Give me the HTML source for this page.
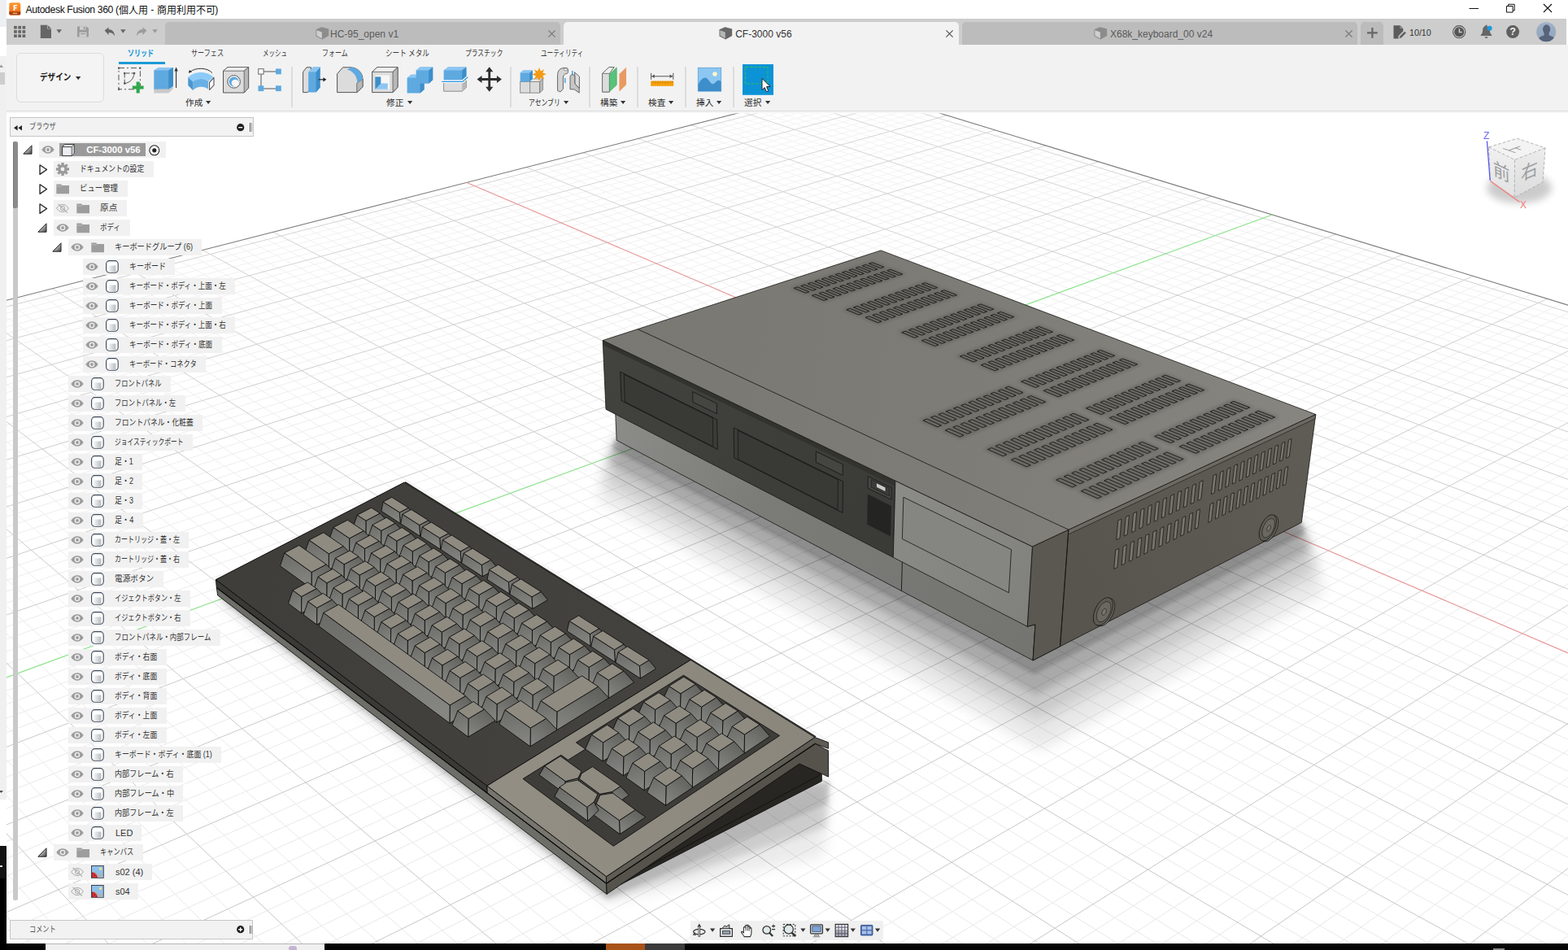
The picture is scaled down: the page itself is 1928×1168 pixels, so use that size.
<!DOCTYPE html>
<html><head><meta charset="utf-8"><title>Autodesk Fusion 360</title>
<style>
html,body{margin:0;padding:0}
body{width:1928px;height:1168px;position:relative;overflow:hidden;background:#fff;font-family:"Liberation Sans",sans-serif;font-size:12px;color:#222}
#vp{position:absolute;left:0;top:0;width:1928px;height:1168px}

.a{position:absolute}
.jt{position:absolute;overflow:visible}
.jt text{font-family:"Liberation Sans","Noto Sans CJK JP",sans-serif}
.t{position:absolute;white-space:nowrap;font-family:"Liberation Sans",sans-serif}
.tab{position:absolute;top:27px;height:28px;border-radius:5px 5px 0 0}
.row{position:absolute;height:19.8px;background:#f1f1f1}
svg.i{position:absolute;overflow:visible}

</style></head><body>
<svg id="vp" width="1928" height="1168" viewBox="0 0 1928 1168">
<clipPath id="vpc"><rect x="8" y="139.5" width="1920" height="1021"/></clipPath>
<g clip-path="url(#vpc)">
<defs><linearGradient id="gmin" gradientUnits="userSpaceOnUse" x1="0" y1="140" x2="0" y2="1160"><stop offset="0" stop-color="#f3f3f3"/><stop offset="0.35" stop-color="#eeeeee"/><stop offset="1" stop-color="#e8e8e8"/></linearGradient><linearGradient id="gmaj" gradientUnits="userSpaceOnUse" x1="0" y1="140" x2="0" y2="1160"><stop offset="0" stop-color="#d6d6d6"/><stop offset="0.4" stop-color="#cdcdcd"/><stop offset="1" stop-color="#c6c6c6"/></linearGradient></defs>
<path d="M-885.3 597.9L1042.2 104.5M-876.1 614.9L1063.6 111M-871.4 623.6L1074.5 114.3M-866.6 632.4L1085.4 117.7M-861.8 641.3L1096.4 121M-851.9 659.4L1118.7 127.9M-846.9 668.7L1130 131.3M-841.8 678.1L1141.4 134.8M-836.7 687.7L1152.9 138.3M-826.1 707.1L1176.2 145.4M-820.7 717.1L1188 149M-815.3 727.2L1199.9 152.7M-809.8 737.4L1211.9 156.3M-798.4 758.3L1236.2 163.7M-792.7 769L1248.5 167.5M-786.8 779.8L1260.9 171.3M-780.8 790.8L1273.4 175.1M-768.7 813.3L1298.8 182.9M-762.4 824.8L1311.6 186.8M-756.1 836.5L1324.6 190.8M-749.7 848.4L1337.7 194.8M-736.5 872.7L1364.2 202.9M-729.8 885.1L1377.7 207M-723 897.7L1391.3 211.1M-716 910.5L1405 215.3M-701.8 936.8L1432.7 223.8M-694.5 950.3L1446.8 228.1M-687.1 964L1461 232.4M-679.5 977.9L1475.4 236.8M-664.1 1006.5L1504.5 245.7M-656.2 1021.1L1519.3 250.2M-648.1 1036L1534.2 254.8M-639.9 1051.2L1549.2 259.4M-623 1082.3L1579.7 268.7M-614.4 1098.3L1595.2 273.4M-605.6 1114.6L1610.9 278.2M-596.6 1131.2L1626.7 283.1M-578.2 1165.3L1658.7 292.9M-568.7 1182.8L1675 297.8M-559 1200.6L1691.5 302.8M-549.2 1218.8L1708.1 307.9M-528.9 1256.3L1741.8 318.2M-518.5 1275.5L1758.9 323.5M-507.8 1295.2L1776.2 328.7M-497 1315.3L1793.7 334.1M-474.6 1356.6L1829.2 344.9M-463 1377.9L1847.2 350.4M-451.3 1399.7L1865.4 356M-439.2 1421.9L1883.9 361.6M-414.4 1467.8L1921.3 373.1M-401.6 1491.5L1940.3 378.9M-388.4 1515.8L1959.6 384.8M-375 1540.5L1979 390.7M-347.3 1591.8L2018.5 402.8M-333 1618.3L2038.6 408.9M-318.3 1645.4L2058.9 415.1M-303.2 1673.2L2079.5 421.4M-272.1 1730.7L2121.3 434.2M-255.9 1760.6L2142.5 440.7M-239.4 1791.1L2164 447.2M-222.4 1822.5L2185.8 453.9M-187.2 1887.6L2230.1 467.4M-168.8 1921.5L2252.6 474.3M-150 1956.2L2275.4 481.3M-130.7 1991.9L2298.5 488.3M-90.5 2066.2L2345.4 502.7M-69.5 2104.9L2369.4 510M-48 2144.8L2393.6 517.4M-25.8 2185.7L2418.1 524.9M20.5 2271.3L2468 540.1M44.7 2316L2493.4 547.9M69.7 2362.1L2519.2 555.7M95.4 2409.6L2545.3 563.7M149.3 2509.2L2598.4 580M177.6 2561.5L2625.5 588.2M206.8 2615.4L2653 596.6M237 2671.2L2680.8 605.1M300.5 2788.6L2737.6 622.5M334 2850.4L2766.5 631.3M368.6 2914.5L2795.8 640.3M404.6 2980.9L2825.6 649.4M480.6 3121.3L2886.2 667.9M520.8 3195.6L2917.2 677.4M562.6 3272.8L2948.6 686.9M606.1 3353.2L2980.5 696.7M1042.2 104.5L3012.7 706.5M1019.3 110.3L2997.3 724.4M1007.8 113.3L2989.4 733.5M996.2 116.3L2981.5 742.7M984.4 119.3L2973.4 752M960.7 125.3L2956.9 771.1M948.8 128.4L2948.6 780.8M936.7 131.5L2940.1 790.6M924.5 134.6L2931.4 800.6M900 140.9L2913.9 820.9M887.5 144.1L2904.9 831.2M875 147.3L2895.8 841.7M862.4 150.5L2886.6 852.4M836.9 157L2867.8 874.1M824 160.3L2858.2 885.2M811 163.7L2848.5 896.5M797.9 167L2838.6 907.9M771.4 173.8L2818.5 931.2M758 177.2L2808.2 943.1M744.5 180.7L2797.7 955.2M730.9 184.2L2787.1 967.4M703.4 191.2L2765.4 992.5M689.4 194.8L2754.3 1005.3M675.4 198.4L2743.1 1018.4M661.2 202L2731.7 1031.6M632.6 209.3L2708.3 1058.6M618.1 213L2696.3 1072.4M603.5 216.8L2684.2 1086.5M588.7 220.6L2671.8 1100.8M558.9 228.2L2646.5 1130M543.8 232.1L2633.6 1145M528.6 235.9L2620.4 1160.2M513.2 239.9L2607 1175.7M482.2 247.8L2579.6 1207.4M466.4 251.9L2565.5 1223.7M450.6 255.9L2551.2 1240.2M434.6 260L2536.7 1257M402.2 268.3L2506.8 1291.6M385.8 272.5L2491.5 1309.3M369.2 276.7L2475.9 1327.3M352.5 281L2460 1345.7M318.7 289.7L2427.3 1383.4M301.5 294.1L2410.6 1402.8M284.3 298.5L2393.5 1422.6M266.8 303L2376.1 1442.7M231.5 312L2340.2 1484.1M213.6 316.6L2321.8 1505.4M195.5 321.2L2303 1527.2M177.3 325.9L2283.9 1549.3M140.3 335.3L2244.4 1595M121.6 340.1L2224 1618.5M102.7 345L2203.3 1642.5M83.6 349.9L2182.1 1667M44.9 359.8L2138.3 1717.6M25.3 364.8L2115.7 1743.7M5.5 369.8L2092.7 1770.4M-14.5 375L2069.1 1797.6M-55 385.3L2020.4 1854M-75.6 390.6L1995.2 1883.1M-96.3 395.9L1969.4 1912.9M-117.3 401.3L1943 1943.4M-159.8 412.2L1888.4 2006.6M-181.4 417.7L1860.1 2039.3M-203.2 423.3L1831.1 2072.8M-225.2 428.9L1801.4 2107.1M-269.9 440.3L1739.8 2178.4M-292.6 446.2L1707.8 2215.4M-315.5 452L1675 2253.4M-338.6 457.9L1641.3 2292.4M-385.6 470L1571.1 2373.4M-409.5 476.1L1534.6 2415.6M-433.6 482.2L1497.1 2459M-457.9 488.5L1458.6 2503.6M-507.4 501.1L1378.1 2596.6M-532.5 507.6L1336.1 2645.2M-557.9 514.1L1292.8 2695.2M-583.6 520.7L1248.3 2746.8M-635.8 534L1155 2854.6M-662.3 540.8L1106.1 2911.1M-689.1 547.7L1055.7 2969.5M-716.2 554.6L1003.6 3029.7M-771.3 568.7L894.1 3156.2M-799.3 575.9L836.6 3222.8M-827.6 583.1L777 3291.6M-856.3 590.5L715.3 3363" stroke="url(#gmin)" stroke-width="1" fill="none"/>
<path d="M-880.7 606.3L1052.9 107.7M-856.9 650.3L1107.5 124.4M-831.4 697.3L1164.5 141.9M-804.1 747.8L1224 160M-774.8 802L1286 179M-743.2 860.4L1350.9 198.8M-709 923.6L1418.8 219.5M-671.9 992.1L1489.9 241.3M-631.5 1066.6L1564.4 264M-587.5 1148.1L1642.6 287.9M-539.1 1237.4L1724.8 313M-485.9 1335.7L1811.3 339.5M-426.9 1444.6L1902.5 367.3M-361.3 1565.8L1998.6 396.7M-287.9 1701.6L2100.3 427.8M-205 1854.7L2207.8 460.6M-110.9 2028.6L2321.8 495.4M-3 2227.9L2442.9 532.4M121.9 2458.6L2571.7 571.8M268.2 2728.9L2709 613.7M441.9 3049.8L2855.7 658.6M651.4 3436.9L3012.7 706.5M1030.8 107.4L3005.1 715.4M972.6 122.3L2965.2 761.5M912.3 137.7L2922.7 810.6M849.7 153.7L2877.3 863.2M784.7 170.4L2828.6 919.4M717.2 187.7L2776.3 979.9M647 205.6L2720.1 1045M573.9 224.4L2659.3 1115.3M497.8 243.8L2593.4 1191.4M418.4 264.1L2521.9 1274.1M335.7 285.3L2443.8 1364.4M249.2 307.5L2358.3 1463.2M158.9 330.6L2264.3 1571.9M64.4 354.8L2160.4 1692.1M-34.6 380.1L2045 1825.5M-138.5 406.7L1916 1974.6M-247.4 434.6L1771 2142.3M-362 463.9L1606.7 2332.4M-482.5 494.8L1418.9 2549.5M-609.6 527.3L1202.3 2799.9M-743.6 561.6L949.8 3091.9M-885.3 597.9L651.4 3436.9" stroke="url(#gmaj)" stroke-width="1" fill="none"/>
<path d="M-885.3 597.9L1042.2 104.5L3012.7 706.5" stroke="#7a7a7a" stroke-width="1.1" fill="none"/>
<line x1="573.9" y1="224.4" x2="2659.3" y2="1115.3" stroke="#f29797" stroke-width="1.05"/>
<line x1="-631.5" y1="1066.6" x2="1564.4" y2="264" stroke="#8aea8a" stroke-width="1.05"/>
<defs>
<linearGradient id="ctop" gradientUnits="userSpaceOnUse" x1="760" y1="420" x2="1600" y2="520"><stop offset="0" stop-color="#7a7872"/><stop offset="0.5" stop-color="#7e7c76"/><stop offset="1" stop-color="#878580"/></linearGradient>
<linearGradient id="cside" gradientUnits="userSpaceOnUse" x1="1310" y1="700" x2="1610" y2="560"><stop offset="0" stop-color="#57554e"/><stop offset="1" stop-color="#5f5c55"/></linearGradient>
<linearGradient id="cbase" gradientUnits="userSpaceOnUse" x1="760" y1="520" x2="1270" y2="790"><stop offset="0" stop-color="#8b8c88"/><stop offset="0.35" stop-color="#7b7c78"/><stop offset="1" stop-color="#747571"/></linearGradient>
<linearGradient id="clp" gradientUnits="userSpaceOnUse" x1="1100" y1="600" x2="1270" y2="760"><stop offset="0" stop-color="#8b8c88"/><stop offset="1" stop-color="#80817d"/></linearGradient>
<linearGradient id="cdark" gradientUnits="userSpaceOnUse" x1="745" y1="430" x2="1100" y2="680"><stop offset="0" stop-color="#42423f"/><stop offset="1" stop-color="#3a3a37"/></linearGradient>
<filter id="blur8" x="-20%" y="-20%" width="140%" height="140%"><feGaussianBlur stdDeviation="9"/></filter>
<filter id="blur4" x="-20%" y="-20%" width="140%" height="140%"><feGaussianBlur stdDeviation="4.5"/></filter><filter id="blur3" x="-20%" y="-20%" width="140%" height="140%"><feGaussianBlur stdDeviation="2.2"/></filter>
</defs>
<polygon points="1080.5,423.6 756.4,540.3 734,613.4 1279.8,921.9 1629.9,728.5 1600.3,642.4" fill="#000" opacity="0.09" filter="url(#blur8)"/>
<polygon points="1080.5,423.6 756.4,540.3 741.4,589.4 1276.6,885.5 1620.2,700.1 1600.3,642.4" fill="#000" opacity="0.13" filter="url(#blur8)"/>
<polygon points="1080.5,423.6 756.4,540.3 747.7,568.6 1273.8,854.1 1611.7,675.5 1600.3,642.4" fill="#000" opacity="0.15" filter="url(#blur4)"/>
<polygon points="1080.5,423.6 756.4,540.3 752.8,552.1 1271.7,829.4 1605.1,656.1 1600.3,642.4" fill="#000" opacity="0.16" filter="url(#blur3)"/>
<polygon points="756.4,499.7 1273.3,764 1270.1,812 758.2,541.3" fill="url(#cbase)" stroke="#141412" stroke-width="0.8" stroke-linejoin="round"/>
<line x1="1108.4" y1="726.4" x2="1109.7" y2="681.6" stroke="#141412" stroke-width="0.9"/>
<polygon points="1269.4,672 1617.8,509.5 1600.3,642.4 1270.1,812 1273,767.8 1263.2,770.3" fill="url(#cside)" stroke="#141412" stroke-width="0.8" stroke-linejoin="round"/>
<polygon points="1269.4,672 1313.9,651.2 1303.5,794.8 1270.1,812 1273,767.8 1263.2,770.3" fill="#5a5850" stroke="#141412" stroke-width="0.8" stroke-linejoin="round"/>
<polygon points="1313.9,651.2 1617.8,509.5 1617,514.9 1313.4,657.1" fill="#6b6962" stroke="#141412" stroke-width="0.6" stroke-linejoin="round"/>
<polygon points="741.2,418.5 1100.9,591.1 1098.3,685.3 745,503.2" fill="url(#cdark)" stroke="#141412" stroke-width="0.8" stroke-linejoin="round"/>
<polygon points="741.2,418.5 1109.8,595.4 1109.6,601.7 741.5,424.2" fill="#32322f"/>
<polygon points="1100.9,591.1 1269.4,672 1263.2,770.3 1098.3,685.3" fill="url(#clp)" stroke="#141412" stroke-width="0.8" stroke-linejoin="round"/>
<polygon points="1110.9,611.3 1243.5,675.7 1240.4,728.7 1109.4,662.6" fill="#858682" stroke="#141412" stroke-width="0.8" stroke-linejoin="round"/>
<polygon points="762.7,457.2 881.6,515.8 882.3,552.5 764.1,492.6" fill="#3b3b38" stroke="#141412" stroke-width="0.8" stroke-linejoin="round"/>
<polygon points="767.2,460.3 876.3,513.9 876.9,549.2 768.6,494.3" fill="#393936" stroke="#141412" stroke-width="0.7" stroke-linejoin="round"/>
<polygon points="851.6,481.6 881.3,496 881.5,508.7 851.9,494.3" fill="#454542" stroke="#141412" stroke-width="0.8" stroke-linejoin="round"/>
<polygon points="902.2,525.9 1036.6,592 1036,630.4 902.7,562.8" fill="#3b3b38" stroke="#141412" stroke-width="0.8" stroke-linejoin="round"/>
<polygon points="907.3,529.2 1030.5,589.9 1030,626.7 907.7,564.8" fill="#393936" stroke="#141412" stroke-width="0.7" stroke-linejoin="round"/>
<polygon points="1003.4,555.1 1036.4,571 1036.2,584.4 1003.3,568.3" fill="#454542" stroke="#141412" stroke-width="0.8" stroke-linejoin="round"/>
<polygon points="1067.4,585.8 1096.1,599.7 1095.8,614.2 1067.1,600.1" fill="#474744" stroke="#141412" stroke-width="0.8" stroke-linejoin="round"/>
<polygon points="1071.2,589.5 1093.6,600.4 1093.4,609.8 1071,598.9" fill="#3c3c39" stroke="#141412" stroke-width="0.6" stroke-linejoin="round"/>
<polygon points="1077.5,593.6 1089,599.2 1088.9,604.7 1077.4,599.1" fill="#c9c9c6" stroke="#141412" stroke-width="0.6" stroke-linejoin="round"/>
<polygon points="1066.9,607.6 1096,621.9 1095.1,659.4 1066.2,644.8" fill="#242422"/>
<polygon points="741.2,418.5 1083.1,307.9 1617.8,509.5 1269.4,672" fill="url(#ctop)" stroke="#141412" stroke-width="0.8" stroke-linejoin="round"/>
<line x1="784" y1="404.6" x2="1313.9" y2="651.2" stroke="#141412" stroke-width="0.8"/>
<line x1="1313.9" y1="651.2" x2="1303.5" y2="794.8" stroke="#141412" stroke-width="0.8"/>
<g opacity="0.16" filter="url(#blur3)"><polygon points="971.3,354.2 1072.7,321.1 1091.8,328.4 990.3,362" fill="#000"/><polygon points="993.5,363.3 1095,329.6 1114.5,337.1 1012.8,371.3" fill="#000"/><polygon points="1035.8,380.7 1137.6,345.9 1157.7,353.7 1055.8,389" fill="#000"/><polygon points="1059.1,390.3 1161,354.9 1181.4,362.8 1079.4,398.7" fill="#000"/><polygon points="1103.6,408.6 1205.7,372.1 1226.8,380.2 1124.6,417.3" fill="#000"/><polygon points="1128.1,418.7 1230.3,381.5 1251.8,389.8 1149.5,427.5" fill="#000"/><polygon points="1175,438 1277.3,399.5 1299.6,408.1 1197.2,447.1" fill="#000"/><polygon points="1200.8,448.7 1303.2,409.5 1325.9,418.2 1223.4,458" fill="#000"/><polygon points="1250.3,469 1352.8,428.5 1376.2,437.4 1273.7,478.6" fill="#000"/><polygon points="1277.5,480.2 1380,438.9 1403.9,448.1 1301.4,490.1" fill="#000"/><polygon points="1329.8,501.7 1432.2,458.9 1457,468.4 1354.5,511.9" fill="#000"/><polygon points="1358.6,513.6 1461,470 1486.2,479.6 1383.9,524" fill="#000"/><polygon points="1413.9,536.4 1516.1,491.1 1542.3,501.1 1440.1,547.1" fill="#000"/><polygon points="1444.4,548.9 1546.6,502.8 1573.2,513 1471.2,559.9" fill="#000"/><polygon points="1129.4,516.8 1240.2,473 1263.6,482.7 1152.7,527.3" fill="#000"/><polygon points="1156.5,529 1267.4,484.3 1291.3,494.2 1180.4,539.7" fill="#000"/><polygon points="1208.7,552.3 1319.7,506 1344.4,516.2 1233.4,563.4" fill="#000"/><polygon points="1237.5,565.2 1348.5,517.9 1373.7,528.4 1262.7,576.5" fill="#000"/><polygon points="1292.7,589.9 1403.8,540.8 1430,551.7 1319,601.7" fill="#000"/><polygon points="1323.3,603.6 1434.3,553.5 1461.1,564.6 1350.1,615.6" fill="#000"/></g>
<g fill="#6a6963" stroke="#1d1d1b" stroke-width="0.95" stroke-linejoin="round"><polygon points="976.2,354.3 980.5,352.9 994.9,358.8 990.6,360.2"/><polygon points="984.8,351.5 989.1,350.1 1003.5,355.9 999.2,357.3"/><polygon points="993.4,348.7 997.6,347.3 1012,353.1 1007.8,354.5"/><polygon points="1001.9,345.9 1006.1,344.5 1020.5,350.3 1016.3,351.7"/><polygon points="1010.4,343.1 1014.6,341.7 1029,347.5 1024.8,348.9"/><polygon points="1018.8,340.3 1023,339 1037.4,344.7 1033.2,346.1"/><polygon points="1027.2,337.6 1031.4,336.2 1045.8,341.9 1041.6,343.3"/><polygon points="1035.5,334.9 1039.7,333.5 1054.1,339.2 1050,340.6"/><polygon points="1043.8,332.2 1048,330.8 1062.4,336.4 1058.3,337.8"/><polygon points="1052.1,329.4 1056.2,328.1 1070.7,333.7 1066.5,335.1"/><polygon points="1060.3,326.8 1064.4,325.4 1078.9,331 1074.8,332.4"/><polygon points="1068.5,324.1 1072.6,322.8 1087,328.3 1082.9,329.7"/><polygon points="998.4,363.4 1002.7,362 1017.3,368 1013,369.4"/><polygon points="1007,360.5 1011.3,359.1 1026,365.1 1021.7,366.5"/><polygon points="1015.6,357.7 1019.9,356.3 1034.5,362.2 1030.2,363.6"/><polygon points="1024.1,354.9 1028.4,353.4 1043,359.3 1038.8,360.8"/><polygon points="1032.6,352 1036.9,350.6 1051.5,356.5 1047.3,357.9"/><polygon points="1041.1,349.2 1045.3,347.8 1060,353.7 1055.7,355.1"/><polygon points="1049.5,346.4 1053.7,345 1068.3,350.8 1064.2,352.2"/><polygon points="1057.8,343.7 1062,342.3 1076.7,348 1072.5,349.4"/><polygon points="1066.2,340.9 1070.3,339.5 1085,345.3 1080.8,346.6"/><polygon points="1074.4,338.1 1078.5,336.8 1093.2,342.5 1089.1,343.9"/><polygon points="1082.6,335.4 1086.7,334 1101.4,339.7 1097.3,341.1"/><polygon points="1090.8,332.7 1094.9,331.3 1109.6,337 1105.5,338.4"/><polygon points="1040.8,380.8 1045.1,379.3 1060.2,385.5 1055.9,387"/><polygon points="1049.5,377.9 1053.8,376.4 1068.9,382.5 1064.6,384"/><polygon points="1058.1,374.9 1062.4,373.5 1077.5,379.6 1073.2,381.1"/><polygon points="1066.6,372 1070.9,370.5 1086,376.6 1081.8,378.1"/><polygon points="1075.1,369.1 1079.4,367.6 1094.5,373.7 1090.3,375.2"/><polygon points="1083.6,366.2 1087.8,364.7 1103,370.8 1098.7,372.2"/><polygon points="1092,363.3 1096.2,361.9 1111.4,367.9 1107.2,369.3"/><polygon points="1100.4,360.4 1104.6,359 1119.7,365 1115.6,366.4"/><polygon points="1108.7,357.6 1112.9,356.2 1128.1,362.1 1123.9,363.5"/><polygon points="1117,354.7 1121.2,353.3 1136.3,359.2 1132.2,360.7"/><polygon points="1125.3,351.9 1129.4,350.5 1144.6,356.4 1140.4,357.8"/><polygon points="1133.5,349.1 1137.6,347.7 1152.7,353.6 1148.7,355"/><polygon points="1064.1,390.4 1068.5,388.9 1083.9,395.2 1079.5,396.7"/><polygon points="1072.8,387.4 1077.1,385.9 1092.5,392.2 1088.2,393.7"/><polygon points="1081.4,384.4 1085.7,382.9 1101.1,389.1 1096.8,390.7"/><polygon points="1090,381.4 1094.3,379.9 1109.7,386.1 1105.4,387.6"/><polygon points="1098.5,378.5 1102.8,377 1118.2,383.1 1113.9,384.6"/><polygon points="1107,375.5 1111.2,374 1126.6,380.2 1122.4,381.7"/><polygon points="1115.4,372.6 1119.6,371.1 1135.1,377.2 1130.9,378.7"/><polygon points="1123.8,369.7 1128,368.2 1143.4,374.3 1139.2,375.7"/><polygon points="1132.2,366.8 1136.3,365.3 1151.8,371.3 1147.6,372.8"/><polygon points="1140.5,363.9 1144.6,362.4 1160,368.4 1155.9,369.9"/><polygon points="1148.7,361 1152.8,359.6 1168.3,365.5 1164.2,367"/><polygon points="1156.9,358.2 1161,356.7 1176.5,362.7 1172.4,364.1"/><polygon points="1108.7,408.7 1113.1,407.2 1129,413.7 1124.6,415.3"/><polygon points="1117.4,405.6 1121.8,404.1 1137.7,410.6 1133.3,412.1"/><polygon points="1126.1,402.5 1130.4,401 1146.3,407.4 1142,409"/><polygon points="1134.7,399.5 1138.9,397.9 1154.9,404.3 1150.6,405.9"/><polygon points="1143.2,396.4 1147.5,394.9 1163.4,401.2 1159.1,402.8"/><polygon points="1151.7,393.3 1155.9,391.8 1171.9,398.2 1167.6,399.7"/><polygon points="1160.2,390.3 1164.4,388.8 1180.3,395.1 1176.1,396.6"/><polygon points="1168.6,387.3 1172.7,385.8 1188.7,392.1 1184.5,393.6"/><polygon points="1176.9,384.3 1181.1,382.8 1197,389 1192.9,390.5"/><polygon points="1185.2,381.3 1189.4,379.8 1205.3,386 1201.2,387.5"/><polygon points="1193.5,378.4 1197.6,376.9 1213.6,383 1209.5,384.5"/><polygon points="1201.7,375.4 1205.8,373.9 1221.8,380.1 1217.7,381.6"/><polygon points="1133.3,418.8 1137.7,417.2 1153.9,423.9 1149.5,425.5"/><polygon points="1142,415.7 1146.3,414.1 1162.5,420.7 1158.2,422.3"/><polygon points="1150.7,412.5 1155,410.9 1171.2,417.5 1166.9,419.1"/><polygon points="1159.3,409.4 1163.5,407.8 1179.7,414.3 1175.5,415.9"/><polygon points="1167.8,406.3 1172.1,404.7 1188.3,411.2 1184,412.8"/><polygon points="1176.3,403.2 1180.6,401.6 1196.8,408.1 1192.5,409.6"/><polygon points="1184.8,400.1 1189,398.5 1205.2,404.9 1201,406.5"/><polygon points="1193.2,397 1197.4,395.5 1213.6,401.9 1209.4,403.4"/><polygon points="1201.6,394 1205.7,392.4 1221.9,398.8 1217.8,400.3"/><polygon points="1209.9,390.9 1214,389.4 1230.2,395.7 1226.1,397.2"/><polygon points="1218.1,387.9 1222.3,386.4 1238.5,392.7 1234.4,394.2"/><polygon points="1226.4,384.9 1230.5,383.4 1246.7,389.6 1242.6,391.2"/><polygon points="1180.3,438.1 1184.7,436.5 1201.4,443.4 1197,445"/><polygon points="1189,434.9 1193.3,433.2 1210.1,440 1205.8,441.7"/><polygon points="1197.7,431.6 1202,430 1218.8,436.8 1214.4,438.4"/><polygon points="1206.3,428.4 1210.6,426.7 1227.3,433.5 1223.1,435.1"/><polygon points="1214.9,425.1 1219.1,423.5 1235.9,430.2 1231.6,431.9"/><polygon points="1223.4,421.9 1227.6,420.3 1244.4,427 1240.1,428.6"/><polygon points="1231.8,418.7 1236.1,417.1 1252.8,423.8 1248.6,425.4"/><polygon points="1240.3,415.6 1244.5,414 1261.2,420.6 1257,422.2"/><polygon points="1248.6,412.4 1252.8,410.8 1269.6,417.4 1265.4,419"/><polygon points="1257,409.3 1261.1,407.7 1277.9,414.2 1273.8,415.8"/><polygon points="1265.3,406.2 1269.4,404.6 1286.2,411.1 1282,412.7"/><polygon points="1273.5,403.1 1277.6,401.5 1294.4,408 1290.3,409.5"/><polygon points="1206.2,448.8 1210.6,447.1 1227.6,454.1 1223.3,455.8"/><polygon points="1214.9,445.4 1219.3,443.8 1236.3,450.7 1232,452.4"/><polygon points="1223.6,442.1 1227.9,440.5 1245,447.4 1240.7,449"/><polygon points="1232.2,438.8 1236.5,437.2 1253.6,444 1249.3,445.7"/><polygon points="1240.8,435.5 1245,433.9 1262.1,440.7 1257.9,442.4"/><polygon points="1249.3,432.3 1253.5,430.6 1270.6,437.4 1266.4,439.1"/><polygon points="1257.8,429 1262,427.4 1279.1,434.1 1274.9,435.8"/><polygon points="1266.2,425.8 1270.4,424.2 1287.5,430.9 1283.3,432.5"/><polygon points="1274.6,422.6 1278.7,421 1295.8,427.6 1291.7,429.3"/><polygon points="1282.9,419.4 1287.1,417.8 1304.1,424.4 1300,426"/><polygon points="1291.2,416.2 1295.3,414.6 1312.4,421.2 1308.3,422.8"/><polygon points="1299.4,413 1303.5,411.5 1320.6,418 1316.5,419.6"/><polygon points="1255.7,469.1 1260.1,467.4 1277.8,474.6 1273.4,476.4"/><polygon points="1264.5,465.7 1268.8,464 1286.5,471.2 1282.2,472.9"/><polygon points="1273.2,462.2 1277.5,460.5 1295.2,467.7 1290.8,469.4"/><polygon points="1281.8,458.8 1286.1,457.1 1303.8,464.2 1299.5,466"/><polygon points="1290.4,455.4 1294.6,453.7 1312.3,460.8 1308,462.5"/><polygon points="1298.9,452 1303.1,450.4 1320.8,457.4 1316.6,459.1"/><polygon points="1307.4,448.7 1311.6,447 1329.3,454 1325.1,455.7"/><polygon points="1315.8,445.3 1320,443.7 1337.7,450.6 1333.5,452.3"/><polygon points="1324.2,442 1328.4,440.4 1346,447.3 1341.9,448.9"/><polygon points="1332.5,438.7 1336.7,437.1 1354.4,443.9 1350.2,445.6"/><polygon points="1340.8,435.4 1344.9,433.8 1362.6,440.6 1358.5,442.3"/><polygon points="1349,432.2 1353.1,430.5 1370.8,437.3 1366.7,439"/><polygon points="1283.1,480.4 1287.4,478.6 1305.5,486 1301.1,487.8"/><polygon points="1291.8,476.8 1296.2,475.1 1314.2,482.4 1309.8,484.2"/><polygon points="1300.5,473.3 1304.8,471.6 1322.8,478.9 1318.5,480.7"/><polygon points="1309.1,469.8 1313.4,468.1 1331.4,475.4 1327.1,477.1"/><polygon points="1317.7,466.4 1322,464.7 1340,471.9 1335.7,473.6"/><polygon points="1326.2,462.9 1330.5,461.2 1348.5,468.4 1344.3,470.1"/><polygon points="1334.7,459.5 1338.9,457.8 1357,464.9 1352.7,466.7"/><polygon points="1343.1,456.1 1347.3,454.4 1365.4,461.5 1361.2,463.2"/><polygon points="1351.5,452.7 1355.7,451 1373.7,458.1 1369.5,459.8"/><polygon points="1359.9,449.4 1364,447.7 1382,454.7 1377.9,456.4"/><polygon points="1368.1,446 1372.3,444.3 1390.3,451.3 1386.2,453"/><polygon points="1376.4,442.7 1380.5,441 1398.5,447.9 1394.4,449.6"/><polygon points="1335.4,501.9 1339.8,500 1358.5,507.7 1354.1,509.6"/><polygon points="1344.2,498.2 1348.5,496.4 1367.2,504 1362.8,505.9"/><polygon points="1352.8,494.6 1357.2,492.8 1375.8,500.3 1371.5,502.2"/><polygon points="1361.5,491 1365.8,489.2 1384.4,496.7 1380.2,498.5"/><polygon points="1370,487.4 1374.3,485.6 1393,493.1 1388.7,494.9"/><polygon points="1378.6,483.8 1382.8,482 1401.5,489.5 1397.3,491.3"/><polygon points="1387.1,480.3 1391.3,478.5 1409.9,485.9 1405.7,487.7"/><polygon points="1395.5,476.7 1399.7,475 1418.3,482.3 1414.2,484.1"/><polygon points="1403.9,473.2 1408,471.5 1426.7,478.8 1422.5,480.6"/><polygon points="1412.2,469.7 1416.3,468 1435,475.3 1430.9,477"/><polygon points="1420.5,466.3 1424.6,464.6 1443.2,471.8 1439.1,473.5"/><polygon points="1428.7,462.8 1432.8,461.1 1451.5,468.3 1447.4,470"/><polygon points="1364.3,513.7 1368.7,511.9 1387.7,519.7 1383.4,521.6"/><polygon points="1373,510 1377.4,508.2 1396.5,515.9 1392.1,517.8"/><polygon points="1381.7,506.3 1386,504.5 1405.1,512.2 1400.8,514"/><polygon points="1390.4,502.6 1394.6,500.8 1413.7,508.5 1409.4,510.3"/><polygon points="1398.9,499 1403.2,497.1 1422.2,504.8 1418,506.6"/><polygon points="1407.5,495.3 1411.7,493.5 1430.7,501.1 1426.5,502.9"/><polygon points="1415.9,491.7 1420.1,489.9 1439.2,497.4 1435,499.3"/><polygon points="1424.3,488.1 1428.5,486.3 1447.6,493.8 1443.4,495.6"/><polygon points="1432.7,484.5 1436.9,482.8 1455.9,490.2 1451.8,492"/><polygon points="1441,481 1445.2,479.2 1464.2,486.6 1460.1,488.4"/><polygon points="1449.3,477.5 1453.4,475.7 1472.5,483.1 1468.3,484.8"/><polygon points="1457.5,473.9 1461.6,472.2 1480.7,479.5 1476.6,481.3"/><polygon points="1419.7,536.5 1424.1,534.6 1443.9,542.7 1439.5,544.6"/><polygon points="1428.4,532.6 1432.8,530.7 1452.5,538.8 1448.2,540.7"/><polygon points="1437.1,528.8 1441.4,526.9 1461.2,534.9 1456.9,536.8"/><polygon points="1445.7,525 1450,523.1 1469.8,531 1465.5,532.9"/><polygon points="1454.3,521.2 1458.5,519.3 1478.3,527.2 1474,529.1"/><polygon points="1462.8,517.4 1467,515.5 1486.8,523.4 1482.5,525.3"/><polygon points="1471.2,513.6 1475.5,511.8 1495.2,519.6 1491,521.5"/><polygon points="1479.7,509.9 1483.8,508.1 1503.6,515.8 1499.4,517.7"/><polygon points="1488,506.2 1492.2,504.4 1511.9,512.1 1507.8,513.9"/><polygon points="1496.3,502.5 1500.5,500.7 1520.2,508.4 1516.1,510.2"/><polygon points="1504.6,498.9 1508.7,497 1528.4,504.7 1524.3,506.5"/><polygon points="1512.8,495.2 1516.9,493.4 1536.6,501 1532.5,502.8"/><polygon points="1450.3,549.1 1454.7,547.1 1474.8,555.4 1470.5,557.4"/><polygon points="1459,545.1 1463.3,543.2 1483.5,551.4 1479.2,553.4"/><polygon points="1467.7,541.2 1472,539.2 1492.2,547.4 1487.8,549.4"/><polygon points="1476.3,537.3 1480.6,535.4 1500.7,543.5 1496.5,545.4"/><polygon points="1484.8,533.4 1489.1,531.5 1509.3,539.6 1505,541.5"/><polygon points="1493.3,529.6 1497.6,527.7 1517.7,535.7 1513.5,537.6"/><polygon points="1501.8,525.8 1506,523.8 1526.1,531.8 1521.9,533.7"/><polygon points="1510.2,522 1514.4,520.1 1534.5,528 1530.3,529.9"/><polygon points="1518.5,518.2 1522.7,516.3 1542.8,524.2 1538.7,526.1"/><polygon points="1526.8,514.4 1531,512.5 1551.1,520.4 1547,522.3"/><polygon points="1535.1,510.7 1539.2,508.8 1559.3,516.6 1555.2,518.5"/><polygon points="1543.3,507 1547.4,505.1 1567.5,512.9 1563.4,514.7"/><polygon points="1135.1,517 1139.8,515.1 1157.4,523 1152.7,524.9"/><polygon points="1144.5,513.2 1149.2,511.4 1166.8,519.2 1162.1,521.1"/><polygon points="1153.9,509.5 1158.6,507.7 1176.2,515.4 1171.5,517.3"/><polygon points="1163.2,505.8 1167.9,504 1185.5,511.7 1180.9,513.5"/><polygon points="1172.5,502.1 1177.1,500.3 1194.8,508 1190.1,509.8"/><polygon points="1181.7,498.5 1186.3,496.7 1204,504.3 1199.4,506.1"/><polygon points="1190.9,494.8 1195.5,493 1213.1,500.6 1208.5,502.4"/><polygon points="1200,491.2 1204.5,489.4 1222.2,497 1217.7,498.8"/><polygon points="1209.1,487.6 1213.6,485.9 1231.2,493.3 1226.7,495.1"/><polygon points="1218.1,484.1 1222.5,482.3 1240.2,489.7 1235.7,491.5"/><polygon points="1227,480.5 1231.5,478.8 1249.1,486.1 1244.7,487.9"/><polygon points="1235.9,477 1240.3,475.2 1258,482.6 1253.6,484.4"/><polygon points="1162.3,529.1 1167,527.2 1185,535.2 1180.3,537.2"/><polygon points="1171.8,525.3 1176.5,523.4 1194.4,531.4 1189.7,533.3"/><polygon points="1181.2,521.5 1185.8,519.6 1203.8,527.5 1199.1,529.5"/><polygon points="1190.5,517.8 1195.1,515.9 1213.1,523.7 1208.5,525.6"/><polygon points="1199.8,514 1204.4,512.1 1222.4,519.9 1217.8,521.8"/><polygon points="1209,510.3 1213.6,508.4 1231.6,516.2 1227,518.1"/><polygon points="1218.2,506.6 1222.8,504.7 1240.8,512.4 1236.2,514.3"/><polygon points="1227.3,502.9 1231.8,501.1 1249.9,508.7 1245.3,510.6"/><polygon points="1236.4,499.2 1240.9,497.4 1258.9,505 1254.4,506.9"/><polygon points="1245.4,495.6 1249.9,493.8 1267.9,501.4 1263.4,503.2"/><polygon points="1254.3,492 1258.8,490.2 1276.8,497.7 1272.4,499.5"/><polygon points="1263.2,488.4 1267.7,486.6 1285.7,494.1 1281.3,495.9"/><polygon points="1214.5,552.5 1219.3,550.5 1237.9,558.8 1233.2,560.8"/><polygon points="1224,548.5 1228.7,546.5 1247.4,554.8 1242.7,556.8"/><polygon points="1233.4,544.6 1238.1,542.6 1256.8,550.8 1252.1,552.8"/><polygon points="1242.8,540.7 1247.4,538.7 1266.1,546.9 1261.4,548.8"/><polygon points="1252.1,536.8 1256.7,534.8 1275.4,542.9 1270.7,544.9"/><polygon points="1261.3,532.9 1265.9,531 1284.6,539 1280,541"/><polygon points="1270.5,529.1 1275.1,527.1 1293.8,535.1 1289.2,537.1"/><polygon points="1279.6,525.2 1284.2,523.3 1302.9,531.3 1298.3,533.2"/><polygon points="1288.7,521.4 1293.2,519.5 1311.9,527.4 1307.4,529.4"/><polygon points="1297.7,517.7 1302.2,515.8 1320.9,523.6 1316.4,525.5"/><polygon points="1306.7,513.9 1311.1,512 1329.8,519.8 1325.4,521.7"/><polygon points="1315.6,510.2 1320,508.3 1338.7,516.1 1334.3,518"/><polygon points="1243.4,565.4 1248.1,563.3 1267.2,571.8 1262.4,573.9"/><polygon points="1252.9,561.3 1257.6,559.3 1276.6,567.7 1271.9,569.8"/><polygon points="1262.3,557.3 1267,555.3 1286,563.7 1281.3,565.7"/><polygon points="1271.6,553.3 1276.3,551.3 1295.4,559.6 1290.7,561.7"/><polygon points="1280.9,549.3 1285.6,547.4 1304.6,555.6 1300,557.6"/><polygon points="1290.2,545.4 1294.8,543.4 1313.9,551.6 1309.3,553.6"/><polygon points="1299.4,541.5 1304,539.5 1323,547.7 1318.4,549.7"/><polygon points="1308.5,537.6 1313.1,535.6 1332.1,543.7 1327.6,545.7"/><polygon points="1317.6,533.7 1322.1,531.8 1341.2,539.8 1336.7,541.8"/><polygon points="1326.6,529.8 1331.1,527.9 1350.2,535.9 1345.7,537.9"/><polygon points="1335.6,526 1340,524.1 1359.1,532.1 1354.6,534"/><polygon points="1344.5,522.2 1348.9,520.3 1368,528.2 1363.5,530.2"/><polygon points="1298.8,590.1 1303.5,588 1323.3,596.8 1318.6,599"/><polygon points="1308.3,585.9 1313,583.8 1332.8,592.6 1328.1,594.7"/><polygon points="1317.7,581.7 1322.4,579.6 1342.2,588.3 1337.5,590.5"/><polygon points="1327,577.6 1331.7,575.5 1351.5,584.2 1346.9,586.2"/><polygon points="1336.4,573.4 1341,571.4 1360.8,580 1356.2,582.1"/><polygon points="1345.6,569.3 1350.2,567.3 1370,575.8 1365.4,577.9"/><polygon points="1354.8,565.3 1359.4,563.2 1379.2,571.7 1374.6,573.8"/><polygon points="1363.9,561.2 1368.5,559.2 1388.3,567.6 1383.7,569.7"/><polygon points="1373,557.2 1377.5,555.2 1397.3,563.6 1392.8,565.6"/><polygon points="1382,553.2 1386.5,551.2 1406.3,559.5 1401.8,561.6"/><polygon points="1391,549.2 1395.4,547.3 1415.2,555.5 1410.8,557.5"/><polygon points="1399.9,545.3 1404.3,543.3 1424.1,551.5 1419.7,553.5"/><polygon points="1329.4,603.8 1334.2,601.6 1354.4,610.6 1349.6,612.8"/><polygon points="1338.9,599.5 1343.6,597.4 1363.8,606.3 1359.1,608.5"/><polygon points="1348.3,595.2 1353,593.1 1373.2,602 1368.5,604.1"/><polygon points="1357.7,591 1362.3,588.9 1382.6,597.7 1377.9,599.8"/><polygon points="1367,586.8 1371.6,584.7 1391.8,593.5 1387.2,595.6"/><polygon points="1376.2,582.6 1380.8,580.5 1401.1,589.2 1396.5,591.3"/><polygon points="1385.4,578.4 1390,576.4 1410.2,585 1405.6,587.1"/><polygon points="1394.5,574.3 1399.1,572.2 1419.3,580.9 1414.8,582.9"/><polygon points="1403.6,570.2 1408.1,568.2 1428.3,576.7 1423.8,578.8"/><polygon points="1412.6,566.1 1417.1,564.1 1437.3,572.6 1432.8,574.6"/><polygon points="1421.6,562.1 1426,560 1446.2,568.5 1441.8,570.5"/><polygon points="1430.5,558 1434.9,556 1455.1,564.4 1450.7,566.5"/></g>
<g fill="#77756e" stroke="#22221f" stroke-width="0.9" stroke-linejoin="round"><polygon points="1374.7,640.1 1379,638.1 1377,661.6 1372.7,663.7"/><polygon points="1384.2,635.6 1388.4,633.6 1386.3,657.1 1382.1,659.2"/><polygon points="1393.5,631.2 1397.7,629.2 1395.7,652.7 1391.5,654.7"/><polygon points="1402.9,626.8 1407,624.8 1404.9,648.2 1400.7,650.2"/><polygon points="1412.1,622.4 1416.2,620.5 1414.1,643.8 1410,645.8"/><polygon points="1421.3,618.1 1425.4,616.2 1423.2,639.4 1419.1,641.4"/><polygon points="1430.4,613.8 1434.5,611.8 1432.3,635.1 1428.2,637"/><polygon points="1439.5,609.5 1443.6,607.6 1441.3,630.7 1437.3,632.7"/><polygon points="1448.5,605.2 1452.6,603.3 1450.3,626.4 1446.2,628.4"/><polygon points="1457.5,601 1461.5,599.1 1459.1,622.2 1455.2,624.1"/><polygon points="1466.4,596.8 1470.4,594.9 1468,617.9 1464,619.8"/><polygon points="1475.2,592.6 1479.2,590.7 1476.8,613.7 1472.8,615.6"/><polygon points="1491.9,584.8 1495.8,582.9 1493.3,605.8 1489.4,607.6"/><polygon points="1500.5,580.7 1504.4,578.8 1501.9,601.6 1498.1,603.5"/><polygon points="1509.2,576.6 1513,574.7 1510.5,597.5 1506.7,599.3"/><polygon points="1517.7,572.5 1521.6,570.7 1519,593.4 1515.2,595.2"/><polygon points="1526.3,568.5 1530.1,566.7 1527.5,589.3 1523.7,591.2"/><polygon points="1534.7,564.5 1538.5,562.7 1535.9,585.3 1532.1,587.1"/><polygon points="1543.1,560.5 1546.9,558.7 1544.3,581.3 1540.5,583.1"/><polygon points="1551.5,556.6 1555.3,554.8 1552.6,577.3 1548.8,579.1"/><polygon points="1559.8,552.6 1563.5,550.9 1560.8,573.3 1557.1,575.1"/><polygon points="1568.1,548.7 1571.8,547 1569,569.4 1565.3,571.1"/><polygon points="1576.3,544.9 1580,543.1 1577.2,565.5 1573.5,567.2"/><polygon points="1584.4,541 1588.1,539.3 1585.3,561.6 1581.6,563.3"/><polygon points="1371.7,676.3 1375.9,674.3 1373.9,697.5 1369.7,699.5"/><polygon points="1381.1,671.8 1385.3,669.7 1383.2,692.9 1379.1,694.9"/><polygon points="1390.4,667.3 1394.5,665.2 1392.5,688.3 1388.3,690.4"/><polygon points="1399.6,662.8 1403.8,660.8 1401.7,683.8 1397.5,685.8"/><polygon points="1408.8,658.3 1412.9,656.3 1410.8,679.3 1406.7,681.3"/><polygon points="1417.9,653.9 1422,651.9 1419.9,674.8 1415.8,676.8"/><polygon points="1427,649.5 1431.1,647.5 1428.9,670.4 1424.8,672.4"/><polygon points="1436,645.1 1440.1,643.2 1437.8,666 1433.8,668"/><polygon points="1445,640.8 1449,638.8 1446.7,661.6 1442.7,663.6"/><polygon points="1453.9,636.5 1457.9,634.5 1455.6,657.3 1451.6,659.2"/><polygon points="1462.8,632.2 1466.7,630.3 1464.4,652.9 1460.4,654.9"/><polygon points="1471.5,627.9 1475.5,626 1473.1,648.6 1469.2,650.6"/><polygon points="1488.1,619.9 1492,618 1489.5,640.5 1485.7,642.4"/><polygon points="1496.7,615.7 1500.6,613.8 1498.1,636.3 1494.3,638.2"/><polygon points="1505.3,611.6 1509.1,609.7 1506.6,632.1 1502.8,634"/><polygon points="1513.8,607.4 1517.6,605.6 1515.1,627.9 1511.3,629.8"/><polygon points="1522.3,603.3 1526.1,601.5 1523.5,623.8 1519.7,625.7"/><polygon points="1530.7,599.2 1534.5,597.4 1531.9,619.7 1528.1,621.5"/><polygon points="1539.1,595.2 1542.8,593.4 1540.2,615.6 1536.5,617.4"/><polygon points="1547.4,591.2 1551.1,589.4 1548.5,611.5 1544.8,613.3"/><polygon points="1555.7,587.2 1559.4,585.4 1556.7,607.5 1553,609.3"/><polygon points="1563.9,583.2 1567.6,581.4 1564.8,603.5 1561.2,605.3"/><polygon points="1572,579.2 1575.7,577.4 1573,599.5 1569.3,601.3"/><polygon points="1580.1,575.3 1583.8,573.5 1581,595.5 1577.4,597.3"/></g>
<polygon points="1370.7,746.5 1370.6,742.6 1369.7,739.3 1368.1,737 1365.8,735.7 1363,735.6 1359.9,736.7 1356.7,738.8 1353.7,741.9 1351,745.7 1348.8,750 1347.2,754.5 1346.5,758.8 1346.6,762.8 1347.4,766 1349.1,768.3 1351.4,769.6 1354.2,769.7 1357.3,768.7 1360.5,766.5 1363.5,763.4 1366.2,759.6 1368.4,755.3 1369.9,750.9" fill="#6b6962" stroke="#141412" stroke-width="0.8" stroke-linejoin="round"/>
<polygon points="1368.5,745.7 1368.4,741.8 1367.5,738.5 1365.9,736.2 1363.6,734.9 1360.8,734.8 1357.7,735.9 1354.5,738 1351.5,741.1 1348.8,744.9 1346.6,749.2 1345,753.7 1344.3,758 1344.4,762 1345.2,765.2 1346.9,767.5 1349.2,768.8 1352,768.9 1355.1,767.9 1358.3,765.7 1361.3,762.6 1364,758.8 1366.2,754.5 1367.7,750.1" fill="#5d5b54" stroke="#141412" stroke-width="0.8" stroke-linejoin="round"/>
<polygon points="1366,747.7 1366,744.8 1365.3,742.4 1364.1,740.7 1362.4,739.8 1360.4,739.7 1358.2,740.5 1355.8,742 1353.6,744.3 1351.6,747.1 1350,750.2 1348.9,753.5 1348.3,756.7 1348.4,759.5 1349,761.9 1350.3,763.6 1351.9,764.5 1354,764.6 1356.2,763.9 1358.6,762.3 1360.8,760 1362.8,757.3 1364.4,754.1 1365.5,750.8" fill="#6a6861" stroke="#141412" stroke-width="0.6" stroke-linejoin="round"/>
<polygon points="1360.4,750.8 1360.4,749.9 1360.2,749.2 1359.8,748.7 1359.3,748.4 1358.6,748.3 1357.9,748.6 1357.2,749.1 1356.5,749.8 1355.8,750.7 1355.3,751.7 1355,752.7 1354.8,753.7 1354.8,754.6 1355,755.3 1355.4,755.9 1355.9,756.2 1356.6,756.2 1357.3,756 1358,755.5 1358.7,754.8 1359.4,753.9 1359.9,752.9 1360.2,751.9" fill="#77756e" stroke="#141412" stroke-width="0.6" stroke-linejoin="round"/>
<polygon points="1571.5,644.4 1571.7,640.7 1571.1,637.6 1569.8,635.3 1567.9,633.9 1565.6,633.7 1562.9,634.6 1560.2,636.5 1557.5,639.3 1555,642.8 1552.9,646.8 1551.4,651 1550.6,655.1 1550.5,658.8 1551.1,662 1552.4,664.3 1554.2,665.6 1556.6,665.8 1559.2,665 1562,663.1 1564.7,660.3 1567.2,656.7 1569.2,652.7 1570.7,648.6" fill="#6b6962" stroke="#141412" stroke-width="0.8" stroke-linejoin="round"/>
<polygon points="1569.3,643.6 1569.5,639.9 1568.9,636.8 1567.6,634.5 1565.7,633.1 1563.4,632.9 1560.7,633.8 1558,635.7 1555.3,638.5 1552.8,642 1550.7,646 1549.2,650.2 1548.4,654.3 1548.3,658 1548.9,661.2 1550.2,663.5 1552,664.8 1554.4,665 1557,664.2 1559.8,662.3 1562.5,659.5 1565,655.9 1567,651.9 1568.5,647.8" fill="#5d5b54" stroke="#141412" stroke-width="0.8" stroke-linejoin="round"/>
<polygon points="1567.3,645.4 1567.4,642.6 1567,640.3 1566.1,638.7 1564.7,637.7 1563,637.5 1561,638.2 1559,639.5 1557,641.6 1555.2,644.2 1553.7,647.1 1552.6,650.1 1552,653.2 1551.9,655.9 1552.4,658.2 1553.3,659.9 1554.7,660.8 1556.4,661 1558.3,660.4 1560.3,659 1562.3,656.9 1564.1,654.4 1565.6,651.4 1566.7,648.4" fill="#6a6861" stroke="#141412" stroke-width="0.6" stroke-linejoin="round"/>
<polygon points="1562.5,648.1 1562.5,647.3 1562.4,646.5 1562.1,646 1561.7,645.7 1561.1,645.7 1560.5,645.9 1559.9,646.3 1559.2,646.9 1558.7,647.8 1558.2,648.7 1557.9,649.6 1557.7,650.6 1557.6,651.5 1557.8,652.2 1558.1,652.7 1558.5,653 1559,653.1 1559.6,652.9 1560.3,652.4 1560.9,651.8 1561.5,651 1562,650.1 1562.3,649.1" fill="#77756e" stroke="#141412" stroke-width="0.6" stroke-linejoin="round"/>
<defs>
<linearGradient id="kfr" x1="0.2" y1="0" x2="0.4" y2="1"><stop offset="0" stop-color="#6b6c68"/><stop offset="1" stop-color="#858681"/></linearGradient>
<linearGradient id="krt" x1="0.9" y1="0" x2="0.2" y2="1"><stop offset="0" stop-color="#5d5d59"/><stop offset="1" stop-color="#83847f"/></linearGradient>
<linearGradient id="kdark" gradientUnits="userSpaceOnUse" x1="300" y1="720" x2="900" y2="800"><stop offset="0" stop-color="#403e3a"/><stop offset="1" stop-color="#45433f"/></linearGradient>
<linearGradient id="klight" gradientUnits="userSpaceOnUse" x1="650" y1="1000" x2="1000" y2="900"><stop offset="0" stop-color="#928e84"/><stop offset="1" stop-color="#8a867c"/></linearGradient>
</defs>
<polygon points="270,733.9 267.2,738.5 745.7,1109.4 1013.4,1052.5 1019.9,960.3 928.7,974.9" fill="#000" opacity="0.08" filter="url(#blur8)"/>
<polygon points="270,733.9 268.2,736.8 746.3,1106.7 1015.9,1016.8 1019.9,960.3 928.7,974.9" fill="#000" opacity="0.12" filter="url(#blur4)"/>
<polygon points="270,733.9 269.1,735.3 746.8,1104.4 1017.9,988.1 1019.9,960.3 928.7,974.9" fill="#000" opacity="0.10" filter="url(#blur3)"/>
<polygon points="764,1087 983,939 1010.3,951.8 1010.3,960.5" fill="#282622" stroke="#0f0f0e" stroke-width="0.9" stroke-linejoin="round"/>
<line x1="797" y1="1065.5" x2="1008" y2="953" stroke="#0f0f0e" stroke-width="0.8"/>
<polygon points="745.5,1086.2 1002.5,914.3 1014.7,921 1018.6,922.8 1018.6,955.1 983,939 746,1099.3" fill="#56534c" stroke="#0f0f0e" stroke-width="0.9" stroke-linejoin="round"/>
<polygon points="745.5,1077.7 1001.9,906.5 1018.6,912.8 1018.6,920.3 1014.9,919 1002.5,914.3 745.5,1086.2" fill="#5f5c55" stroke="#0f0f0e" stroke-width="0.9" stroke-linejoin="round"/>
<line x1="745.5" y1="1086.2" x2="1002.5" y2="914.3" stroke="#0c0c0b" stroke-width="1.3"/>
<polygon points="266.3,722.5 745.5,1086.2 746,1099.3 267.7,731.9" fill="#6e6e69" stroke="#0f0f0e" stroke-width="0.9" stroke-linejoin="round"/>
<polygon points="265.4,712.6 598.9,966.2 599.2,975.2 266.3,722.5" fill="#3a3936" stroke="#0f0f0e" stroke-width="0.9" stroke-linejoin="round"/>
<polygon points="598.9,966.2 745.5,1077.7 745.5,1086.2 599.2,975.2" fill="#77756e" stroke="#0f0f0e" stroke-width="0.9" stroke-linejoin="round"/>
<line x1="266.3" y1="722.5" x2="745.5" y2="1086.2" stroke="#0c0c0b" stroke-width="1.2"/>
<polygon points="265.4,712.6 497.1,593.1 849.2,811.4 598.9,966.2" fill="url(#kdark)" stroke="#0f0f0e" stroke-width="1" stroke-linejoin="round"/>
<polygon points="598.9,966.2 849.2,811.4 1001.9,906.5 745.5,1077.7" fill="url(#klight)" stroke="#0f0f0e" stroke-width="1" stroke-linejoin="round"/>
<line x1="498.1" y1="592.8" x2="1003.1" y2="906" stroke="#2c2b28" stroke-width="1.6"/>
<polygon points="643,957.6 689.9,928.3 698.5,934.4 719.9,921 708.4,912.9 840.5,830.2 958.5,904.5 754.3,1040.3" fill="#3f3d39" stroke="#0f0f0e" stroke-width="0.9" stroke-linejoin="round"/>
<g><polygon points="491.4,630 502.2,624.3 510.4,633.9 492.2,643.5" fill="url(#krt)" stroke="#0f0f0e" stroke-width="0.9" stroke-linejoin="round"/><polygon points="471,617 491.4,630 492.2,643.5 468.9,628.4" fill="url(#kfr)" stroke="#0f0f0e" stroke-width="0.9" stroke-linejoin="round"/><polygon points="471,617 481.8,611.3 502.2,624.3 491.4,630" fill="#8f8b81" stroke="#0f0f0e" stroke-width="0.9" stroke-linejoin="round"/><polygon points="515.7,645.6 526.7,639.7 534.8,649.5 516.6,659.3" fill="url(#krt)" stroke="#0f0f0e" stroke-width="0.9" stroke-linejoin="round"/><polygon points="494.9,632.2 515.7,645.6 516.6,659.3 492.7,643.8" fill="url(#kfr)" stroke="#0f0f0e" stroke-width="0.9" stroke-linejoin="round"/><polygon points="494.9,632.2 505.8,626.5 526.7,639.7 515.7,645.6" fill="#8f8b81" stroke="#0f0f0e" stroke-width="0.9" stroke-linejoin="round"/><polygon points="540.7,661.5 551.7,655.6 559.9,665.4 541.6,675.4" fill="url(#krt)" stroke="#0f0f0e" stroke-width="0.9" stroke-linejoin="round"/><polygon points="519.3,647.9 540.7,661.5 541.6,675.4 517.1,659.6" fill="url(#kfr)" stroke="#0f0f0e" stroke-width="0.9" stroke-linejoin="round"/><polygon points="519.3,647.9 530.3,642 551.7,655.6 540.7,661.5" fill="#8f8b81" stroke="#0f0f0e" stroke-width="0.9" stroke-linejoin="round"/><polygon points="566.2,677.9 577.3,671.8 585.6,681.7 567.1,691.9" fill="url(#krt)" stroke="#0f0f0e" stroke-width="0.9" stroke-linejoin="round"/><polygon points="544.4,663.9 566.2,677.9 567.1,691.9 542,675.7" fill="url(#kfr)" stroke="#0f0f0e" stroke-width="0.9" stroke-linejoin="round"/><polygon points="544.4,663.9 555.4,657.9 577.3,671.8 566.2,677.9" fill="#8f8b81" stroke="#0f0f0e" stroke-width="0.9" stroke-linejoin="round"/><polygon points="592.4,694.6 603.6,688.4 611.8,698.4 593.3,708.8" fill="url(#krt)" stroke="#0f0f0e" stroke-width="0.9" stroke-linejoin="round"/><polygon points="570,680.3 592.4,694.6 593.3,708.8 567.6,692.2" fill="url(#kfr)" stroke="#0f0f0e" stroke-width="0.9" stroke-linejoin="round"/><polygon points="570,680.3 581.1,674.2 603.6,688.4 592.4,694.6" fill="#8f8b81" stroke="#0f0f0e" stroke-width="0.9" stroke-linejoin="round"/><polygon points="625.4,715.7 636.6,709.4 645,719.5 626.3,730.1" fill="url(#krt)" stroke="#0f0f0e" stroke-width="0.9" stroke-linejoin="round"/><polygon points="601.5,700.4 625.4,715.7 626.3,730.1 599,712.5" fill="url(#kfr)" stroke="#0f0f0e" stroke-width="0.9" stroke-linejoin="round"/><polygon points="601.5,700.4 612.7,694.2 636.6,709.4 625.4,715.7" fill="#8f8b81" stroke="#0f0f0e" stroke-width="0.9" stroke-linejoin="round"/><polygon points="653.9,733.9 665.2,727.5 673.6,737.6 654.8,748.5" fill="url(#krt)" stroke="#0f0f0e" stroke-width="0.9" stroke-linejoin="round"/><polygon points="629.4,718.3 653.9,733.9 654.8,748.5 626.8,730.4" fill="url(#kfr)" stroke="#0f0f0e" stroke-width="0.9" stroke-linejoin="round"/><polygon points="629.4,718.3 640.6,711.9 665.2,727.5 653.9,733.9" fill="#8f8b81" stroke="#0f0f0e" stroke-width="0.9" stroke-linejoin="round"/><polygon points="725.3,779.6 736.7,772.8 745.2,783.1 726.1,794.5" fill="url(#krt)" stroke="#0f0f0e" stroke-width="0.9" stroke-linejoin="round"/><polygon points="700.1,763.5 725.3,779.6 726.1,794.5 697.2,775.9" fill="url(#kfr)" stroke="#0f0f0e" stroke-width="0.9" stroke-linejoin="round"/><polygon points="700.1,763.5 711.5,756.8 736.7,772.8 725.3,779.6" fill="#8f8b81" stroke="#0f0f0e" stroke-width="0.9" stroke-linejoin="round"/><polygon points="755.5,798.9 767,791.9 775.5,802.4 756.3,814" fill="url(#krt)" stroke="#0f0f0e" stroke-width="0.9" stroke-linejoin="round"/><polygon points="729.7,782.3 755.5,798.9 756.3,814 726.7,794.9" fill="url(#kfr)" stroke="#0f0f0e" stroke-width="0.9" stroke-linejoin="round"/><polygon points="729.7,782.3 741.1,775.5 767,791.9 755.5,798.9" fill="#8f8b81" stroke="#0f0f0e" stroke-width="0.9" stroke-linejoin="round"/><polygon points="786.5,818.7 798.1,811.6 806.6,822.2 787.3,834.1" fill="url(#krt)" stroke="#0f0f0e" stroke-width="0.9" stroke-linejoin="round"/><polygon points="760,801.7 786.5,818.7 787.3,834.1 756.9,814.4" fill="url(#kfr)" stroke="#0f0f0e" stroke-width="0.9" stroke-linejoin="round"/><polygon points="760,801.7 771.5,794.8 798.1,811.6 786.5,818.7" fill="#8f8b81" stroke="#0f0f0e" stroke-width="0.9" stroke-linejoin="round"/><polygon points="836.9,852.8 855.2,841.3 867.8,855.4 836.4,875.3" fill="url(#krt)" stroke="#0f0f0e" stroke-width="0.9" stroke-linejoin="round"/><polygon points="822.5,843.6 836.9,852.8 836.4,875.3 814.6,861.2" fill="url(#kfr)" stroke="#0f0f0e" stroke-width="0.9" stroke-linejoin="round"/><polygon points="822.5,843.6 840.8,832.2 855.2,841.3 836.9,852.8" fill="#8f8b81" stroke="#0f0f0e" stroke-width="0.9" stroke-linejoin="round"/><polygon points="862.6,869.2 880.9,857.5 893.5,871.7 862.1,892" fill="url(#krt)" stroke="#0f0f0e" stroke-width="0.9" stroke-linejoin="round"/><polygon points="847.9,859.8 862.6,869.2 862.1,892 839.8,877.5" fill="url(#kfr)" stroke="#0f0f0e" stroke-width="0.9" stroke-linejoin="round"/><polygon points="847.9,859.8 866.2,848.2 880.9,857.5 862.6,869.2" fill="#8f8b81" stroke="#0f0f0e" stroke-width="0.9" stroke-linejoin="round"/><polygon points="888.8,886 907.2,874.1 919.8,888.3 888.2,909" fill="url(#krt)" stroke="#0f0f0e" stroke-width="0.9" stroke-linejoin="round"/><polygon points="873.8,876.4 888.8,886 888.2,909 865.5,894.2" fill="url(#kfr)" stroke="#0f0f0e" stroke-width="0.9" stroke-linejoin="round"/><polygon points="873.8,876.4 892.1,864.6 907.2,874.1 888.8,886" fill="#8f8b81" stroke="#0f0f0e" stroke-width="0.9" stroke-linejoin="round"/><polygon points="915.5,903.1 934,891 946.7,905.3 915,926.4" fill="url(#krt)" stroke="#0f0f0e" stroke-width="0.9" stroke-linejoin="round"/><polygon points="900.2,893.3 915.5,903.1 915,926.4 891.8,911.3" fill="url(#kfr)" stroke="#0f0f0e" stroke-width="0.9" stroke-linejoin="round"/><polygon points="900.2,893.3 918.7,881.3 934,891 915.5,903.1" fill="#8f8b81" stroke="#0f0f0e" stroke-width="0.9" stroke-linejoin="round"/><polygon points="805.6,872.5 824.2,860.8 837,874.9 805.2,895.2" fill="url(#krt)" stroke="#0f0f0e" stroke-width="0.9" stroke-linejoin="round"/><polygon points="791.3,863.1 805.6,872.5 805.2,895.2 783.5,880.8" fill="url(#kfr)" stroke="#0f0f0e" stroke-width="0.9" stroke-linejoin="round"/><polygon points="791.3,863.1 809.9,851.6 824.2,860.8 805.6,872.5" fill="#8f8b81" stroke="#0f0f0e" stroke-width="0.9" stroke-linejoin="round"/><polygon points="831.1,889.3 849.8,877.4 862.7,891.6 830.7,912.2" fill="url(#krt)" stroke="#0f0f0e" stroke-width="0.9" stroke-linejoin="round"/><polygon points="816.6,879.7 831.1,889.3 830.7,912.2 808.5,897.5" fill="url(#kfr)" stroke="#0f0f0e" stroke-width="0.9" stroke-linejoin="round"/><polygon points="816.6,879.7 835.2,867.9 849.8,877.4 831.1,889.3" fill="#8f8b81" stroke="#0f0f0e" stroke-width="0.9" stroke-linejoin="round"/><polygon points="857.2,906.4 875.9,894.3 888.9,908.6 856.7,929.6" fill="url(#krt)" stroke="#0f0f0e" stroke-width="0.9" stroke-linejoin="round"/><polygon points="842.3,896.6 857.2,906.4 856.7,929.6 834.1,914.5" fill="url(#kfr)" stroke="#0f0f0e" stroke-width="0.9" stroke-linejoin="round"/><polygon points="842.3,896.6 861,884.6 875.9,894.3 857.2,906.4" fill="#8f8b81" stroke="#0f0f0e" stroke-width="0.9" stroke-linejoin="round"/><polygon points="883.9,923.9 902.7,911.6 915.6,925.9 883.4,947.3" fill="url(#krt)" stroke="#0f0f0e" stroke-width="0.9" stroke-linejoin="round"/><polygon points="868.7,913.9 883.9,923.9 883.4,947.3 860.3,931.9" fill="url(#kfr)" stroke="#0f0f0e" stroke-width="0.9" stroke-linejoin="round"/><polygon points="868.7,913.9 887.4,901.7 902.7,911.6 883.9,923.9" fill="#8f8b81" stroke="#0f0f0e" stroke-width="0.9" stroke-linejoin="round"/><polygon points="450,640.2 467.2,631.1 479.5,644 449.8,659.7" fill="url(#krt)" stroke="#0f0f0e" stroke-width="0.9" stroke-linejoin="round"/><polygon points="439.3,633.2 450,640.2 449.8,659.7 433.8,649" fill="url(#kfr)" stroke="#0f0f0e" stroke-width="0.9" stroke-linejoin="round"/><polygon points="439.3,633.2 456.6,624.2 467.2,631.1 450,640.2" fill="#8f8b81" stroke="#0f0f0e" stroke-width="0.9" stroke-linejoin="round"/><polygon points="468.7,652.5 486.1,643.3 498.4,656.3 468.6,672.2" fill="url(#krt)" stroke="#0f0f0e" stroke-width="0.9" stroke-linejoin="round"/><polygon points="457.9,645.4 468.7,652.5 468.6,672.2 452.3,661.3" fill="url(#kfr)" stroke="#0f0f0e" stroke-width="0.9" stroke-linejoin="round"/><polygon points="457.9,645.4 475.2,636.3 486.1,643.3 468.7,652.5" fill="#8f8b81" stroke="#0f0f0e" stroke-width="0.9" stroke-linejoin="round"/><polygon points="487.8,665.1 505.3,655.8 517.6,668.8 487.7,684.9" fill="url(#krt)" stroke="#0f0f0e" stroke-width="0.9" stroke-linejoin="round"/><polygon points="476.8,657.8 487.8,665.1 487.7,684.9 471.1,673.8" fill="url(#kfr)" stroke="#0f0f0e" stroke-width="0.9" stroke-linejoin="round"/><polygon points="476.8,657.8 494.2,648.6 505.3,655.8 487.8,665.1" fill="#8f8b81" stroke="#0f0f0e" stroke-width="0.9" stroke-linejoin="round"/><polygon points="507.3,677.9 524.8,668.4 537.2,681.5 507.1,697.9" fill="url(#krt)" stroke="#0f0f0e" stroke-width="0.9" stroke-linejoin="round"/><polygon points="496.1,670.5 507.3,677.9 507.1,697.9 490.2,686.6" fill="url(#kfr)" stroke="#0f0f0e" stroke-width="0.9" stroke-linejoin="round"/><polygon points="496.1,670.5 513.5,661.1 524.8,668.4 507.3,677.9" fill="#8f8b81" stroke="#0f0f0e" stroke-width="0.9" stroke-linejoin="round"/><polygon points="527.1,690.9 544.7,681.3 557.2,694.5 526.9,711.1" fill="url(#krt)" stroke="#0f0f0e" stroke-width="0.9" stroke-linejoin="round"/><polygon points="515.7,683.4 527.1,690.9 526.9,711.1 509.7,699.6" fill="url(#kfr)" stroke="#0f0f0e" stroke-width="0.9" stroke-linejoin="round"/><polygon points="515.7,683.4 533.2,673.9 544.7,681.3 527.1,690.9" fill="#8f8b81" stroke="#0f0f0e" stroke-width="0.9" stroke-linejoin="round"/><polygon points="547.4,704.2 565,694.4 577.5,707.7 547.1,724.6" fill="url(#krt)" stroke="#0f0f0e" stroke-width="0.9" stroke-linejoin="round"/><polygon points="535.7,696.5 547.4,704.2 547.1,724.6 529.6,712.9" fill="url(#kfr)" stroke="#0f0f0e" stroke-width="0.9" stroke-linejoin="round"/><polygon points="535.7,696.5 553.3,686.9 565,694.4 547.4,704.2" fill="#8f8b81" stroke="#0f0f0e" stroke-width="0.9" stroke-linejoin="round"/><polygon points="568,717.7 585.7,707.8 598.2,721.2 567.7,738.3" fill="url(#krt)" stroke="#0f0f0e" stroke-width="0.9" stroke-linejoin="round"/><polygon points="556.1,709.9 568,717.7 567.7,738.3 549.8,726.4" fill="url(#kfr)" stroke="#0f0f0e" stroke-width="0.9" stroke-linejoin="round"/><polygon points="556.1,709.9 573.8,700.1 585.7,707.8 568,717.7" fill="#8f8b81" stroke="#0f0f0e" stroke-width="0.9" stroke-linejoin="round"/><polygon points="589,731.5 606.8,721.5 619.4,734.9 588.7,752.3" fill="url(#krt)" stroke="#0f0f0e" stroke-width="0.9" stroke-linejoin="round"/><polygon points="576.9,723.6 589,731.5 588.7,752.3 570.5,740.1" fill="url(#kfr)" stroke="#0f0f0e" stroke-width="0.9" stroke-linejoin="round"/><polygon points="576.9,723.6 594.6,713.6 606.8,721.5 589,731.5" fill="#8f8b81" stroke="#0f0f0e" stroke-width="0.9" stroke-linejoin="round"/><polygon points="610.4,745.6 628.3,735.4 640.9,748.9 610.1,766.6" fill="url(#krt)" stroke="#0f0f0e" stroke-width="0.9" stroke-linejoin="round"/><polygon points="598,737.5 610.4,745.6 610.1,766.6 591.5,754.2" fill="url(#kfr)" stroke="#0f0f0e" stroke-width="0.9" stroke-linejoin="round"/><polygon points="598,737.5 615.9,727.4 628.3,735.4 610.4,745.6" fill="#8f8b81" stroke="#0f0f0e" stroke-width="0.9" stroke-linejoin="round"/><polygon points="632.3,760 650.3,749.6 662.9,763.2 632,781.1" fill="url(#krt)" stroke="#0f0f0e" stroke-width="0.9" stroke-linejoin="round"/><polygon points="619.6,751.7 632.3,760 632,781.1 613,768.5" fill="url(#kfr)" stroke="#0f0f0e" stroke-width="0.9" stroke-linejoin="round"/><polygon points="619.6,751.7 637.6,741.4 650.3,749.6 632.3,760" fill="#8f8b81" stroke="#0f0f0e" stroke-width="0.9" stroke-linejoin="round"/><polygon points="654.5,774.6 672.6,764.1 685.3,777.7 654.2,796" fill="url(#krt)" stroke="#0f0f0e" stroke-width="0.9" stroke-linejoin="round"/><polygon points="641.7,766.2 654.5,774.6 654.2,796 634.9,783.1" fill="url(#kfr)" stroke="#0f0f0e" stroke-width="0.9" stroke-linejoin="round"/><polygon points="641.7,766.2 659.7,755.7 672.6,764.1 654.5,774.6" fill="#8f8b81" stroke="#0f0f0e" stroke-width="0.9" stroke-linejoin="round"/><polygon points="677.3,789.6 695.4,778.9 708.1,792.6 677,811.1" fill="url(#krt)" stroke="#0f0f0e" stroke-width="0.9" stroke-linejoin="round"/><polygon points="664.2,781 677.3,789.6 677,811.1 657.2,798" fill="url(#kfr)" stroke="#0f0f0e" stroke-width="0.9" stroke-linejoin="round"/><polygon points="664.2,781 682.3,770.3 695.4,778.9 677.3,789.6" fill="#8f8b81" stroke="#0f0f0e" stroke-width="0.9" stroke-linejoin="round"/><polygon points="700.5,804.8 718.7,793.9 731.5,807.7 700.1,826.6" fill="url(#krt)" stroke="#0f0f0e" stroke-width="0.9" stroke-linejoin="round"/><polygon points="687.1,796 700.5,804.8 700.1,826.6 680,813.2" fill="url(#kfr)" stroke="#0f0f0e" stroke-width="0.9" stroke-linejoin="round"/><polygon points="687.1,796 705.3,785.2 718.7,793.9 700.5,804.8" fill="#8f8b81" stroke="#0f0f0e" stroke-width="0.9" stroke-linejoin="round"/><polygon points="724.2,820.4 742.5,809.3 755.3,823.2 723.8,842.4" fill="url(#krt)" stroke="#0f0f0e" stroke-width="0.9" stroke-linejoin="round"/><polygon points="710.5,811.4 724.2,820.4 723.8,842.4 703.2,828.7" fill="url(#kfr)" stroke="#0f0f0e" stroke-width="0.9" stroke-linejoin="round"/><polygon points="710.5,811.4 728.8,800.5 742.5,809.3 724.2,820.4" fill="#8f8b81" stroke="#0f0f0e" stroke-width="0.9" stroke-linejoin="round"/><polygon points="748.4,836.3 766.8,825 779.6,839 748,858.5" fill="url(#krt)" stroke="#0f0f0e" stroke-width="0.9" stroke-linejoin="round"/><polygon points="734.4,827.1 748.4,836.3 748,858.5 727,844.5" fill="url(#kfr)" stroke="#0f0f0e" stroke-width="0.9" stroke-linejoin="round"/><polygon points="734.4,827.1 752.8,816 766.8,825 748.4,836.3" fill="#8f8b81" stroke="#0f0f0e" stroke-width="0.9" stroke-linejoin="round"/><polygon points="773.8,892.6 792.7,880.7 805.8,894.8 773.4,915.4" fill="url(#krt)" stroke="#0f0f0e" stroke-width="0.9" stroke-linejoin="round"/><polygon points="759.6,883 773.8,892.6 773.4,915.4 751.8,900.7" fill="url(#kfr)" stroke="#0f0f0e" stroke-width="0.9" stroke-linejoin="round"/><polygon points="759.6,883 778.4,871.2 792.7,880.7 773.8,892.6" fill="#8f8b81" stroke="#0f0f0e" stroke-width="0.9" stroke-linejoin="round"/><polygon points="799.2,909.7 818.2,897.6 831.3,911.8 798.8,932.8" fill="url(#krt)" stroke="#0f0f0e" stroke-width="0.9" stroke-linejoin="round"/><polygon points="784.7,899.9 799.2,909.7 798.8,932.8 776.8,917.7" fill="url(#kfr)" stroke="#0f0f0e" stroke-width="0.9" stroke-linejoin="round"/><polygon points="784.7,899.9 803.6,887.9 818.2,897.6 799.2,909.7" fill="#8f8b81" stroke="#0f0f0e" stroke-width="0.9" stroke-linejoin="round"/><polygon points="825.2,927.2 844.2,914.9 857.4,929.2 824.7,950.5" fill="url(#krt)" stroke="#0f0f0e" stroke-width="0.9" stroke-linejoin="round"/><polygon points="810.4,917.2 825.2,927.2 824.7,950.5 802.2,935.1" fill="url(#kfr)" stroke="#0f0f0e" stroke-width="0.9" stroke-linejoin="round"/><polygon points="810.4,917.2 829.3,905 844.2,914.9 825.2,927.2" fill="#8f8b81" stroke="#0f0f0e" stroke-width="0.9" stroke-linejoin="round"/><polygon points="851.7,945.1 870.8,932.5 884,946.9 851.2,968.6" fill="url(#krt)" stroke="#0f0f0e" stroke-width="0.9" stroke-linejoin="round"/><polygon points="836.6,934.8 851.7,945.1 851.2,968.6 828.2,952.9" fill="url(#kfr)" stroke="#0f0f0e" stroke-width="0.9" stroke-linejoin="round"/><polygon points="836.6,934.8 855.6,922.4 870.8,932.5 851.7,945.1" fill="#8f8b81" stroke="#0f0f0e" stroke-width="0.9" stroke-linejoin="round"/><polygon points="429.7,661.9 447.3,652.6 459.7,665.6 429.6,681.6" fill="url(#krt)" stroke="#0f0f0e" stroke-width="0.9" stroke-linejoin="round"/><polygon points="409.9,648.5 429.7,661.9 429.6,681.6 404.4,664.4" fill="url(#kfr)" stroke="#0f0f0e" stroke-width="0.9" stroke-linejoin="round"/><polygon points="409.9,648.5 427.4,639.4 447.3,652.6 429.7,661.9" fill="#8f8b81" stroke="#0f0f0e" stroke-width="0.9" stroke-linejoin="round"/><polygon points="448.5,674.5 466.1,665.2 478.6,678.2 448.4,694.4" fill="url(#krt)" stroke="#0f0f0e" stroke-width="0.9" stroke-linejoin="round"/><polygon points="437.7,667.2 448.5,674.5 448.4,694.4 432,683.2" fill="url(#kfr)" stroke="#0f0f0e" stroke-width="0.9" stroke-linejoin="round"/><polygon points="437.7,667.2 455.2,657.9 466.1,665.2 448.5,674.5" fill="#8f8b81" stroke="#0f0f0e" stroke-width="0.9" stroke-linejoin="round"/><polygon points="467.7,687.5 485.4,678 497.9,691 467.5,707.5" fill="url(#krt)" stroke="#0f0f0e" stroke-width="0.9" stroke-linejoin="round"/><polygon points="456.6,680 467.7,687.5 467.5,707.5 450.9,696.1" fill="url(#kfr)" stroke="#0f0f0e" stroke-width="0.9" stroke-linejoin="round"/><polygon points="456.6,680 474.3,670.6 485.4,678 467.7,687.5" fill="#8f8b81" stroke="#0f0f0e" stroke-width="0.9" stroke-linejoin="round"/><polygon points="487.2,700.6 505,691 517.6,704.1 487,720.9" fill="url(#krt)" stroke="#0f0f0e" stroke-width="0.9" stroke-linejoin="round"/><polygon points="475.9,693 487.2,700.6 487,720.9 470,709.3" fill="url(#kfr)" stroke="#0f0f0e" stroke-width="0.9" stroke-linejoin="round"/><polygon points="475.9,693 493.7,683.5 505,691 487.2,700.6" fill="#8f8b81" stroke="#0f0f0e" stroke-width="0.9" stroke-linejoin="round"/><polygon points="507,714 524.9,704.2 537.6,717.5 506.9,734.5" fill="url(#krt)" stroke="#0f0f0e" stroke-width="0.9" stroke-linejoin="round"/><polygon points="495.6,706.3 507,714 506.9,734.5 489.6,722.6" fill="url(#kfr)" stroke="#0f0f0e" stroke-width="0.9" stroke-linejoin="round"/><polygon points="495.6,706.3 513.4,696.6 524.9,704.2 507,714" fill="#8f8b81" stroke="#0f0f0e" stroke-width="0.9" stroke-linejoin="round"/><polygon points="527.3,727.7 545.3,717.8 558,731.1 527.1,748.3" fill="url(#krt)" stroke="#0f0f0e" stroke-width="0.9" stroke-linejoin="round"/><polygon points="515.6,719.8 527.3,727.7 527.1,748.3 509.5,736.3" fill="url(#kfr)" stroke="#0f0f0e" stroke-width="0.9" stroke-linejoin="round"/><polygon points="515.6,719.8 533.5,710 545.3,717.8 527.3,727.7" fill="#8f8b81" stroke="#0f0f0e" stroke-width="0.9" stroke-linejoin="round"/><polygon points="548,741.7 566,731.5 578.8,744.9 547.8,762.5" fill="url(#krt)" stroke="#0f0f0e" stroke-width="0.9" stroke-linejoin="round"/><polygon points="536.1,733.6 548,741.7 547.8,762.5 529.8,750.2" fill="url(#kfr)" stroke="#0f0f0e" stroke-width="0.9" stroke-linejoin="round"/><polygon points="536.1,733.6 554.1,723.6 566,731.5 548,741.7" fill="#8f8b81" stroke="#0f0f0e" stroke-width="0.9" stroke-linejoin="round"/><polygon points="569.1,755.9 587.2,745.6 600,759.1 568.8,776.9" fill="url(#krt)" stroke="#0f0f0e" stroke-width="0.9" stroke-linejoin="round"/><polygon points="556.9,747.7 569.1,755.9 568.8,776.9 550.5,764.3" fill="url(#kfr)" stroke="#0f0f0e" stroke-width="0.9" stroke-linejoin="round"/><polygon points="556.9,747.7 575,737.5 587.2,745.6 569.1,755.9" fill="#8f8b81" stroke="#0f0f0e" stroke-width="0.9" stroke-linejoin="round"/><polygon points="590.5,770.4 608.8,759.9 621.6,773.5 590.3,791.6" fill="url(#krt)" stroke="#0f0f0e" stroke-width="0.9" stroke-linejoin="round"/><polygon points="578.1,762 590.5,770.4 590.3,791.6 571.6,778.8" fill="url(#kfr)" stroke="#0f0f0e" stroke-width="0.9" stroke-linejoin="round"/><polygon points="578.1,762 596.3,751.7 608.8,759.9 590.5,770.4" fill="#8f8b81" stroke="#0f0f0e" stroke-width="0.9" stroke-linejoin="round"/><polygon points="612.5,785.2 630.8,774.6 643.6,788.2 612.2,806.6" fill="url(#krt)" stroke="#0f0f0e" stroke-width="0.9" stroke-linejoin="round"/><polygon points="599.8,776.6 612.5,785.2 612.2,806.6 593.1,793.5" fill="url(#kfr)" stroke="#0f0f0e" stroke-width="0.9" stroke-linejoin="round"/><polygon points="599.8,776.6 618.1,766.1 630.8,774.6 612.5,785.2" fill="#8f8b81" stroke="#0f0f0e" stroke-width="0.9" stroke-linejoin="round"/><polygon points="634.8,800.3 653.2,789.5 666.1,803.2 634.5,821.9" fill="url(#krt)" stroke="#0f0f0e" stroke-width="0.9" stroke-linejoin="round"/><polygon points="621.9,791.5 634.8,800.3 634.5,821.9 615.1,808.6" fill="url(#kfr)" stroke="#0f0f0e" stroke-width="0.9" stroke-linejoin="round"/><polygon points="621.9,791.5 640.3,780.9 653.2,789.5 634.8,800.3" fill="#8f8b81" stroke="#0f0f0e" stroke-width="0.9" stroke-linejoin="round"/><polygon points="657.7,815.7 676.2,804.7 689.1,818.5 657.4,837.5" fill="url(#krt)" stroke="#0f0f0e" stroke-width="0.9" stroke-linejoin="round"/><polygon points="644.5,806.8 657.7,815.7 657.4,837.5 637.5,823.9" fill="url(#kfr)" stroke="#0f0f0e" stroke-width="0.9" stroke-linejoin="round"/><polygon points="644.5,806.8 662.9,795.9 676.2,804.7 657.7,815.7" fill="#8f8b81" stroke="#0f0f0e" stroke-width="0.9" stroke-linejoin="round"/><polygon points="681,831.4 699.5,820.2 712.5,834.1 680.6,853.4" fill="url(#krt)" stroke="#0f0f0e" stroke-width="0.9" stroke-linejoin="round"/><polygon points="667.5,822.3 681,831.4 680.6,853.4 660.4,839.6" fill="url(#kfr)" stroke="#0f0f0e" stroke-width="0.9" stroke-linejoin="round"/><polygon points="667.5,822.3 686,811.3 699.5,820.2 681,831.4" fill="#8f8b81" stroke="#0f0f0e" stroke-width="0.9" stroke-linejoin="round"/><polygon points="741.5,912.9 760.7,900.9 774,915 741.1,936" fill="url(#krt)" stroke="#0f0f0e" stroke-width="0.9" stroke-linejoin="round"/><polygon points="727.4,903.2 741.5,912.9 741.1,936 719.7,920.9" fill="url(#kfr)" stroke="#0f0f0e" stroke-width="0.9" stroke-linejoin="round"/><polygon points="727.4,903.2 746.5,891.2 760.7,900.9 741.5,912.9" fill="#8f8b81" stroke="#0f0f0e" stroke-width="0.9" stroke-linejoin="round"/><polygon points="766.8,930.4 786,918.1 799.4,932.4 766.4,953.7" fill="url(#krt)" stroke="#0f0f0e" stroke-width="0.9" stroke-linejoin="round"/><polygon points="752.4,920.4 766.8,930.4 766.4,953.7 744.5,938.3" fill="url(#kfr)" stroke="#0f0f0e" stroke-width="0.9" stroke-linejoin="round"/><polygon points="752.4,920.4 771.6,908.3 786,918.1 766.8,930.4" fill="#8f8b81" stroke="#0f0f0e" stroke-width="0.9" stroke-linejoin="round"/><polygon points="792.6,948.3 811.9,935.8 825.3,950.1 792.2,971.8" fill="url(#krt)" stroke="#0f0f0e" stroke-width="0.9" stroke-linejoin="round"/><polygon points="777.9,938.1 792.6,948.3 792.2,971.8 769.8,956.1" fill="url(#kfr)" stroke="#0f0f0e" stroke-width="0.9" stroke-linejoin="round"/><polygon points="777.9,938.1 797.1,925.7 811.9,935.8 792.6,948.3" fill="#8f8b81" stroke="#0f0f0e" stroke-width="0.9" stroke-linejoin="round"/><polygon points="819,966.6 838.4,953.8 851.8,968.2 818.5,990.3" fill="url(#krt)" stroke="#0f0f0e" stroke-width="0.9" stroke-linejoin="round"/><polygon points="803.9,956.1 819,966.6 818.5,990.3 795.6,974.3" fill="url(#kfr)" stroke="#0f0f0e" stroke-width="0.9" stroke-linejoin="round"/><polygon points="803.9,956.1 823.3,943.5 838.4,953.8 819,966.6" fill="#8f8b81" stroke="#0f0f0e" stroke-width="0.9" stroke-linejoin="round"/><polygon points="404.3,680.9 422.2,671.5 434.8,684.5 404.2,700.7" fill="url(#krt)" stroke="#0f0f0e" stroke-width="0.9" stroke-linejoin="round"/><polygon points="380.1,664 404.3,680.9 404.2,700.7 374.6,679.9" fill="url(#kfr)" stroke="#0f0f0e" stroke-width="0.9" stroke-linejoin="round"/><polygon points="380.1,664 397.8,654.8 422.2,671.5 404.3,680.9" fill="#8f8b81" stroke="#0f0f0e" stroke-width="0.9" stroke-linejoin="round"/><polygon points="423.1,693.8 441,684.3 453.7,697.4 422.9,713.9" fill="url(#krt)" stroke="#0f0f0e" stroke-width="0.9" stroke-linejoin="round"/><polygon points="412.3,686.3 423.1,693.8 422.9,713.9 406.7,702.4" fill="url(#kfr)" stroke="#0f0f0e" stroke-width="0.9" stroke-linejoin="round"/><polygon points="412.3,686.3 430.1,676.9 441,684.3 423.1,693.8" fill="#8f8b81" stroke="#0f0f0e" stroke-width="0.9" stroke-linejoin="round"/><polygon points="442.2,707.1 460.2,697.4 472.9,710.5 442,727.3" fill="url(#krt)" stroke="#0f0f0e" stroke-width="0.9" stroke-linejoin="round"/><polygon points="431.1,699.4 442.2,707.1 442,727.3 425.4,715.6" fill="url(#kfr)" stroke="#0f0f0e" stroke-width="0.9" stroke-linejoin="round"/><polygon points="431.1,699.4 449.1,689.8 460.2,697.4 442.2,707.1" fill="#8f8b81" stroke="#0f0f0e" stroke-width="0.9" stroke-linejoin="round"/><polygon points="461.6,720.5 479.7,710.7 492.5,723.9 461.4,741" fill="url(#krt)" stroke="#0f0f0e" stroke-width="0.9" stroke-linejoin="round"/><polygon points="450.4,712.8 461.6,720.5 461.4,741 444.5,729.1" fill="url(#kfr)" stroke="#0f0f0e" stroke-width="0.9" stroke-linejoin="round"/><polygon points="450.4,712.8 468.4,703 479.7,710.7 461.6,720.5" fill="#8f8b81" stroke="#0f0f0e" stroke-width="0.9" stroke-linejoin="round"/><polygon points="481.4,734.3 499.6,724.3 512.5,737.6 481.3,754.9" fill="url(#krt)" stroke="#0f0f0e" stroke-width="0.9" stroke-linejoin="round"/><polygon points="470,726.3 481.4,734.3 481.3,754.9 464,742.8" fill="url(#kfr)" stroke="#0f0f0e" stroke-width="0.9" stroke-linejoin="round"/><polygon points="470,726.3 488.1,716.4 499.6,724.3 481.4,734.3" fill="#8f8b81" stroke="#0f0f0e" stroke-width="0.9" stroke-linejoin="round"/><polygon points="501.7,748.3 519.9,738.1 532.8,751.5 501.5,769.1" fill="url(#krt)" stroke="#0f0f0e" stroke-width="0.9" stroke-linejoin="round"/><polygon points="490,740.2 501.7,748.3 501.5,769.1 483.9,756.7" fill="url(#kfr)" stroke="#0f0f0e" stroke-width="0.9" stroke-linejoin="round"/><polygon points="490,740.2 508.2,730.1 519.9,738.1 501.7,748.3" fill="#8f8b81" stroke="#0f0f0e" stroke-width="0.9" stroke-linejoin="round"/><polygon points="522.3,762.6 540.6,752.3 553.6,765.7 522.1,783.6" fill="url(#krt)" stroke="#0f0f0e" stroke-width="0.9" stroke-linejoin="round"/><polygon points="510.4,754.3 522.3,762.6 522.1,783.6 504.2,771" fill="url(#kfr)" stroke="#0f0f0e" stroke-width="0.9" stroke-linejoin="round"/><polygon points="510.4,754.3 528.7,744.1 540.6,752.3 522.3,762.6" fill="#8f8b81" stroke="#0f0f0e" stroke-width="0.9" stroke-linejoin="round"/><polygon points="543.3,777.1 561.7,766.7 574.7,780.2 543.1,798.3" fill="url(#krt)" stroke="#0f0f0e" stroke-width="0.9" stroke-linejoin="round"/><polygon points="531.2,768.7 543.3,777.1 543.1,798.3 524.8,785.5" fill="url(#kfr)" stroke="#0f0f0e" stroke-width="0.9" stroke-linejoin="round"/><polygon points="531.2,768.7 549.6,758.3 561.7,766.7 543.3,777.1" fill="#8f8b81" stroke="#0f0f0e" stroke-width="0.9" stroke-linejoin="round"/><polygon points="564.8,792 583.3,781.3 596.3,794.9 564.5,813.4" fill="url(#krt)" stroke="#0f0f0e" stroke-width="0.9" stroke-linejoin="round"/><polygon points="552.4,783.4 564.8,792 564.5,813.4 545.9,800.3" fill="url(#kfr)" stroke="#0f0f0e" stroke-width="0.9" stroke-linejoin="round"/><polygon points="552.4,783.4 570.9,772.9 583.3,781.3 564.8,792" fill="#8f8b81" stroke="#0f0f0e" stroke-width="0.9" stroke-linejoin="round"/><polygon points="586.6,807.2 605.3,796.3 618.3,810 586.4,828.8" fill="url(#krt)" stroke="#0f0f0e" stroke-width="0.9" stroke-linejoin="round"/><polygon points="574,798.4 586.6,807.2 586.4,828.8 567.4,815.4" fill="url(#kfr)" stroke="#0f0f0e" stroke-width="0.9" stroke-linejoin="round"/><polygon points="574,798.4 592.6,787.7 605.3,796.3 586.6,807.2" fill="#8f8b81" stroke="#0f0f0e" stroke-width="0.9" stroke-linejoin="round"/><polygon points="609,822.6 627.7,811.6 640.8,825.4 608.7,844.4" fill="url(#krt)" stroke="#0f0f0e" stroke-width="0.9" stroke-linejoin="round"/><polygon points="596.1,813.7 609,822.6 608.7,844.4 589.3,830.8" fill="url(#kfr)" stroke="#0f0f0e" stroke-width="0.9" stroke-linejoin="round"/><polygon points="596.1,813.7 614.7,802.8 627.7,811.6 609,822.6" fill="#8f8b81" stroke="#0f0f0e" stroke-width="0.9" stroke-linejoin="round"/><polygon points="631.8,838.4 650.6,827.2 663.7,841.1 631.5,860.5" fill="url(#krt)" stroke="#0f0f0e" stroke-width="0.9" stroke-linejoin="round"/><polygon points="618.6,829.3 631.8,838.4 631.5,860.5 611.7,846.5" fill="url(#kfr)" stroke="#0f0f0e" stroke-width="0.9" stroke-linejoin="round"/><polygon points="618.6,829.3 637.4,818.2 650.6,827.2 631.8,838.4" fill="#8f8b81" stroke="#0f0f0e" stroke-width="0.9" stroke-linejoin="round"/><polygon points="655.1,854.6 673.9,843.2 687.2,857.1 654.7,876.8" fill="url(#krt)" stroke="#0f0f0e" stroke-width="0.9" stroke-linejoin="round"/><polygon points="641.6,845.2 655.1,854.6 654.7,876.8 634.5,862.6" fill="url(#kfr)" stroke="#0f0f0e" stroke-width="0.9" stroke-linejoin="round"/><polygon points="641.6,845.2 660.5,834 673.9,843.2 655.1,854.6" fill="#8f8b81" stroke="#0f0f0e" stroke-width="0.9" stroke-linejoin="round"/><polygon points="684.9,875.2 735.6,844.2 748.6,858.1 684.5,897.7" fill="url(#krt)" stroke="#0f0f0e" stroke-width="0.9" stroke-linejoin="round"/><polygon points="665.1,861.5 684.9,875.2 684.5,897.7 657.8,879" fill="url(#kfr)" stroke="#0f0f0e" stroke-width="0.9" stroke-linejoin="round"/><polygon points="665.1,861.5 715.6,830.9 735.6,844.2 684.9,875.2" fill="#8f8b81" stroke="#0f0f0e" stroke-width="0.9" stroke-linejoin="round"/><polygon points="383.1,703.5 401.2,693.9 414.1,707 383,723.6" fill="url(#krt)" stroke="#0f0f0e" stroke-width="0.9" stroke-linejoin="round"/><polygon points="349.8,679.8 383.1,703.5 383,723.6 344.4,695.8" fill="url(#kfr)" stroke="#0f0f0e" stroke-width="0.9" stroke-linejoin="round"/><polygon points="349.8,679.8 367.7,670.4 401.2,693.9 383.1,703.5" fill="#8f8b81" stroke="#0f0f0e" stroke-width="0.9" stroke-linejoin="round"/><polygon points="401.9,716.8 420.1,707.1 433,720.2 401.7,737.1" fill="url(#krt)" stroke="#0f0f0e" stroke-width="0.9" stroke-linejoin="round"/><polygon points="391,709.1 401.9,716.8 401.7,737.1 385.5,725.4" fill="url(#kfr)" stroke="#0f0f0e" stroke-width="0.9" stroke-linejoin="round"/><polygon points="391,709.1 409.2,699.5 420.1,707.1 401.9,716.8" fill="#8f8b81" stroke="#0f0f0e" stroke-width="0.9" stroke-linejoin="round"/><polygon points="421,730.4 439.3,720.6 452.3,733.8 420.8,750.9" fill="url(#krt)" stroke="#0f0f0e" stroke-width="0.9" stroke-linejoin="round"/><polygon points="410,722.6 421,730.4 420.8,750.9 404.2,738.9" fill="url(#kfr)" stroke="#0f0f0e" stroke-width="0.9" stroke-linejoin="round"/><polygon points="410,722.6 428.2,712.8 439.3,720.6 421,730.4" fill="#8f8b81" stroke="#0f0f0e" stroke-width="0.9" stroke-linejoin="round"/><polygon points="440.5,744.3 458.9,734.3 471.9,747.6 440.3,765" fill="url(#krt)" stroke="#0f0f0e" stroke-width="0.9" stroke-linejoin="round"/><polygon points="429.2,736.3 440.5,744.3 440.3,765 423.4,752.7" fill="url(#kfr)" stroke="#0f0f0e" stroke-width="0.9" stroke-linejoin="round"/><polygon points="429.2,736.3 447.6,726.3 458.9,734.3 440.5,744.3" fill="#8f8b81" stroke="#0f0f0e" stroke-width="0.9" stroke-linejoin="round"/><polygon points="460.3,758.5 478.8,748.2 491.9,761.6 460.2,779.3" fill="url(#krt)" stroke="#0f0f0e" stroke-width="0.9" stroke-linejoin="round"/><polygon points="448.9,750.3 460.3,758.5 460.2,779.3 442.9,766.8" fill="url(#kfr)" stroke="#0f0f0e" stroke-width="0.9" stroke-linejoin="round"/><polygon points="448.9,750.3 467.3,740.2 478.8,748.2 460.3,758.5" fill="#8f8b81" stroke="#0f0f0e" stroke-width="0.9" stroke-linejoin="round"/><polygon points="480.6,772.9 499.2,762.5 512.3,775.9 480.4,793.9" fill="url(#krt)" stroke="#0f0f0e" stroke-width="0.9" stroke-linejoin="round"/><polygon points="468.9,764.6 480.6,772.9 480.4,793.9 462.8,781.2" fill="url(#kfr)" stroke="#0f0f0e" stroke-width="0.9" stroke-linejoin="round"/><polygon points="468.9,764.6 487.4,754.3 499.2,762.5 480.6,772.9" fill="#8f8b81" stroke="#0f0f0e" stroke-width="0.9" stroke-linejoin="round"/><polygon points="501.3,787.6 519.9,777 533.1,790.6 501.1,808.8" fill="url(#krt)" stroke="#0f0f0e" stroke-width="0.9" stroke-linejoin="round"/><polygon points="489.3,779.1 501.3,787.6 501.1,808.8 483.1,795.9" fill="url(#kfr)" stroke="#0f0f0e" stroke-width="0.9" stroke-linejoin="round"/><polygon points="489.3,779.1 508,768.6 519.9,777 501.3,787.6" fill="#8f8b81" stroke="#0f0f0e" stroke-width="0.9" stroke-linejoin="round"/><polygon points="522.3,802.6 541.1,791.9 554.4,805.5 522.1,824" fill="url(#krt)" stroke="#0f0f0e" stroke-width="0.9" stroke-linejoin="round"/><polygon points="510.2,793.9 522.3,802.6 522.1,824 503.8,810.8" fill="url(#kfr)" stroke="#0f0f0e" stroke-width="0.9" stroke-linejoin="round"/><polygon points="510.2,793.9 528.9,783.3 541.1,791.9 522.3,802.6" fill="#8f8b81" stroke="#0f0f0e" stroke-width="0.9" stroke-linejoin="round"/><polygon points="543.9,817.9 562.7,807 576,820.7 543.6,839.6" fill="url(#krt)" stroke="#0f0f0e" stroke-width="0.9" stroke-linejoin="round"/><polygon points="531.4,809.1 543.9,817.9 543.6,839.6 524.9,826.1" fill="url(#kfr)" stroke="#0f0f0e" stroke-width="0.9" stroke-linejoin="round"/><polygon points="531.4,809.1 550.2,798.3 562.7,807 543.9,817.9" fill="#8f8b81" stroke="#0f0f0e" stroke-width="0.9" stroke-linejoin="round"/><polygon points="565.8,833.5 584.8,822.5 598.1,836.2 565.6,855.4" fill="url(#krt)" stroke="#0f0f0e" stroke-width="0.9" stroke-linejoin="round"/><polygon points="553.1,824.5 565.8,833.5 565.6,855.4 546.5,841.6" fill="url(#kfr)" stroke="#0f0f0e" stroke-width="0.9" stroke-linejoin="round"/><polygon points="553.1,824.5 572,813.5 584.8,822.5 565.8,833.5" fill="#8f8b81" stroke="#0f0f0e" stroke-width="0.9" stroke-linejoin="round"/><polygon points="588.2,849.5 607.3,838.2 620.7,852 588,871.6" fill="url(#krt)" stroke="#0f0f0e" stroke-width="0.9" stroke-linejoin="round"/><polygon points="575.3,840.3 588.2,849.5 588,871.6 568.5,857.5" fill="url(#kfr)" stroke="#0f0f0e" stroke-width="0.9" stroke-linejoin="round"/><polygon points="575.3,840.3 594.3,829.1 607.3,838.2 588.2,849.5" fill="#8f8b81" stroke="#0f0f0e" stroke-width="0.9" stroke-linejoin="round"/><polygon points="611.1,865.8 630.2,854.3 643.7,868.2 610.8,888.1" fill="url(#krt)" stroke="#0f0f0e" stroke-width="0.9" stroke-linejoin="round"/><polygon points="597.9,856.4 611.1,865.8 610.8,888.1 590.9,873.7" fill="url(#kfr)" stroke="#0f0f0e" stroke-width="0.9" stroke-linejoin="round"/><polygon points="597.9,856.4 617,845 630.2,854.3 611.1,865.8" fill="#8f8b81" stroke="#0f0f0e" stroke-width="0.9" stroke-linejoin="round"/><polygon points="652.3,895.1 671.6,883.3 685.1,897.3 652,917.8" fill="url(#krt)" stroke="#0f0f0e" stroke-width="0.9" stroke-linejoin="round"/><polygon points="621,872.8 652.3,895.1 652,917.8 613.9,890.3" fill="url(#kfr)" stroke="#0f0f0e" stroke-width="0.9" stroke-linejoin="round"/><polygon points="621,872.8 640.2,861.3 671.6,883.3 652.3,895.1" fill="#8f8b81" stroke="#0f0f0e" stroke-width="0.9" stroke-linejoin="round"/><polygon points="370.7,733.5 389.2,723.6 402.3,736.8 370.6,753.9" fill="url(#krt)" stroke="#0f0f0e" stroke-width="0.9" stroke-linejoin="round"/><polygon points="360,725.7 370.7,733.5 370.6,753.9 354.5,741.9" fill="url(#kfr)" stroke="#0f0f0e" stroke-width="0.9" stroke-linejoin="round"/><polygon points="360,725.7 378.4,715.9 389.2,723.6 370.7,733.5" fill="#8f8b81" stroke="#0f0f0e" stroke-width="0.9" stroke-linejoin="round"/><polygon points="389.7,747.4 408.2,737.3 421.5,750.6 389.6,768" fill="url(#krt)" stroke="#0f0f0e" stroke-width="0.9" stroke-linejoin="round"/><polygon points="378.7,739.4 389.7,747.4 389.6,768 373.1,755.8" fill="url(#kfr)" stroke="#0f0f0e" stroke-width="0.9" stroke-linejoin="round"/><polygon points="378.7,739.4 397.3,729.4 408.2,737.3 389.7,747.4" fill="#8f8b81" stroke="#0f0f0e" stroke-width="0.9" stroke-linejoin="round"/><polygon points="553.2,867 572.5,855.6 586.1,869.4 552.9,889.2" fill="url(#krt)" stroke="#0f0f0e" stroke-width="0.9" stroke-linejoin="round"/><polygon points="397.8,753.4 553.2,867 552.9,889.2 392.1,769.9" fill="url(#kfr)" stroke="#0f0f0e" stroke-width="0.9" stroke-linejoin="round"/><polygon points="397.8,753.4 416.5,743.2 572.5,855.6 553.2,867" fill="#8f8b81" stroke="#0f0f0e" stroke-width="0.9" stroke-linejoin="round"/><polygon points="576,883.7 595.4,872 609.1,886 575.7,906.1" fill="url(#krt)" stroke="#0f0f0e" stroke-width="0.9" stroke-linejoin="round"/><polygon points="562.8,874 576,883.7 575.7,906.1 555.9,891.4" fill="url(#kfr)" stroke="#0f0f0e" stroke-width="0.9" stroke-linejoin="round"/><polygon points="562.8,874 582.1,862.5 595.4,872 576,883.7" fill="#8f8b81" stroke="#0f0f0e" stroke-width="0.9" stroke-linejoin="round"/></g>
<g><polygon points="762.9,966.6 752.7,973.5 755.9,989.1 773.4,977.7" fill="url(#krt)" stroke="#0f0f0e" stroke-width="0.9" stroke-linejoin="round"/><polygon points="752.7,973.5 737.7,976.3 742.2,988.2 755.9,989.1" fill="url(#krt)" stroke="#0f0f0e" stroke-width="0.9" stroke-linejoin="round"/><polygon points="712.5,957.7 714.9,951.2 728.5,942.6 762.9,966.6 752.7,973.5 737.7,976.3" fill="#8f8b81" stroke="#0f0f0e" stroke-width="0.9" stroke-linejoin="round"/><polygon points="695.3,960.6 669.6,941.9 663.1,952.8 693.1,974.8" fill="url(#kfr)" stroke="#0f0f0e" stroke-width="0.9" stroke-linejoin="round"/><polygon points="710.9,956.7 695.3,960.6 693.1,974.8 713.8,967.6" fill="url(#krt)" stroke="#0f0f0e" stroke-width="0.9" stroke-linejoin="round"/><polygon points="669.6,941.9 689.1,929.7 714.9,948.2 710.9,956.7 695.3,960.6" fill="#8f8b81" stroke="#0f0f0e" stroke-width="0.9" stroke-linejoin="round"/><polygon points="781.2,995.7 761.5,1008.7 762.2,1025.6 793.8,1004.6" fill="url(#krt)" stroke="#0f0f0e" stroke-width="0.9" stroke-linejoin="round"/><polygon points="761.5,1008.7 733.2,988.2 727.9,1000.4 762.2,1025.6" fill="url(#kfr)" stroke="#0f0f0e" stroke-width="0.9" stroke-linejoin="round"/><polygon points="733.2,988.2 737.9,977.5 753.4,975.1 781.2,995.7 761.5,1008.7" fill="#8f8b81" stroke="#0f0f0e" stroke-width="0.9" stroke-linejoin="round"/><polygon points="730.4,985.9 721.8,992.4 722.7,1009.4 736.1,996.4" fill="url(#krt)" stroke="#0f0f0e" stroke-width="0.9" stroke-linejoin="round"/><polygon points="721.8,992.4 687.9,968 681.9,979.2 722.7,1009.4" fill="url(#kfr)" stroke="#0f0f0e" stroke-width="0.9" stroke-linejoin="round"/><polygon points="687.9,968 696.6,961.8 710.3,959.1 735,976.6 730.4,985.9 721.8,992.4" fill="#8f8b81" stroke="#0f0f0e" stroke-width="0.9" stroke-linejoin="round"/></g>
</g>
</svg>
<div class="a" style="left:0;top:0;width:1928px;height:23.2px;background:#fff"></div><svg class="i" style="left:11.0px;top:3.0px" width="15" height="16" viewBox="0 0 15 16"><defs><linearGradient id="fl" x1="0" y1="0" x2="0" y2="1"><stop offset="0" stop-color="#ff9a2e"/><stop offset="1" stop-color="#f06a14"/></linearGradient></defs><rect x="0.3" y="0.2" width="14" height="15.4" rx="2.2" fill="url(#fl)"/><path d="M0.3 11.3h14v2.1a2.2 2.2 0 0 1-2.2 2.2H2.5a2.2 2.2 0 0 1-2.2-2.2z" fill="#a8400c"/><path d="M5.6 3h4.3v1.5H7.3v1.5h2.2v1.4H7.3v2.6H5.6z" fill="#fff"/><rect x="4.6" y="12.600" width="5.6" height="1.6" fill="#f0b58a" opacity=".85"/></svg><div class="t" style="left:31.5px;top:4.7px;font-size:12.2px;color:#111;letter-spacing:-0.37px">Autodesk Fusion 360 (</div><svg class="jt" width="37.0" height="15.0" viewBox="0 0 37.0 15.0" fill="#111" style="left:146.4px;top:5.4px" role="img" aria-label="個人用"><text x="0" y="11.76" font-size="12" textLength="36" lengthAdjust="spacingAndGlyphs">個人用</text></svg><div class="t" style="left:185.2px;top:4.7px;font-size:12.2px;color:#111">-</div><svg class="jt" width="73.0" height="15.0" viewBox="0 0 73.0 15.0" fill="#111" style="left:193.0px;top:5.4px" role="img" aria-label="商用利用不可"><text x="0" y="11.76" font-size="12" textLength="72" lengthAdjust="spacingAndGlyphs">商用利用不可</text></svg><div class="t" style="left:264.3px;top:4.7px;font-size:12.2px;color:#111">)</div><svg class="i" style="left:1800px;top:0" width="120" height="23"><g stroke="#111" stroke-width="1" fill="none"><path d="M6.5 10.5H18"/><path d="M52.5 7.5h7.6v7.6h-7.6zM54.6 7.3v-2h7.6v7.6h-2"/><path d="M98 5l10 10M108 5l-10 10" stroke-width="1.1"/></g></svg><div class="a" style="left:0;top:0;width:8px;height:33.4px;background:#eeeff3"></div><div class="a" style="left:0;top:33.4px;width:8px;height:36px;background:#fff"></div><div class="a" style="left:0;top:69.4px;width:8px;height:914px;background:#f0f0f0"></div><div class="a" style="left:0;top:88.5px;width:6px;height:15.5px;background:#cdcdcd"></div><svg class="i" style="left:0;top:78px" width="8" height="6"><path d="M-1 5L1.5 1.5L4 5z" fill="#9a9a9a"/></svg><svg class="i" style="left:0;top:971px" width="8" height="6"><path d="M-1 1L1.5 4L4 1z" fill="#555"/></svg><div class="a" style="left:0;top:983px;width:8px;height:57px;background:#fff"></div><div class="a" style="left:0;top:1040px;width:8px;height:40px;background:#131313"></div><div class="a" style="left:0;top:1080px;width:8px;height:88px;background:#000"></div><div class="a" style="left:0;top:1064px;width:3px;height:2px;background:#ddd"></div><div class="a" style="left:8px;top:23.2px;width:1918px;height:31.6px;background:#cdcdcd"></div><svg class="i" style="left:0;top:0" width="220" height="56"><g fill="#666"><rect x="17.1" y="31.9" width="3.7" height="3.7"/><rect x="17.1" y="37.1" width="3.7" height="3.7"/><rect x="17.1" y="42.3" width="3.7" height="3.7"/><rect x="22.3" y="31.9" width="3.7" height="3.7"/><rect x="22.3" y="37.1" width="3.7" height="3.7"/><rect x="22.3" y="42.3" width="3.7" height="3.7"/><rect x="27.5" y="31.9" width="3.7" height="3.7"/><rect x="27.5" y="37.1" width="3.7" height="3.7"/><rect x="27.5" y="42.3" width="3.7" height="3.7"/></g><path d="M49.8 30.7h8.4l4.8 4.8V47H49.8z" fill="#666"/><path d="M58.2 30.7v4.8H63z" fill="#cdcdcd"/><path d="M58.9 31.2l3.7 3.7h-3.7z" fill="#666"/><path d="M69.4 36.3h6.6L72.7 40.8z" fill="#666"/><path d="M95 33.4a1 1 0 0 1 1-1h10.2l2.8 2.4V44.6a1 1 0 0 1-1 1H96a1 1 0 0 1-1-1z" fill="#9b9b9b"/><rect x="98" y="32.4" width="7.6" height="4.3" fill="#cdcdcd"/><rect x="102.8" y="33" width="1.8" height="3" fill="#9b9b9b"/><rect x="97.6" y="39.6" width="8.8" height="6" fill="#cdcdcd"/><rect x="99" y="41" width="6" height="1.2" fill="#9b9b9b"/><path d="M128.6 37.6l5-4.2v2.9c4.2 0 7.2 2.6 7.4 8.3c-1.6-3.4-3.9-4.6-7.4-4.5v2.9z" fill="#666" transform="translate(0,0)"/><path d="M148 36.3h6.6L151.3 40.8z" fill="#666"/><path d="M180.4 37.6l-5-4.2v2.9c-4.2 0-7.2 2.6-7.4 8.3c1.6-3.4 3.9-4.6 7.4-4.5v2.9z" fill="#9b9b9b"/><path d="M187.2 36.3h6.6L190.5 40.8z" fill="#9b9b9b"/></svg><div class="tab" style="left:203px;width:486px;background:#bcbcbc"></div><svg class="i" style="left:387.5px;top:33.0px" width="17" height="16" viewBox="0 0 17 16"><path d="M0.5 3.2L7.5 0.3L16.2 2.6V11L8.2 15.6L0.5 11.4z" fill="#8c8c8c"/><path d="M1.4 4.3L7.8 6.6V14.2L1.4 10.8z" fill="#cfcfcf"/></svg><div class="t" style="left:406.0px;top:34.6px;font-size:12px;color:#5a5a5a">HC-95_open v1</div><svg class="i" style="left:673.7px;top:36.5px" width="9" height="9"><path d="M0.4 0.4l8.2 8.2M8.6 0.4l-8.2 8.2" stroke="#777" stroke-width="1.25" fill="none"/></svg><div class="tab" style="left:693px;width:486px;background:#f2f2f2"></div><svg class="i" style="left:884.0px;top:33.0px" width="17" height="16" viewBox="0 0 17 16"><path d="M0.5 3.2L7.5 0.3L16.2 2.6V11L8.2 15.6L0.5 11.4z" fill="#686868"/><path d="M1.4 4.3L7.8 6.6V14.2L1.4 10.8z" fill="#b6b6b6"/></svg><div class="t" style="left:904.2px;top:34.6px;font-size:12px;color:#333">CF-3000 v56</div><svg class="i" style="left:1163.2px;top:36.5px" width="9" height="9"><path d="M0.4 0.4l8.2 8.2M8.6 0.4l-8.2 8.2" stroke="#555" stroke-width="1.25" fill="none"/></svg><div class="tab" style="left:1183px;width:486px;background:#bcbcbc"></div><svg class="i" style="left:1344.5px;top:33.0px" width="17" height="16" viewBox="0 0 17 16"><path d="M0.5 3.2L7.5 0.3L16.2 2.6V11L8.2 15.6L0.5 11.4z" fill="#8c8c8c"/><path d="M1.4 4.3L7.8 6.6V14.2L1.4 10.8z" fill="#cfcfcf"/></svg><div class="t" style="left:1365.0px;top:34.6px;font-size:12px;color:#5a5a5a">X68k_keyboard_00 v24</div><svg class="i" style="left:1653.7px;top:36.5px" width="9" height="9"><path d="M0.4 0.4l8.2 8.2M8.6 0.4l-8.2 8.2" stroke="#777" stroke-width="1.25" fill="none"/></svg><div class="tab" style="left:1673px;width:28px;background:#bcbcbc"></div><svg class="i" style="left:1681px;top:34px" width="13" height="13"><path d="M6.4 0v12.8M0 6.4h12.8" stroke="#666" stroke-width="2.2" fill="none"/></svg><svg class="i" style="left:1712.5px;top:31.0px" width="17" height="17" viewBox="0 0 17 17"><path d="M0.5 0.3h8.2l3.6 3.6v3.3l-5.8 6v3.2H0.5z" fill="#5c5c5c"/><path d="M8.7 0.3v3.6h3.6z" fill="#cdcdcd"/><path d="M9.2 0.9l2.6 2.6H9.2z" fill="#5c5c5c"/><path d="M8 13.6l6-6.2l2.2 2.1l-6.1 6.2l-2.9 0.9z" fill="#5c5c5c" stroke="#cdcdcd" stroke-width=".7"/></svg><div class="t" style="left:1733px;top:33.6px;font-size:10.7px;color:#333">10/10</div><svg class="i" style="left:1786.0px;top:31.0px" width="17" height="17" viewBox="0 0 17 17"><circle cx="8.2" cy="8.2" r="7.6" fill="none" stroke="#555" stroke-width="1.1"/><circle cx="8.2" cy="8.2" r="6" fill="#555"/><path d="M8.4 4.2v4.4h3.4" stroke="#cdcdcd" stroke-width="1.5" fill="none"/></svg><svg class="i" style="left:1819.5px;top:30.0px" width="17" height="19" viewBox="0 0 17 19"><path d="M7.4 1.6c-3 .5-4.3 2.8-4.3 5.6c0 3-1 4.4-2.4 5.8v1h13.6v-1c-1.4-1.4-2.4-2.8-2.4-5.8c0-1-.2-2-.6-2.9" fill="#666"/><path d="M5.6 15.2h3.8c0 1.1-.9 1.8-1.9 1.8s-1.9-.7-1.9-1.8z" fill="#666"/><path d="M7.5 0.6a1 1 0 0 1 1 1v1h-2v-1a1 1 0 0 1 1-1z" fill="#666"/><circle cx="11.6" cy="4.7" r="3" fill="#1b9ae0"/></svg><svg class="i" style="left:1852.0px;top:31.0px" width="17" height="17" viewBox="0 0 17 17"><circle cx="8.1" cy="8.1" r="8" fill="#5f5f5f"/><text x="8.1" y="12.4" font-family="Liberation Sans" font-weight="bold" font-size="12.5" fill="#f0f0f0" text-anchor="middle">?</text></svg><svg class="i" style="left:1889.0px;top:27.0px" width="25" height="25" viewBox="0 0 25 25"><defs><linearGradient id="av" x1="0" y1="0" x2="0" y2="1"><stop offset="0" stop-color="#9eb1c8"/><stop offset="1" stop-color="#92a3ba"/></linearGradient><clipPath id="avc"><circle cx="12.2" cy="12.2" r="12"/></clipPath></defs><circle cx="12.2" cy="12.2" r="12" fill="url(#av)"/><g clip-path="url(#avc)" fill="#56637b"><ellipse cx="12.6" cy="9" rx="4.6" ry="5.8"/><path d="M9.6 12h6v4.5c3.2.8 6 1.8 6.6 4.3V26H3v-5.2c.6-2.5 3.4-3.5 6.6-4.3z"/></g></svg><div class="a" style="left:8px;top:54.8px;width:1920px;height:81.2px;background:#f2f2f2"></div><div class="a" style="left:8px;top:136px;width:1920px;height:1.1px;background:#dcdcdc"></div><div class="a" style="left:8px;top:137.1px;width:1920px;height:2.4px;background:#f4f4f4"></div><div class="a" style="left:19.6px;top:65.4px;width:108.8px;height:61px;border:1px solid #dcdcdc;border-radius:6px;background:#f4f4f4;box-sizing:border-box"></div><svg class="jt" width="39.4" height="14.1" viewBox="0 0 39.4 14.1" fill="#222" style="left:49.2px;top:87.7px" role="img" aria-label="デザイン"><text x="0" y="11.07" font-size="11.3" font-weight="bold" textLength="38.4" lengthAdjust="spacingAndGlyphs">デザイン</text></svg><svg class="i" style="left:93px;top:93.6px" width="7" height="5"><path d="M0 0h6.4L3.2 4.2z" fill="#333"/></svg><svg class="jt" width="33.0" height="13.3" viewBox="0 0 33.0 13.3" fill="#0a95d6" style="left:157.1px;top:59.1px" role="img" aria-label="ソリッド"><text x="0" y="10.46" font-size="10.67" font-weight="bold" textLength="32" lengthAdjust="spacingAndGlyphs">ソリッド</text></svg><div class="a" style="left:146.4px;top:76.3px;width:56.4px;height:3px;background:#1b9ad6"></div><svg class="jt" width="41.1" height="13.3" viewBox="0 0 41.1 13.3" fill="#3a3a3a" style="left:235.1px;top:59.3px" role="img" aria-label="サーフェス"><text x="0" y="10.46" font-size="10.67" textLength="40.1" lengthAdjust="spacingAndGlyphs">サーフェス</text></svg><svg class="jt" width="31.0" height="13.3" viewBox="0 0 31.0 13.3" fill="#3a3a3a" style="left:322.9px;top:59.3px" role="img" aria-label="メッシュ"><text x="0" y="10.46" font-size="10.67" textLength="30" lengthAdjust="spacingAndGlyphs">メッシュ</text></svg><svg class="jt" width="32.8" height="13.3" viewBox="0 0 32.8 13.3" fill="#3a3a3a" style="left:396.0px;top:59.3px" role="img" aria-label="フォーム"><text x="0" y="10.46" font-size="10.67" textLength="31.8" lengthAdjust="spacingAndGlyphs">フォーム</text></svg><svg class="jt" width="54.8" height="13.3" viewBox="0 0 54.8 13.3" fill="#3a3a3a" style="left:474.0px;top:59.3px" role="img" aria-label="シート メタル"><text x="0" y="10.46" font-size="10.67" textLength="53.8" lengthAdjust="spacingAndGlyphs">シート メタル</text></svg><svg class="jt" width="47.4" height="13.3" viewBox="0 0 47.4 13.3" fill="#3a3a3a" style="left:571.9px;top:59.3px" role="img" aria-label="プラスチック"><text x="0" y="10.46" font-size="10.67" textLength="46.4" lengthAdjust="spacingAndGlyphs">プラスチック</text></svg><svg class="jt" width="53.3" height="13.3" viewBox="0 0 53.3 13.3" fill="#3a3a3a" style="left:665.3px;top:59.3px" role="img" aria-label="ユーティリティ"><text x="0" y="10.46" font-size="10.67" textLength="52.3" lengthAdjust="spacingAndGlyphs">ユーティリティ</text></svg><svg class="jt" width="22.3" height="13.3" viewBox="0 0 22.3 13.3" fill="#2a2a2a" style="left:227.6px;top:119.8px" role="img" aria-label="作成"><text x="0" y="10.46" font-size="10.67" textLength="21.3" lengthAdjust="spacingAndGlyphs">作成</text></svg><svg class="i" style="left:252.9px;top:124.2px" width="7" height="5"><path d="M0 0h6.2L3.1 4z" fill="#333"/></svg><svg class="jt" width="22.3" height="13.3" viewBox="0 0 22.3 13.3" fill="#2a2a2a" style="left:475.2px;top:119.8px" role="img" aria-label="修正"><text x="0" y="10.46" font-size="10.67" textLength="21.3" lengthAdjust="spacingAndGlyphs">修正</text></svg><svg class="i" style="left:500.5px;top:124.2px" width="7" height="5"><path d="M0 0h6.2L3.1 4z" fill="#333"/></svg><svg class="jt" width="39.8" height="13.3" viewBox="0 0 39.8 13.3" fill="#2a2a2a" style="left:650.3px;top:119.8px" role="img" aria-label="アセンブリ"><text x="0" y="10.46" font-size="10.67" textLength="38.8" lengthAdjust="spacingAndGlyphs">アセンブリ</text></svg><svg class="i" style="left:693.1px;top:124.2px" width="7" height="5"><path d="M0 0h6.2L3.1 4z" fill="#333"/></svg><svg class="jt" width="22.3" height="13.3" viewBox="0 0 22.3 13.3" fill="#2a2a2a" style="left:737.9px;top:119.8px" role="img" aria-label="構築"><text x="0" y="10.46" font-size="10.67" textLength="21.3" lengthAdjust="spacingAndGlyphs">構築</text></svg><svg class="i" style="left:763.2px;top:124.2px" width="7" height="5"><path d="M0 0h6.2L3.1 4z" fill="#333"/></svg><svg class="jt" width="22.3" height="13.3" viewBox="0 0 22.3 13.3" fill="#2a2a2a" style="left:797.0px;top:119.8px" role="img" aria-label="検査"><text x="0" y="10.46" font-size="10.67" textLength="21.3" lengthAdjust="spacingAndGlyphs">検査</text></svg><svg class="i" style="left:822.3px;top:124.2px" width="7" height="5"><path d="M0 0h6.2L3.1 4z" fill="#333"/></svg><svg class="jt" width="22.3" height="13.3" viewBox="0 0 22.3 13.3" fill="#2a2a2a" style="left:855.7px;top:119.8px" role="img" aria-label="挿入"><text x="0" y="10.46" font-size="10.67" textLength="21.3" lengthAdjust="spacingAndGlyphs">挿入</text></svg><svg class="i" style="left:881.0px;top:124.2px" width="7" height="5"><path d="M0 0h6.2L3.1 4z" fill="#333"/></svg><svg class="jt" width="22.3" height="13.3" viewBox="0 0 22.3 13.3" fill="#2a2a2a" style="left:915.4px;top:119.8px" role="img" aria-label="選択"><text x="0" y="10.46" font-size="10.67" textLength="21.3" lengthAdjust="spacingAndGlyphs">選択</text></svg><svg class="i" style="left:940.7px;top:124.2px" width="7" height="5"><path d="M0 0h6.2L3.1 4z" fill="#333"/></svg><div class="a" style="left:358.3px;top:81.5px;width:1.4px;height:50px;background:#dcdcdc"></div><div class="a" style="left:627.3px;top:81.5px;width:1.4px;height:50px;background:#dcdcdc"></div><div class="a" style="left:724.3px;top:81.5px;width:1.4px;height:50px;background:#dcdcdc"></div><div class="a" style="left:783.3px;top:81.5px;width:1.4px;height:50px;background:#dcdcdc"></div><div class="a" style="left:842.3px;top:81.5px;width:1.4px;height:50px;background:#dcdcdc"></div><div class="a" style="left:901.3px;top:81.5px;width:1.4px;height:50px;background:#dcdcdc"></div><svg class="i" style="left:145.0px;top:82.0px" width="33" height="33" viewBox="0 0 33 33"><rect x="1" y="1.6" width="26.4" height="26.2" fill="none" stroke="#555" stroke-width="1" stroke-dasharray="7 3 2 3"/><g fill="#555"><rect x="0" y="0.6" width="2.2" height="2.2"/><rect x="26.2" y="0.6" width="2.2" height="2.2"/><rect x="0" y="26.6" width="2.2" height="2.2"/></g><path d="M8.2 20.6V8h11.8" fill="none" stroke="#555" stroke-width="1" stroke-dasharray="5 2"/><path d="M8.2 20.6C15 19.6 19.4 15 20 8" fill="none" stroke="#555" stroke-width="1"/><g fill="#555"><rect x="7.1" y="6.9" width="2.3" height="2.3"/><rect x="18.9" y="6.9" width="2.3" height="2.3"/><rect x="7.1" y="19.4" width="2.3" height="2.3"/></g><path d="M22.6 18.6h4.2v4.8h4.8v4.2h-4.8v4.8h-4.2v-4.8h-4.8v-4.2h4.8z" fill="#2fa84a"/></svg><svg class="i" style="left:189.0px;top:82.0px" width="32" height="33" viewBox="0 0 32 33"><path d="M0.3 24.8L6 27.4V32.6H0.3zM0.3 27.4h18l5.6-3.6v3.4L18.2 32.6H0.3z" fill="#c9c9c9"/><path d="M0.3 27.2h18.1l5.5-3.6" fill="none" stroke="#aaa" stroke-width=".6"/><path d="M0.3 4.4L6.2 1h17.7v22.8L18.3 27.4H0.3z" fill="#5ea9e0"/><path d="M0.3 4.4h18l5.6-3.4" fill="#5ea9e0"/><path d="M0.3 4.4L6.2 1h17.7L18.3 4.4z" fill="#8cc6f2"/><path d="M18.3 4.4L23.9 1v22.8l-5.6 3.6z" fill="#3d8ec9"/><path d="M27.6 26V3.6" stroke="#333" stroke-width="1.1"/><path d="M25.4 5.4L27.6 0.6L29.8 5.4z" fill="#333"/></svg><svg class="i" style="left:230.7px;top:82.0px" width="33" height="33" viewBox="0 0 33 33"><path d="M0.3 13.1C8 5 24 5 31.5 12.8L25.1 18.3C21 13.800 11 13.800 6.100 18.600z" fill="#8ccbf8"/><path d="M0.300 13.100L6.100 18.600V28.900L0.300 23.100z" fill="#4a96d0"/><path d="M6.100 18.600C11 13.800 21 13.800 25.100 18.300V27.800C21 23.400 11 23.400 6.100 28.900z" fill="#6ab0e4"/><path d="M26.500 19.300L32 13.500V22.700L26.700 28.500z" fill="#fff" stroke="#555" stroke-width="1.100" stroke-linejoin="round"/><path d="M29.900 7.600C24 0.800 9 0.600 2.600 6.600" fill="none" stroke="#333" stroke-width="1"/><path d="M0.800 7.800L2 3.900L4.800 6.600z" fill="#222"/></svg><svg class="i" style="left:273.9px;top:82.0px" width="33" height="33" viewBox="0 0 33 33"><path d="M0.500 5.200L6 0.600h25.600v25.600l-5.400 5.800H0.500z" fill="#dcdcdc" stroke="#555" stroke-width="1" stroke-linejoin="round"/><path d="M0.500 5.200L6 0.600h25.600L26.200 5.200z" fill="#efefef" stroke="#555" stroke-width=".8"/><path d="M26.200 5.200L31.600 0.600v25.600l-5.400 5.800z" fill="#b8b8b8" stroke="#555" stroke-width=".8"/><circle cx="13.600" cy="18.400" r="7.800" fill="#f6f6f6" stroke="#555" stroke-width="1"/><circle cx="13.600" cy="18.400" r="6" fill="#5ea9e0"/><ellipse cx="15.200" cy="20" rx="4.600" ry="4.200" fill="#f6f6f6"/></svg><svg class="i" style="left:316.5px;top:84.0px" width="30" height="29" viewBox="0 0 30 29"><path d="M4 4h22M4 4v21h22" fill="none" stroke="#555" stroke-width="1"/><rect x="0.700" y="0.700" width="6.400" height="6.400" fill="#fff" stroke="#666" stroke-width="1"/><rect x="22" y="0.500" width="6.800" height="6.800" fill="#5ea9e0"/><rect x="0.500" y="21.300" width="6.800" height="6.800" fill="#5ea9e0"/><rect x="22" y="21.300" width="6.800" height="6.800" fill="#5ea9e0"/></svg><svg class="i" style="left:372.0px;top:82.0px" width="30" height="33" viewBox="0 0 30 33"><path d="M0.600 6.400L5 0.800h5.400v24.800L6.200 31.600H0.600z" fill="#dcdcdc" stroke="#555" stroke-width="1" stroke-linejoin="round"/><path d="M7.200 6.400L13 0.600h8.600v24.800l-5 6.200H7.200z" fill="#5ea9e0"/><path d="M16.600 6.400l5-5.800v24.800l-5 6.200z" fill="#3d8ec9"/><path d="M7.200 6.400L13 0.600h8.600l-5 5.800z" fill="#8cc6f2"/><path d="M19.800 15.800h7" stroke="#222" stroke-width="1.200"/><path d="M25.400 13.200l4 2.600l-4 2.600z" fill="#222"/></svg><svg class="i" style="left:414.0px;top:82.0px" width="33" height="33" viewBox="0 0 33 33"><path d="M0.600 8.800L7.600 0.800h10C26 1.600 31.600 7 32 15.200v9.600l-7.200 6.800H0.600z" fill="#dcdcdc" stroke="#555" stroke-width="1" stroke-linejoin="round"/><path d="M24.800 31.600V20.200l7.200-5v9.600z" fill="#b8b8b8" stroke="#555" stroke-width=".8"/><path d="M13 3.800L17.600 0.800C26 1.600 31.600 7 32 15.200l-6.600 4.600C25 11.600 20.400 5.600 13 3.800z" fill="#5ea9e0"/></svg><svg class="i" style="left:457.0px;top:82.0px" width="33" height="33" viewBox="0 0 33 33"><path d="M0.600 6.400L7 0.600h25v24.600l-6 6.400H0.600z" fill="#dcdcdc" stroke="#555" stroke-width="1" stroke-linejoin="round"/><path d="M0.600 6.400L7 0.600h25l-6 5.800z" fill="#efefef" stroke="#555" stroke-width=".8"/><path d="M26 6.400l6-5.800v24.600l-6 6.400z" fill="#b8b8b8" stroke="#555" stroke-width=".8"/><rect x="4.400" y="10.400" width="17.600" height="17.400" fill="#f6f6f6"/><path d="M4.400 12.600h6.800v8h8.600v7.200H4.400z" fill="#8cc6f2"/><path d="M4.400 12.600h6.800v8L4.400 27.800z" fill="#3d8ec9"/></svg><svg class="i" style="left:499.8px;top:82.0px" width="33" height="33" viewBox="0 0 33 33"><path d="M11.600 4.600L16.600 0.600h15.600v15.600l-5 4.600h-5.600v7.200l-5 4.400H0.600V13.800l5.200-4h5.800z" fill="#5ea9e0"/><path d="M11.600 4.600L16.600 0.600h15.600l-5 4z" fill="#8cc6f2"/><path d="M0.600 13.800l5.200-4h5.800v4z" fill="#8cc6f2"/><path d="M27.200 4.600l5-4v15.600l-5 4.600zM16.600 20.800h5v7.200l-5 4.400z" fill="#3d8ec9"/></svg><svg class="i" style="left:543.0px;top:82.0px" width="33" height="33" viewBox="0 0 33 33"><path d="M2.600 17.800h22.600l5.200-3.600v11.400l-5.200 4.600H2.600z" fill="#dcdcdc" stroke="#777" stroke-width=".8"/><path d="M25.200 19v11.200l5.200-4.600V15z" fill="#b8b8b8"/><path d="M2.600 4.400L8 0.600h22.400v10.800l-5.200 4.800H2.600z" fill="#5ea9e0"/><path d="M2.600 4.400L8 0.600h22.400l-5.200 3.800z" fill="#8cc6f2"/><path d="M25.200 4.400l5.200-3.800v10.800l-5.200 4.800z" fill="#3d8ec9"/><path d="M0.300 18.400h25.400l6.600-5.600" fill="none" stroke="#fff" stroke-width="3"/><path d="M0.300 18.400h25.400l6.600-5.600" fill="none" stroke="#1e90e0" stroke-width="1.200"/></svg><svg class="i" style="left:586.4px;top:82.4px" width="32" height="32" viewBox="0 0 32 32"><g fill="#2e2e2e"><path d="M15.700 0.300l4.600 6h-3.200v7.800h7.800v-3.200l6 4.600l-6 4.600v-3.200h-7.800v7.800h3.200l-4.600 6l-4.600-6h3.200v-7.800H6.500v3.200l-6-4.600l6-4.600v3.200h7.800V6.300h-3.200z"/></g></svg><svg class="i" style="left:639.4px;top:82.6px" width="33" height="32" viewBox="0 0 33 32"><path d="M0.600 17.400L4.600 14h24l-4 3.400z" fill="#efefef" stroke="#777" stroke-width=".7"/><path d="M0.600 17.400h24v13.800H0.600z" fill="#dcdcdc" stroke="#777" stroke-width=".8"/><path d="M24.600 17.400l4-3.400v13.600l-4 3.600z" fill="#b8b8b8" stroke="#777" stroke-width=".7"/><path d="M12.600 17.400v13.800" stroke="#777" stroke-width=".8"/><path d="M0.600 6.800L4.400 3.400h11.400v10.400l-3.600 3.600H0.600z" fill="#5ea9e0"/><path d="M0.600 6.800L4.400 3.400h11.400l-3.600 3.400z" fill="#8cc6f2"/><path d="M12.200 6.800l3.600-3.400v10.400l-3.600 3.600z" fill="#3d8ec9"/><path d="M24 0l1.800 4.400l4.200-2.200l-1.600 4.400l4.400 1.600l-4.400 1.800l1.800 4.200l-4.400-1.800L24 16.800l-1.800-4.400l-4.200 2l1.800-4.200l-4.400-1.800l4.400-1.800l-2-4.200l4.400 2z" fill="#f59a12"/></svg><svg class="i" style="left:684.4px;top:82.6px" width="30" height="32" viewBox="0 0 30 32"><path d="M1.600 28.400V9.400C1.600 3.400 5 0.800 9 0.600h3.400c1.400 0 2 1 2 2.200v3c0 1-.8 1.800-2 1.800c-2.600 0-4 2.600-4 5.400v13.400l-3.400 3.600z" fill="#d4d4d4" stroke="#666" stroke-width="1" stroke-linejoin="round"/><ellipse cx="11.400" cy="2.400" rx="2.400" ry="1.400" fill="#f2f2f2" stroke="#666" stroke-width=".6"/><path d="M17 11.200c0-1.600 1.600-2.400 3-2.400s3 .8 3 2.400V20l5.200 5.600v5.600L22 26.800h-5z" fill="#c6c6c6" stroke="#666" stroke-width="1" stroke-linejoin="round"/><path d="M22.400 5.800L28.400 11v14.600L23 20V11.200z" fill="#dedede" stroke="#666" stroke-width="1" stroke-linejoin="round"/><path d="M10.800 13v6M19.800 4v5" stroke="#1e90e0" stroke-width="1.200"/></svg><svg class="i" style="left:739.8px;top:82.4px" width="31" height="32" viewBox="0 0 31 32"><path d="M0.600 8.400L8.800 0.600h6.400L9.400 8.400V31H0.600z" fill="#efefef" stroke="#666" stroke-width="1" stroke-linejoin="round"/><path d="M0.600 8.400h8.800V31H0.600z" fill="#dcdcdc" stroke="#666" stroke-width=".8"/><path d="M9.400 9.400L18.200 1v21.400L9.400 30.800z" fill="#58c27a" stroke="#3c9a5a" stroke-width=".6"/><path d="M21.400 9L30 0.800v21.400l-8.600 8.400z" fill="#e89a62"/></svg><svg class="i" style="left:799.8px;top:89.0px" width="29" height="18" viewBox="0 0 29 18"><path d="M0.600 0.800v8M27.800 0.800v8M1.400 4.800h25.600" stroke="#555" stroke-width="1" fill="none"/><path d="M4.800 2.600L1.200 4.800l3.600 2.200zM23.600 2.600l3.600 2.200l-3.600 2.200z" fill="#555"/><rect x="0.200" y="10.600" width="28" height="6.200" fill="#f5a00a"/><path d="M3 10.600v2.400M6 10.600v2.400M9 10.600v3.400M12 10.600v2.400M15 10.600v2.400M18 10.600v3.400M21 10.600v2.400M24 10.600v2.400M26.600 10.600v2.400" stroke="#b86e00" stroke-width=".7"/></svg><svg class="i" style="left:858.0px;top:82.8px" width="29" height="30" viewBox="0 0 29 30"><rect x="0.200" y="0.200" width="28.600" height="29" fill="#8cc6f2" stroke="#4a92cc" stroke-width=".6"/><circle cx="21" cy="8" r="2.800" fill="#fbf6c8"/><path d="M0.500 21C4 13.600 8.600 11 11.400 13.400c2.600 2.200 4.400 6.600 7.200 6.800c2.400.2 4-4.200 7-4.400c1.400-.1 2.400.8 3 2v11.200H0.500z" fill="#3d8ec9"/></svg><svg class="i" style="left:913.0px;top:79.2px" width="38" height="38" viewBox="0 0 38 38"><rect x="0" y="0" width="38" height="37.800" fill="#0c93d6"/><rect x="3.600" y="3.400" width="27.400" height="20.600" fill="none" stroke="#35c24d" stroke-width="1" stroke-dasharray="3.400 2"/><path d="M24 17.400v14.200l3.200-3l2.200 5.200l2.400-1l-2.200-5.200l4.400-.2z" fill="#fff" stroke="#222" stroke-width="1" stroke-linejoin="round"/></svg><div class="a" style="left:12px;top:144.4px;width:299.6px;height:24px;background:#f2f2f2;border:1px solid #c6c6c6;box-sizing:border-box"></div><svg class="i" style="left:17px;top:153.6px" width="11" height="7"><path d="M4.6 0v6.4L0 3.2zM10 0v6.4L5.4 3.2z" fill="#222"/></svg><svg class="jt" width="33.8" height="13.3" viewBox="0 0 33.8 13.3" fill="#555" style="left:36.0px;top:149.2px" role="img" aria-label="ブラウザ"><text x="0" y="10.46" font-size="10.67" textLength="32.8" lengthAdjust="spacingAndGlyphs">ブラウザ</text></svg><svg class="i" style="left:290.8px;top:152px" width="10" height="10"><circle cx="4.7" cy="4.7" r="4.6" fill="#1e1e1e"/><path d="M2.2 4.7h5" stroke="#fff" stroke-width="1.4"/></svg><div class="a" style="left:306.8px;top:151.2px;width:1px;height:10.5px;background:#555"></div><div class="a" style="left:308.8px;top:151.2px;width:1px;height:10.5px;background:#999"></div><div class="a" style="left:16.4px;top:174px;width:5.2px;height:933px;background:#c9c9cb;border-radius:2.5px"></div><div class="a" style="left:16.4px;top:174px;width:5.2px;height:82px;background:#8c8c8c;border-radius:2.5px;box-shadow:inset 1px 0 0 #777"></div><div class="row" style="left:47.8px;top:174px;width:156px;height:20px"></div><svg class="i" style="left:28.4px;top:178.0px" width="12" height="12"><defs><linearGradient id="tg" x1="0" y1="0" x2="1" y2="1"><stop offset="0.3" stop-color="#d8d8d8"/><stop offset="1" stop-color="#444"/></linearGradient></defs><path d="M11 0.8V11.2H0.8z" fill="url(#tg)" stroke="#222" stroke-width="1"/></svg><svg class="i" style="left:51.2px;top:179.0px" width="16" height="10" viewBox="0 0 16 10"><path d="M0.300 5C2.600 1.600 5.200 0.300 8 0.300S13.400 1.600 15.700 5C13.400 8.400 10.800 9.700 8 9.700S2.600 8.400 0.300 5z" fill="#9c9c9c"/><circle cx="8" cy="5" r="3.300" fill="#f1f1f1"/><circle cx="8" cy="5" r="1.900" fill="#9c9c9c"/></svg><div class="a" style="left:73px;top:176px;width:106px;height:15.8px;background:#9a9a9a"></div><svg class="i" style="left:76.0px;top:176.5px" width="16" height="15" viewBox="0 0 16 15"><path d="M0.600 3.600L3.600 0.600h11.600v10.600l-3 3.400H0.600z" fill="#eceef2" stroke="#333" stroke-width="1" stroke-linejoin="round"/><path d="M0.600 3.600h11.600v11M12.200 3.600l3-3" fill="none" stroke="#333" stroke-width=".9"/><path d="M12.600 4L14.800 1.600v9.400l-2.200 2.600z" fill="#c4c7cc"/></svg><div class="t" style="left:106.2px;top:178.2px;font-size:11.4px;font-weight:bold;color:#fff">CF-3000 v56</div><svg class="i" style="left:182.8px;top:177.5px" width="14" height="14"><circle cx="6.8" cy="6.8" r="6" fill="#fff" stroke="#222" stroke-width="1.1"/><circle cx="6.8" cy="6.8" r="2.6" fill="#222"/></svg><div class="row" style="left:66.0px;top:198.0px;width:122.7px"></div><svg class="jt" width="80.2" height="13.3" viewBox="0 0 80.2 13.3" fill="#333" style="left:98.4px;top:201.0px" role="img" aria-label="ドキュメントの設定"><text x="0" y="10.46" font-size="10.67" textLength="79.2" lengthAdjust="spacingAndGlyphs">ドキュメントの設定</text></svg><svg class="i" style="left:47.6px;top:201.5px" width="11" height="14"><path d="M1 0.8L9.6 6.5L1 12.4z" fill="#f4f4f4" stroke="#222" stroke-width="1.3" stroke-linejoin="round"/></svg><svg class="i" style="left:69.0px;top:200.0px" width="16" height="16" viewBox="0 0 16 16"><g transform="translate(8,8)" fill="#9a9a9a"><rect x="-1.700" y="-8" width="3.400" height="4" transform="rotate(0)"/><rect x="-1.700" y="-8" width="3.400" height="4" transform="rotate(45)"/><rect x="-1.700" y="-8" width="3.400" height="4" transform="rotate(90)"/><rect x="-1.700" y="-8" width="3.400" height="4" transform="rotate(135)"/><rect x="-1.700" y="-8" width="3.400" height="4" transform="rotate(180)"/><rect x="-1.700" y="-8" width="3.400" height="4" transform="rotate(225)"/><rect x="-1.700" y="-8" width="3.400" height="4" transform="rotate(270)"/><rect x="-1.700" y="-8" width="3.400" height="4" transform="rotate(315)"/><circle r="5.600"/></g><circle cx="8" cy="8" r="2.400" fill="#f1f1f1"/></svg><div class="row" style="left:66.0px;top:222.0px;width:90.5px"></div><svg class="jt" width="48.0" height="13.3" viewBox="0 0 48.0 13.3" fill="#333" style="left:98.4px;top:225.0px" role="img" aria-label="ビュー管理"><text x="0" y="10.46" font-size="10.67" textLength="47" lengthAdjust="spacingAndGlyphs">ビュー管理</text></svg><svg class="i" style="left:47.6px;top:225.5px" width="11" height="14"><path d="M1 0.8L9.6 6.5L1 12.4z" fill="#f4f4f4" stroke="#222" stroke-width="1.3" stroke-linejoin="round"/></svg><svg class="i" style="left:69.0px;top:225.8px" width="17" height="13" viewBox="0 0 17 13"><path d="M0.300 0.500h6l1 1.600H16v10.200H0.300z" fill="#9d9d9d"/><path d="M0.300 3h6.200l.6-.9" fill="none" stroke="#c9c9c9" stroke-width=".7"/></svg><div class="row" style="left:66.0px;top:246.0px;width:89.6px"></div><svg class="jt" width="22.3" height="13.3" viewBox="0 0 22.3 13.3" fill="#333" style="left:123.2px;top:249.0px" role="img" aria-label="原点"><text x="0" y="10.46" font-size="10.67" textLength="21.3" lengthAdjust="spacingAndGlyphs">原点</text></svg><svg class="i" style="left:47.6px;top:249.5px" width="11" height="14"><path d="M1 0.8L9.6 6.5L1 12.4z" fill="#f4f4f4" stroke="#222" stroke-width="1.3" stroke-linejoin="round"/></svg><svg class="i" style="left:69.0px;top:250.0px" width="16" height="12" viewBox="0 0 16 12"><path d="M0.600 6C2.800 2.800 5.300 1.500 8 1.500S13.200 2.800 15.400 6C13.200 9.200 10.700 10.500 8 10.500S2.800 9.200 0.600 6z" fill="none" stroke="#aaa" stroke-width="1"/><circle cx="8" cy="6" r="2.600" fill="none" stroke="#aaa" stroke-width="1"/><path d="M2.600 0.800L14 11.600" stroke="#aaa" stroke-width="1.100"/></svg><svg class="i" style="left:94.0px;top:249.8px" width="17" height="13" viewBox="0 0 17 13"><path d="M0.300 0.500h6l1 1.600H16v10.200H0.300z" fill="#9d9d9d"/><path d="M0.300 3h6.200l.6-.9" fill="none" stroke="#c9c9c9" stroke-width=".7"/></svg><div class="row" style="left:66.0px;top:270.0px;width:93.5px"></div><svg class="jt" width="26.2" height="13.3" viewBox="0 0 26.2 13.3" fill="#333" style="left:123.2px;top:273.1px" role="img" aria-label="ボディ"><text x="0" y="10.46" font-size="10.67" textLength="25.2" lengthAdjust="spacingAndGlyphs">ボディ</text></svg><svg class="i" style="left:46.4px;top:274.0px" width="12" height="12"><defs><linearGradient id="tg" x1="0" y1="0" x2="1" y2="1"><stop offset="0.3" stop-color="#d8d8d8"/><stop offset="1" stop-color="#444"/></linearGradient></defs><path d="M11 0.8V11.2H0.8z" fill="url(#tg)" stroke="#222" stroke-width="1"/></svg><svg class="i" style="left:69.0px;top:275.0px" width="16" height="10" viewBox="0 0 16 10"><path d="M0.300 5C2.600 1.600 5.200 0.300 8 0.300S13.400 1.600 15.700 5C13.400 8.400 10.800 9.700 8 9.700S2.600 8.400 0.300 5z" fill="#9c9c9c"/><circle cx="8" cy="5" r="3.300" fill="#f1f1f1"/><circle cx="8" cy="5" r="1.900" fill="#9c9c9c"/></svg><svg class="i" style="left:94.0px;top:273.8px" width="17" height="13" viewBox="0 0 17 13"><path d="M0.300 0.500h6l1 1.600H16v10.200H0.300z" fill="#9d9d9d"/><path d="M0.300 3h6.200l.6-.9" fill="none" stroke="#c9c9c9" stroke-width=".7"/></svg><div class="row" style="left:84.0px;top:294.0px;width:164.4px"></div><svg class="jt" width="97.1" height="13.3" viewBox="0 0 97.1 13.3" fill="#333" style="left:141.2px;top:297.1px" role="img" aria-label="キーボードグループ (6)"><text x="0" y="10.46" font-size="10.67" textLength="96.1" lengthAdjust="spacingAndGlyphs">キーボードグループ (6)</text></svg><svg class="i" style="left:64.4px;top:298.0px" width="12" height="12"><defs><linearGradient id="tg" x1="0" y1="0" x2="1" y2="1"><stop offset="0.3" stop-color="#d8d8d8"/><stop offset="1" stop-color="#444"/></linearGradient></defs><path d="M11 0.8V11.2H0.8z" fill="url(#tg)" stroke="#222" stroke-width="1"/></svg><svg class="i" style="left:87.0px;top:299.0px" width="16" height="10" viewBox="0 0 16 10"><path d="M0.300 5C2.600 1.600 5.200 0.300 8 0.300S13.400 1.600 15.700 5C13.400 8.400 10.800 9.700 8 9.700S2.600 8.400 0.300 5z" fill="#9c9c9c"/><circle cx="8" cy="5" r="3.300" fill="#f1f1f1"/><circle cx="8" cy="5" r="1.900" fill="#9c9c9c"/></svg><svg class="i" style="left:112.0px;top:297.8px" width="17" height="13" viewBox="0 0 17 13"><path d="M0.300 0.500h6l1 1.600H16v10.200H0.300z" fill="#9d9d9d"/><path d="M0.300 3h6.200l.6-.9" fill="none" stroke="#c9c9c9" stroke-width=".7"/></svg><div class="row" style="left:102.0px;top:318.0px;width:113.3px"></div><svg class="jt" width="46.0" height="13.3" viewBox="0 0 46.0 13.3" fill="#333" style="left:159.2px;top:321.1px" role="img" aria-label="キーボード"><text x="0" y="10.46" font-size="10.67" textLength="45" lengthAdjust="spacingAndGlyphs">キーボード</text></svg><svg class="i" style="left:105.0px;top:323.0px" width="16" height="10" viewBox="0 0 16 10"><path d="M0.300 5C2.600 1.600 5.200 0.300 8 0.300S13.400 1.600 15.700 5C13.400 8.400 10.800 9.700 8 9.700S2.600 8.400 0.300 5z" fill="#9c9c9c"/><circle cx="8" cy="5" r="3.300" fill="#f1f1f1"/><circle cx="8" cy="5" r="1.900" fill="#9c9c9c"/></svg><svg class="i" style="left:130.2px;top:320.0px" width="16" height="16" viewBox="0 0 16 16"><defs><linearGradient id="bdg" x1="0" y1="0" x2="1" y2="0"><stop offset="0" stop-color="#f4f4f4"/><stop offset="1" stop-color="#b9bcc0"/></linearGradient></defs><rect x="0.600" y="0.600" width="14.600" height="14.600" rx="4" fill="#fff" stroke="#3c4858" stroke-width="1.100"/><path d="M3.600 6.400h8.800v7.400a1 1 0 0 1-1 1H4.600a1 1 0 0 1-1-1z" fill="url(#bdg)"/></svg><div class="row" style="left:102.0px;top:342.0px;width:187.1px"></div><svg class="jt" width="119.8" height="13.3" viewBox="0 0 119.8 13.3" fill="#333" style="left:159.2px;top:345.1px" role="img" aria-label="キーボード・ボディ・上面・左"><text x="0" y="10.46" font-size="10.67" textLength="118.8" lengthAdjust="spacingAndGlyphs">キーボード・ボディ・上面・左</text></svg><svg class="i" style="left:105.0px;top:347.0px" width="16" height="10" viewBox="0 0 16 10"><path d="M0.300 5C2.600 1.600 5.200 0.300 8 0.300S13.400 1.600 15.700 5C13.400 8.400 10.800 9.700 8 9.700S2.600 8.400 0.300 5z" fill="#9c9c9c"/><circle cx="8" cy="5" r="3.300" fill="#f1f1f1"/><circle cx="8" cy="5" r="1.900" fill="#9c9c9c"/></svg><svg class="i" style="left:130.2px;top:344.0px" width="16" height="16" viewBox="0 0 16 16"><defs><linearGradient id="bdg" x1="0" y1="0" x2="1" y2="0"><stop offset="0" stop-color="#f4f4f4"/><stop offset="1" stop-color="#b9bcc0"/></linearGradient></defs><rect x="0.600" y="0.600" width="14.600" height="14.600" rx="4" fill="#fff" stroke="#3c4858" stroke-width="1.100"/><path d="M3.600 6.400h8.800v7.400a1 1 0 0 1-1 1H4.600a1 1 0 0 1-1-1z" fill="url(#bdg)"/></svg><div class="row" style="left:102.0px;top:366.0px;width:170.5px"></div><svg class="jt" width="103.2" height="13.3" viewBox="0 0 103.2 13.3" fill="#333" style="left:159.2px;top:369.1px" role="img" aria-label="キーボード・ボディ・上面"><text x="0" y="10.46" font-size="10.67" textLength="102.2" lengthAdjust="spacingAndGlyphs">キーボード・ボディ・上面</text></svg><svg class="i" style="left:105.0px;top:371.0px" width="16" height="10" viewBox="0 0 16 10"><path d="M0.300 5C2.600 1.600 5.200 0.300 8 0.300S13.400 1.600 15.700 5C13.400 8.400 10.800 9.700 8 9.700S2.600 8.400 0.300 5z" fill="#9c9c9c"/><circle cx="8" cy="5" r="3.300" fill="#f1f1f1"/><circle cx="8" cy="5" r="1.900" fill="#9c9c9c"/></svg><svg class="i" style="left:130.2px;top:368.0px" width="16" height="16" viewBox="0 0 16 16"><defs><linearGradient id="bdg" x1="0" y1="0" x2="1" y2="0"><stop offset="0" stop-color="#f4f4f4"/><stop offset="1" stop-color="#b9bcc0"/></linearGradient></defs><rect x="0.600" y="0.600" width="14.600" height="14.600" rx="4" fill="#fff" stroke="#3c4858" stroke-width="1.100"/><path d="M3.600 6.400h8.800v7.400a1 1 0 0 1-1 1H4.600a1 1 0 0 1-1-1z" fill="url(#bdg)"/></svg><div class="row" style="left:102.0px;top:390.0px;width:187.2px"></div><svg class="jt" width="119.9" height="13.3" viewBox="0 0 119.9 13.3" fill="#333" style="left:159.2px;top:393.1px" role="img" aria-label="キーボード・ボディ・上面・右"><text x="0" y="10.46" font-size="10.67" textLength="118.9" lengthAdjust="spacingAndGlyphs">キーボード・ボディ・上面・右</text></svg><svg class="i" style="left:105.0px;top:395.0px" width="16" height="10" viewBox="0 0 16 10"><path d="M0.300 5C2.600 1.600 5.200 0.300 8 0.300S13.400 1.600 15.700 5C13.400 8.400 10.800 9.700 8 9.700S2.600 8.400 0.300 5z" fill="#9c9c9c"/><circle cx="8" cy="5" r="3.300" fill="#f1f1f1"/><circle cx="8" cy="5" r="1.900" fill="#9c9c9c"/></svg><svg class="i" style="left:130.2px;top:392.0px" width="16" height="16" viewBox="0 0 16 16"><defs><linearGradient id="bdg" x1="0" y1="0" x2="1" y2="0"><stop offset="0" stop-color="#f4f4f4"/><stop offset="1" stop-color="#b9bcc0"/></linearGradient></defs><rect x="0.600" y="0.600" width="14.600" height="14.600" rx="4" fill="#fff" stroke="#3c4858" stroke-width="1.100"/><path d="M3.600 6.400h8.800v7.400a1 1 0 0 1-1 1H4.600a1 1 0 0 1-1-1z" fill="url(#bdg)"/></svg><div class="row" style="left:102.0px;top:414.0px;width:170.5px"></div><svg class="jt" width="103.2" height="13.3" viewBox="0 0 103.2 13.3" fill="#333" style="left:159.2px;top:417.1px" role="img" aria-label="キーボード・ボディ・底面"><text x="0" y="10.46" font-size="10.67" textLength="102.2" lengthAdjust="spacingAndGlyphs">キーボード・ボディ・底面</text></svg><svg class="i" style="left:105.0px;top:419.0px" width="16" height="10" viewBox="0 0 16 10"><path d="M0.300 5C2.600 1.600 5.200 0.300 8 0.300S13.400 1.600 15.700 5C13.400 8.400 10.800 9.700 8 9.700S2.600 8.400 0.300 5z" fill="#9c9c9c"/><circle cx="8" cy="5" r="3.300" fill="#f1f1f1"/><circle cx="8" cy="5" r="1.900" fill="#9c9c9c"/></svg><svg class="i" style="left:130.2px;top:416.0px" width="16" height="16" viewBox="0 0 16 16"><defs><linearGradient id="bdg" x1="0" y1="0" x2="1" y2="0"><stop offset="0" stop-color="#f4f4f4"/><stop offset="1" stop-color="#b9bcc0"/></linearGradient></defs><rect x="0.600" y="0.600" width="14.600" height="14.600" rx="4" fill="#fff" stroke="#3c4858" stroke-width="1.100"/><path d="M3.600 6.400h8.800v7.400a1 1 0 0 1-1 1H4.600a1 1 0 0 1-1-1z" fill="url(#bdg)"/></svg><div class="row" style="left:102.0px;top:438.0px;width:151.2px"></div><svg class="jt" width="83.9" height="13.3" viewBox="0 0 83.9 13.3" fill="#333" style="left:159.2px;top:441.1px" role="img" aria-label="キーボード・コネクタ"><text x="0" y="10.46" font-size="10.67" textLength="82.9" lengthAdjust="spacingAndGlyphs">キーボード・コネクタ</text></svg><svg class="i" style="left:105.0px;top:443.0px" width="16" height="10" viewBox="0 0 16 10"><path d="M0.300 5C2.600 1.600 5.200 0.300 8 0.300S13.400 1.600 15.700 5C13.400 8.400 10.800 9.700 8 9.700S2.600 8.400 0.300 5z" fill="#9c9c9c"/><circle cx="8" cy="5" r="3.300" fill="#f1f1f1"/><circle cx="8" cy="5" r="1.900" fill="#9c9c9c"/></svg><svg class="i" style="left:130.2px;top:440.0px" width="16" height="16" viewBox="0 0 16 16"><defs><linearGradient id="bdg" x1="0" y1="0" x2="1" y2="0"><stop offset="0" stop-color="#f4f4f4"/><stop offset="1" stop-color="#b9bcc0"/></linearGradient></defs><rect x="0.600" y="0.600" width="14.600" height="14.600" rx="4" fill="#fff" stroke="#3c4858" stroke-width="1.100"/><path d="M3.600 6.400h8.800v7.400a1 1 0 0 1-1 1H4.600a1 1 0 0 1-1-1z" fill="url(#bdg)"/></svg><div class="row" style="left:84.0px;top:462.0px;width:125.7px"></div><svg class="jt" width="58.4" height="13.3" viewBox="0 0 58.4 13.3" fill="#333" style="left:141.2px;top:465.1px" role="img" aria-label="フロントパネル"><text x="0" y="10.46" font-size="10.67" textLength="57.4" lengthAdjust="spacingAndGlyphs">フロントパネル</text></svg><svg class="i" style="left:87.0px;top:467.0px" width="16" height="10" viewBox="0 0 16 10"><path d="M0.300 5C2.600 1.600 5.200 0.300 8 0.300S13.400 1.600 15.700 5C13.400 8.400 10.800 9.700 8 9.700S2.600 8.400 0.300 5z" fill="#9c9c9c"/><circle cx="8" cy="5" r="3.300" fill="#f1f1f1"/><circle cx="8" cy="5" r="1.900" fill="#9c9c9c"/></svg><svg class="i" style="left:112.2px;top:464.0px" width="16" height="16" viewBox="0 0 16 16"><defs><linearGradient id="bdg" x1="0" y1="0" x2="1" y2="0"><stop offset="0" stop-color="#f4f4f4"/><stop offset="1" stop-color="#b9bcc0"/></linearGradient></defs><rect x="0.600" y="0.600" width="14.600" height="14.600" rx="4" fill="#fff" stroke="#3c4858" stroke-width="1.100"/><path d="M3.600 6.400h8.800v7.400a1 1 0 0 1-1 1H4.600a1 1 0 0 1-1-1z" fill="url(#bdg)"/></svg><div class="row" style="left:84.0px;top:486.0px;width:143.5px"></div><svg class="jt" width="76.2" height="13.3" viewBox="0 0 76.2 13.3" fill="#333" style="left:141.2px;top:489.1px" role="img" aria-label="フロントパネル・左"><text x="0" y="10.46" font-size="10.67" textLength="75.2" lengthAdjust="spacingAndGlyphs">フロントパネル・左</text></svg><svg class="i" style="left:87.0px;top:491.0px" width="16" height="10" viewBox="0 0 16 10"><path d="M0.300 5C2.600 1.600 5.200 0.300 8 0.300S13.400 1.600 15.700 5C13.400 8.400 10.800 9.700 8 9.700S2.600 8.400 0.300 5z" fill="#9c9c9c"/><circle cx="8" cy="5" r="3.300" fill="#f1f1f1"/><circle cx="8" cy="5" r="1.900" fill="#9c9c9c"/></svg><svg class="i" style="left:112.2px;top:488.0px" width="16" height="16" viewBox="0 0 16 16"><defs><linearGradient id="bdg" x1="0" y1="0" x2="1" y2="0"><stop offset="0" stop-color="#f4f4f4"/><stop offset="1" stop-color="#b9bcc0"/></linearGradient></defs><rect x="0.600" y="0.600" width="14.600" height="14.600" rx="4" fill="#fff" stroke="#3c4858" stroke-width="1.100"/><path d="M3.600 6.400h8.800v7.400a1 1 0 0 1-1 1H4.600a1 1 0 0 1-1-1z" fill="url(#bdg)"/></svg><div class="row" style="left:84.0px;top:510.0px;width:165.1px"></div><svg class="jt" width="97.8" height="13.3" viewBox="0 0 97.8 13.3" fill="#333" style="left:141.2px;top:513.1px" role="img" aria-label="フロントパネル・化粧蓋"><text x="0" y="10.46" font-size="10.67" textLength="96.8" lengthAdjust="spacingAndGlyphs">フロントパネル・化粧蓋</text></svg><svg class="i" style="left:87.0px;top:515.0px" width="16" height="10" viewBox="0 0 16 10"><path d="M0.300 5C2.600 1.600 5.200 0.300 8 0.300S13.400 1.600 15.700 5C13.400 8.400 10.800 9.700 8 9.700S2.600 8.400 0.300 5z" fill="#9c9c9c"/><circle cx="8" cy="5" r="3.300" fill="#f1f1f1"/><circle cx="8" cy="5" r="1.900" fill="#9c9c9c"/></svg><svg class="i" style="left:112.2px;top:512.0px" width="16" height="16" viewBox="0 0 16 16"><defs><linearGradient id="bdg" x1="0" y1="0" x2="1" y2="0"><stop offset="0" stop-color="#f4f4f4"/><stop offset="1" stop-color="#b9bcc0"/></linearGradient></defs><rect x="0.600" y="0.600" width="14.600" height="14.600" rx="4" fill="#fff" stroke="#3c4858" stroke-width="1.100"/><path d="M3.600 6.400h8.800v7.400a1 1 0 0 1-1 1H4.600a1 1 0 0 1-1-1z" fill="url(#bdg)"/></svg><div class="row" style="left:84.0px;top:534.0px;width:152.7px"></div><svg class="jt" width="85.4" height="13.3" viewBox="0 0 85.4 13.3" fill="#333" style="left:141.2px;top:537.1px" role="img" aria-label="ジョイスティックポート"><text x="0" y="10.46" font-size="10.67" textLength="84.4" lengthAdjust="spacingAndGlyphs">ジョイスティックポート</text></svg><svg class="i" style="left:87.0px;top:539.0px" width="16" height="10" viewBox="0 0 16 10"><path d="M0.300 5C2.600 1.600 5.200 0.300 8 0.300S13.400 1.600 15.700 5C13.400 8.400 10.800 9.700 8 9.700S2.600 8.400 0.300 5z" fill="#9c9c9c"/><circle cx="8" cy="5" r="3.300" fill="#f1f1f1"/><circle cx="8" cy="5" r="1.900" fill="#9c9c9c"/></svg><svg class="i" style="left:112.2px;top:536.0px" width="16" height="16" viewBox="0 0 16 16"><defs><linearGradient id="bdg" x1="0" y1="0" x2="1" y2="0"><stop offset="0" stop-color="#f4f4f4"/><stop offset="1" stop-color="#b9bcc0"/></linearGradient></defs><rect x="0.600" y="0.600" width="14.600" height="14.600" rx="4" fill="#fff" stroke="#3c4858" stroke-width="1.100"/><path d="M3.600 6.400h8.800v7.400a1 1 0 0 1-1 1H4.600a1 1 0 0 1-1-1z" fill="url(#bdg)"/></svg><div class="row" style="left:84.0px;top:558.0px;width:91.1px"></div><svg class="jt" width="23.8" height="13.3" viewBox="0 0 23.8 13.3" fill="#333" style="left:141.2px;top:561.1px" role="img" aria-label="足・1"><text x="0" y="10.46" font-size="10.67" textLength="22.8" lengthAdjust="spacingAndGlyphs">足・1</text></svg><svg class="i" style="left:87.0px;top:563.0px" width="16" height="10" viewBox="0 0 16 10"><path d="M0.300 5C2.600 1.600 5.200 0.300 8 0.300S13.400 1.600 15.700 5C13.400 8.400 10.800 9.700 8 9.700S2.600 8.400 0.300 5z" fill="#9c9c9c"/><circle cx="8" cy="5" r="3.300" fill="#f1f1f1"/><circle cx="8" cy="5" r="1.900" fill="#9c9c9c"/></svg><svg class="i" style="left:112.2px;top:560.0px" width="16" height="16" viewBox="0 0 16 16"><defs><linearGradient id="bdg" x1="0" y1="0" x2="1" y2="0"><stop offset="0" stop-color="#f4f4f4"/><stop offset="1" stop-color="#b9bcc0"/></linearGradient></defs><rect x="0.600" y="0.600" width="14.600" height="14.600" rx="4" fill="#fff" stroke="#3c4858" stroke-width="1.100"/><path d="M3.600 6.400h8.800v7.400a1 1 0 0 1-1 1H4.600a1 1 0 0 1-1-1z" fill="url(#bdg)"/></svg><div class="row" style="left:84.0px;top:582.0px;width:91.3px"></div><svg class="jt" width="24.0" height="13.3" viewBox="0 0 24.0 13.3" fill="#333" style="left:141.2px;top:585.1px" role="img" aria-label="足・2"><text x="0" y="10.46" font-size="10.67" textLength="23" lengthAdjust="spacingAndGlyphs">足・2</text></svg><svg class="i" style="left:87.0px;top:587.0px" width="16" height="10" viewBox="0 0 16 10"><path d="M0.300 5C2.600 1.600 5.200 0.300 8 0.300S13.400 1.600 15.700 5C13.400 8.400 10.800 9.700 8 9.700S2.600 8.400 0.300 5z" fill="#9c9c9c"/><circle cx="8" cy="5" r="3.300" fill="#f1f1f1"/><circle cx="8" cy="5" r="1.900" fill="#9c9c9c"/></svg><svg class="i" style="left:112.2px;top:584.0px" width="16" height="16" viewBox="0 0 16 16"><defs><linearGradient id="bdg" x1="0" y1="0" x2="1" y2="0"><stop offset="0" stop-color="#f4f4f4"/><stop offset="1" stop-color="#b9bcc0"/></linearGradient></defs><rect x="0.600" y="0.600" width="14.600" height="14.600" rx="4" fill="#fff" stroke="#3c4858" stroke-width="1.100"/><path d="M3.600 6.400h8.800v7.400a1 1 0 0 1-1 1H4.600a1 1 0 0 1-1-1z" fill="url(#bdg)"/></svg><div class="row" style="left:84.0px;top:606.0px;width:91.3px"></div><svg class="jt" width="24.0" height="13.3" viewBox="0 0 24.0 13.3" fill="#333" style="left:141.2px;top:609.1px" role="img" aria-label="足・3"><text x="0" y="10.46" font-size="10.67" textLength="23" lengthAdjust="spacingAndGlyphs">足・3</text></svg><svg class="i" style="left:87.0px;top:611.0px" width="16" height="10" viewBox="0 0 16 10"><path d="M0.300 5C2.600 1.600 5.200 0.300 8 0.300S13.400 1.600 15.700 5C13.400 8.400 10.800 9.700 8 9.700S2.600 8.400 0.300 5z" fill="#9c9c9c"/><circle cx="8" cy="5" r="3.300" fill="#f1f1f1"/><circle cx="8" cy="5" r="1.900" fill="#9c9c9c"/></svg><svg class="i" style="left:112.2px;top:608.0px" width="16" height="16" viewBox="0 0 16 16"><defs><linearGradient id="bdg" x1="0" y1="0" x2="1" y2="0"><stop offset="0" stop-color="#f4f4f4"/><stop offset="1" stop-color="#b9bcc0"/></linearGradient></defs><rect x="0.600" y="0.600" width="14.600" height="14.600" rx="4" fill="#fff" stroke="#3c4858" stroke-width="1.100"/><path d="M3.600 6.400h8.800v7.400a1 1 0 0 1-1 1H4.600a1 1 0 0 1-1-1z" fill="url(#bdg)"/></svg><div class="row" style="left:84.0px;top:630.0px;width:91.5px"></div><svg class="jt" width="24.2" height="13.3" viewBox="0 0 24.2 13.3" fill="#333" style="left:141.2px;top:633.1px" role="img" aria-label="足・4"><text x="0" y="10.46" font-size="10.67" textLength="23.2" lengthAdjust="spacingAndGlyphs">足・4</text></svg><svg class="i" style="left:87.0px;top:635.0px" width="16" height="10" viewBox="0 0 16 10"><path d="M0.300 5C2.600 1.600 5.200 0.300 8 0.300S13.400 1.600 15.700 5C13.400 8.400 10.800 9.700 8 9.700S2.600 8.400 0.300 5z" fill="#9c9c9c"/><circle cx="8" cy="5" r="3.300" fill="#f1f1f1"/><circle cx="8" cy="5" r="1.900" fill="#9c9c9c"/></svg><svg class="i" style="left:112.2px;top:632.0px" width="16" height="16" viewBox="0 0 16 16"><defs><linearGradient id="bdg" x1="0" y1="0" x2="1" y2="0"><stop offset="0" stop-color="#f4f4f4"/><stop offset="1" stop-color="#b9bcc0"/></linearGradient></defs><rect x="0.600" y="0.600" width="14.600" height="14.600" rx="4" fill="#fff" stroke="#3c4858" stroke-width="1.100"/><path d="M3.600 6.400h8.800v7.400a1 1 0 0 1-1 1H4.600a1 1 0 0 1-1-1z" fill="url(#bdg)"/></svg><div class="row" style="left:84.0px;top:654.0px;width:148.4px"></div><svg class="jt" width="81.1" height="13.3" viewBox="0 0 81.1 13.3" fill="#333" style="left:141.2px;top:657.1px" role="img" aria-label="カートリッジ・蓋・左"><text x="0" y="10.46" font-size="10.67" textLength="80.1" lengthAdjust="spacingAndGlyphs">カートリッジ・蓋・左</text></svg><svg class="i" style="left:87.0px;top:659.0px" width="16" height="10" viewBox="0 0 16 10"><path d="M0.300 5C2.600 1.600 5.200 0.300 8 0.300S13.400 1.600 15.700 5C13.400 8.400 10.800 9.700 8 9.700S2.600 8.400 0.300 5z" fill="#9c9c9c"/><circle cx="8" cy="5" r="3.300" fill="#f1f1f1"/><circle cx="8" cy="5" r="1.900" fill="#9c9c9c"/></svg><svg class="i" style="left:112.2px;top:656.0px" width="16" height="16" viewBox="0 0 16 16"><defs><linearGradient id="bdg" x1="0" y1="0" x2="1" y2="0"><stop offset="0" stop-color="#f4f4f4"/><stop offset="1" stop-color="#b9bcc0"/></linearGradient></defs><rect x="0.600" y="0.600" width="14.600" height="14.600" rx="4" fill="#fff" stroke="#3c4858" stroke-width="1.100"/><path d="M3.600 6.400h8.800v7.400a1 1 0 0 1-1 1H4.600a1 1 0 0 1-1-1z" fill="url(#bdg)"/></svg><div class="row" style="left:84.0px;top:678.0px;width:148.4px"></div><svg class="jt" width="81.1" height="13.3" viewBox="0 0 81.1 13.3" fill="#333" style="left:141.2px;top:681.1px" role="img" aria-label="カートリッジ・蓋・右"><text x="0" y="10.46" font-size="10.67" textLength="80.1" lengthAdjust="spacingAndGlyphs">カートリッジ・蓋・右</text></svg><svg class="i" style="left:87.0px;top:683.0px" width="16" height="10" viewBox="0 0 16 10"><path d="M0.300 5C2.600 1.600 5.200 0.300 8 0.300S13.400 1.600 15.700 5C13.400 8.400 10.800 9.700 8 9.700S2.600 8.400 0.300 5z" fill="#9c9c9c"/><circle cx="8" cy="5" r="3.300" fill="#f1f1f1"/><circle cx="8" cy="5" r="1.900" fill="#9c9c9c"/></svg><svg class="i" style="left:112.2px;top:680.0px" width="16" height="16" viewBox="0 0 16 16"><defs><linearGradient id="bdg" x1="0" y1="0" x2="1" y2="0"><stop offset="0" stop-color="#f4f4f4"/><stop offset="1" stop-color="#b9bcc0"/></linearGradient></defs><rect x="0.600" y="0.600" width="14.600" height="14.600" rx="4" fill="#fff" stroke="#3c4858" stroke-width="1.100"/><path d="M3.600 6.400h8.800v7.400a1 1 0 0 1-1 1H4.600a1 1 0 0 1-1-1z" fill="url(#bdg)"/></svg><div class="row" style="left:84.0px;top:702.0px;width:116.5px"></div><svg class="jt" width="49.2" height="13.3" viewBox="0 0 49.2 13.3" fill="#333" style="left:141.2px;top:705.1px" role="img" aria-label="電源ボタン"><text x="0" y="10.46" font-size="10.67" textLength="48.2" lengthAdjust="spacingAndGlyphs">電源ボタン</text></svg><svg class="i" style="left:87.0px;top:707.0px" width="16" height="10" viewBox="0 0 16 10"><path d="M0.300 5C2.600 1.600 5.200 0.300 8 0.300S13.400 1.600 15.700 5C13.400 8.400 10.800 9.700 8 9.700S2.600 8.400 0.300 5z" fill="#9c9c9c"/><circle cx="8" cy="5" r="3.300" fill="#f1f1f1"/><circle cx="8" cy="5" r="1.900" fill="#9c9c9c"/></svg><svg class="i" style="left:112.2px;top:704.0px" width="16" height="16" viewBox="0 0 16 16"><defs><linearGradient id="bdg" x1="0" y1="0" x2="1" y2="0"><stop offset="0" stop-color="#f4f4f4"/><stop offset="1" stop-color="#b9bcc0"/></linearGradient></defs><rect x="0.600" y="0.600" width="14.600" height="14.600" rx="4" fill="#fff" stroke="#3c4858" stroke-width="1.100"/><path d="M3.600 6.400h8.800v7.400a1 1 0 0 1-1 1H4.600a1 1 0 0 1-1-1z" fill="url(#bdg)"/></svg><div class="row" style="left:84.0px;top:726.0px;width:149.6px"></div><svg class="jt" width="82.3" height="13.3" viewBox="0 0 82.3 13.3" fill="#333" style="left:141.2px;top:729.1px" role="img" aria-label="イジェクトボタン・左"><text x="0" y="10.46" font-size="10.67" textLength="81.3" lengthAdjust="spacingAndGlyphs">イジェクトボタン・左</text></svg><svg class="i" style="left:87.0px;top:731.0px" width="16" height="10" viewBox="0 0 16 10"><path d="M0.300 5C2.600 1.600 5.200 0.300 8 0.300S13.400 1.600 15.700 5C13.400 8.400 10.800 9.700 8 9.700S2.600 8.400 0.300 5z" fill="#9c9c9c"/><circle cx="8" cy="5" r="3.300" fill="#f1f1f1"/><circle cx="8" cy="5" r="1.900" fill="#9c9c9c"/></svg><svg class="i" style="left:112.2px;top:728.0px" width="16" height="16" viewBox="0 0 16 16"><defs><linearGradient id="bdg" x1="0" y1="0" x2="1" y2="0"><stop offset="0" stop-color="#f4f4f4"/><stop offset="1" stop-color="#b9bcc0"/></linearGradient></defs><rect x="0.600" y="0.600" width="14.600" height="14.600" rx="4" fill="#fff" stroke="#3c4858" stroke-width="1.100"/><path d="M3.600 6.400h8.800v7.400a1 1 0 0 1-1 1H4.600a1 1 0 0 1-1-1z" fill="url(#bdg)"/></svg><div class="row" style="left:84.0px;top:750.0px;width:149.7px"></div><svg class="jt" width="82.4" height="13.3" viewBox="0 0 82.4 13.3" fill="#333" style="left:141.2px;top:753.1px" role="img" aria-label="イジェクトボタン・右"><text x="0" y="10.46" font-size="10.67" textLength="81.4" lengthAdjust="spacingAndGlyphs">イジェクトボタン・右</text></svg><svg class="i" style="left:87.0px;top:755.0px" width="16" height="10" viewBox="0 0 16 10"><path d="M0.300 5C2.600 1.600 5.200 0.300 8 0.300S13.400 1.600 15.700 5C13.400 8.400 10.800 9.700 8 9.700S2.600 8.400 0.300 5z" fill="#9c9c9c"/><circle cx="8" cy="5" r="3.300" fill="#f1f1f1"/><circle cx="8" cy="5" r="1.900" fill="#9c9c9c"/></svg><svg class="i" style="left:112.2px;top:752.0px" width="16" height="16" viewBox="0 0 16 16"><defs><linearGradient id="bdg" x1="0" y1="0" x2="1" y2="0"><stop offset="0" stop-color="#f4f4f4"/><stop offset="1" stop-color="#b9bcc0"/></linearGradient></defs><rect x="0.600" y="0.600" width="14.600" height="14.600" rx="4" fill="#fff" stroke="#3c4858" stroke-width="1.100"/><path d="M3.600 6.400h8.800v7.400a1 1 0 0 1-1 1H4.600a1 1 0 0 1-1-1z" fill="url(#bdg)"/></svg><div class="row" style="left:84.0px;top:774.0px;width:186.8px"></div><svg class="jt" width="119.5" height="13.3" viewBox="0 0 119.5 13.3" fill="#333" style="left:141.2px;top:777.1px" role="img" aria-label="フロントパネル・内部フレーム"><text x="0" y="10.46" font-size="10.67" textLength="118.5" lengthAdjust="spacingAndGlyphs">フロントパネル・内部フレーム</text></svg><svg class="i" style="left:87.0px;top:779.0px" width="16" height="10" viewBox="0 0 16 10"><path d="M0.300 5C2.600 1.600 5.200 0.300 8 0.300S13.400 1.600 15.700 5C13.400 8.400 10.800 9.700 8 9.700S2.600 8.400 0.300 5z" fill="#9c9c9c"/><circle cx="8" cy="5" r="3.300" fill="#f1f1f1"/><circle cx="8" cy="5" r="1.900" fill="#9c9c9c"/></svg><svg class="i" style="left:112.2px;top:776.0px" width="16" height="16" viewBox="0 0 16 16"><defs><linearGradient id="bdg" x1="0" y1="0" x2="1" y2="0"><stop offset="0" stop-color="#f4f4f4"/><stop offset="1" stop-color="#b9bcc0"/></linearGradient></defs><rect x="0.600" y="0.600" width="14.600" height="14.600" rx="4" fill="#fff" stroke="#3c4858" stroke-width="1.100"/><path d="M3.600 6.400h8.800v7.400a1 1 0 0 1-1 1H4.600a1 1 0 0 1-1-1z" fill="url(#bdg)"/></svg><div class="row" style="left:84.0px;top:798.0px;width:120.5px"></div><svg class="jt" width="53.2" height="13.3" viewBox="0 0 53.2 13.3" fill="#333" style="left:141.2px;top:801.1px" role="img" aria-label="ボディ・右面"><text x="0" y="10.46" font-size="10.67" textLength="52.2" lengthAdjust="spacingAndGlyphs">ボディ・右面</text></svg><svg class="i" style="left:87.0px;top:803.0px" width="16" height="10" viewBox="0 0 16 10"><path d="M0.300 5C2.600 1.600 5.200 0.300 8 0.300S13.400 1.600 15.700 5C13.400 8.400 10.800 9.700 8 9.700S2.600 8.400 0.300 5z" fill="#9c9c9c"/><circle cx="8" cy="5" r="3.300" fill="#f1f1f1"/><circle cx="8" cy="5" r="1.900" fill="#9c9c9c"/></svg><svg class="i" style="left:112.2px;top:800.0px" width="16" height="16" viewBox="0 0 16 16"><defs><linearGradient id="bdg" x1="0" y1="0" x2="1" y2="0"><stop offset="0" stop-color="#f4f4f4"/><stop offset="1" stop-color="#b9bcc0"/></linearGradient></defs><rect x="0.600" y="0.600" width="14.600" height="14.600" rx="4" fill="#fff" stroke="#3c4858" stroke-width="1.100"/><path d="M3.600 6.400h8.800v7.400a1 1 0 0 1-1 1H4.600a1 1 0 0 1-1-1z" fill="url(#bdg)"/></svg><div class="row" style="left:84.0px;top:822.0px;width:120.5px"></div><svg class="jt" width="53.2" height="13.3" viewBox="0 0 53.2 13.3" fill="#333" style="left:141.2px;top:825.1px" role="img" aria-label="ボディ・底面"><text x="0" y="10.46" font-size="10.67" textLength="52.2" lengthAdjust="spacingAndGlyphs">ボディ・底面</text></svg><svg class="i" style="left:87.0px;top:827.0px" width="16" height="10" viewBox="0 0 16 10"><path d="M0.300 5C2.600 1.600 5.200 0.300 8 0.300S13.400 1.600 15.700 5C13.400 8.400 10.800 9.700 8 9.700S2.600 8.400 0.300 5z" fill="#9c9c9c"/><circle cx="8" cy="5" r="3.300" fill="#f1f1f1"/><circle cx="8" cy="5" r="1.900" fill="#9c9c9c"/></svg><svg class="i" style="left:112.2px;top:824.0px" width="16" height="16" viewBox="0 0 16 16"><defs><linearGradient id="bdg" x1="0" y1="0" x2="1" y2="0"><stop offset="0" stop-color="#f4f4f4"/><stop offset="1" stop-color="#b9bcc0"/></linearGradient></defs><rect x="0.600" y="0.600" width="14.600" height="14.600" rx="4" fill="#fff" stroke="#3c4858" stroke-width="1.100"/><path d="M3.600 6.400h8.800v7.400a1 1 0 0 1-1 1H4.600a1 1 0 0 1-1-1z" fill="url(#bdg)"/></svg><div class="row" style="left:84.0px;top:846.0px;width:120.5px"></div><svg class="jt" width="53.2" height="13.3" viewBox="0 0 53.2 13.3" fill="#333" style="left:141.2px;top:849.1px" role="img" aria-label="ボディ・背面"><text x="0" y="10.46" font-size="10.67" textLength="52.2" lengthAdjust="spacingAndGlyphs">ボディ・背面</text></svg><svg class="i" style="left:87.0px;top:851.0px" width="16" height="10" viewBox="0 0 16 10"><path d="M0.300 5C2.600 1.600 5.200 0.300 8 0.300S13.400 1.600 15.700 5C13.400 8.400 10.800 9.700 8 9.700S2.600 8.400 0.300 5z" fill="#9c9c9c"/><circle cx="8" cy="5" r="3.300" fill="#f1f1f1"/><circle cx="8" cy="5" r="1.900" fill="#9c9c9c"/></svg><svg class="i" style="left:112.2px;top:848.0px" width="16" height="16" viewBox="0 0 16 16"><defs><linearGradient id="bdg" x1="0" y1="0" x2="1" y2="0"><stop offset="0" stop-color="#f4f4f4"/><stop offset="1" stop-color="#b9bcc0"/></linearGradient></defs><rect x="0.600" y="0.600" width="14.600" height="14.600" rx="4" fill="#fff" stroke="#3c4858" stroke-width="1.100"/><path d="M3.600 6.400h8.800v7.400a1 1 0 0 1-1 1H4.600a1 1 0 0 1-1-1z" fill="url(#bdg)"/></svg><div class="row" style="left:84.0px;top:870.0px;width:120.5px"></div><svg class="jt" width="53.2" height="13.3" viewBox="0 0 53.2 13.3" fill="#333" style="left:141.2px;top:873.1px" role="img" aria-label="ボディ・上面"><text x="0" y="10.46" font-size="10.67" textLength="52.2" lengthAdjust="spacingAndGlyphs">ボディ・上面</text></svg><svg class="i" style="left:87.0px;top:875.0px" width="16" height="10" viewBox="0 0 16 10"><path d="M0.300 5C2.600 1.600 5.200 0.300 8 0.300S13.400 1.600 15.700 5C13.400 8.400 10.800 9.700 8 9.700S2.600 8.400 0.300 5z" fill="#9c9c9c"/><circle cx="8" cy="5" r="3.300" fill="#f1f1f1"/><circle cx="8" cy="5" r="1.900" fill="#9c9c9c"/></svg><svg class="i" style="left:112.2px;top:872.0px" width="16" height="16" viewBox="0 0 16 16"><defs><linearGradient id="bdg" x1="0" y1="0" x2="1" y2="0"><stop offset="0" stop-color="#f4f4f4"/><stop offset="1" stop-color="#b9bcc0"/></linearGradient></defs><rect x="0.600" y="0.600" width="14.600" height="14.600" rx="4" fill="#fff" stroke="#3c4858" stroke-width="1.100"/><path d="M3.600 6.400h8.800v7.400a1 1 0 0 1-1 1H4.600a1 1 0 0 1-1-1z" fill="url(#bdg)"/></svg><div class="row" style="left:84.0px;top:894.0px;width:120.5px"></div><svg class="jt" width="53.2" height="13.3" viewBox="0 0 53.2 13.3" fill="#333" style="left:141.2px;top:897.1px" role="img" aria-label="ボディ・左面"><text x="0" y="10.46" font-size="10.67" textLength="52.2" lengthAdjust="spacingAndGlyphs">ボディ・左面</text></svg><svg class="i" style="left:87.0px;top:899.0px" width="16" height="10" viewBox="0 0 16 10"><path d="M0.300 5C2.600 1.600 5.200 0.300 8 0.300S13.400 1.600 15.700 5C13.400 8.400 10.800 9.700 8 9.700S2.600 8.400 0.300 5z" fill="#9c9c9c"/><circle cx="8" cy="5" r="3.300" fill="#f1f1f1"/><circle cx="8" cy="5" r="1.900" fill="#9c9c9c"/></svg><svg class="i" style="left:112.2px;top:896.0px" width="16" height="16" viewBox="0 0 16 16"><defs><linearGradient id="bdg" x1="0" y1="0" x2="1" y2="0"><stop offset="0" stop-color="#f4f4f4"/><stop offset="1" stop-color="#b9bcc0"/></linearGradient></defs><rect x="0.600" y="0.600" width="14.600" height="14.600" rx="4" fill="#fff" stroke="#3c4858" stroke-width="1.100"/><path d="M3.600 6.400h8.800v7.400a1 1 0 0 1-1 1H4.600a1 1 0 0 1-1-1z" fill="url(#bdg)"/></svg><div class="row" style="left:84.0px;top:918.0px;width:188.0px"></div><svg class="jt" width="120.7" height="13.3" viewBox="0 0 120.7 13.3" fill="#333" style="left:141.2px;top:921.1px" role="img" aria-label="キーボード・ボディ・底面 (1)"><text x="0" y="10.46" font-size="10.67" textLength="119.7" lengthAdjust="spacingAndGlyphs">キーボード・ボディ・底面 (1)</text></svg><svg class="i" style="left:87.0px;top:923.0px" width="16" height="10" viewBox="0 0 16 10"><path d="M0.300 5C2.600 1.600 5.200 0.300 8 0.300S13.400 1.600 15.700 5C13.400 8.400 10.800 9.700 8 9.700S2.600 8.400 0.300 5z" fill="#9c9c9c"/><circle cx="8" cy="5" r="3.300" fill="#f1f1f1"/><circle cx="8" cy="5" r="1.900" fill="#9c9c9c"/></svg><svg class="i" style="left:112.2px;top:920.0px" width="16" height="16" viewBox="0 0 16 16"><defs><linearGradient id="bdg" x1="0" y1="0" x2="1" y2="0"><stop offset="0" stop-color="#f4f4f4"/><stop offset="1" stop-color="#b9bcc0"/></linearGradient></defs><rect x="0.600" y="0.600" width="14.600" height="14.600" rx="4" fill="#fff" stroke="#3c4858" stroke-width="1.100"/><path d="M3.600 6.400h8.800v7.400a1 1 0 0 1-1 1H4.600a1 1 0 0 1-1-1z" fill="url(#bdg)"/></svg><div class="row" style="left:84.0px;top:942.0px;width:140.9px"></div><svg class="jt" width="73.6" height="13.3" viewBox="0 0 73.6 13.3" fill="#333" style="left:141.2px;top:945.1px" role="img" aria-label="内部フレーム・右"><text x="0" y="10.46" font-size="10.67" textLength="72.6" lengthAdjust="spacingAndGlyphs">内部フレーム・右</text></svg><svg class="i" style="left:87.0px;top:947.0px" width="16" height="10" viewBox="0 0 16 10"><path d="M0.300 5C2.600 1.600 5.200 0.300 8 0.300S13.400 1.600 15.700 5C13.400 8.400 10.800 9.700 8 9.700S2.600 8.400 0.300 5z" fill="#9c9c9c"/><circle cx="8" cy="5" r="3.300" fill="#f1f1f1"/><circle cx="8" cy="5" r="1.900" fill="#9c9c9c"/></svg><svg class="i" style="left:112.2px;top:944.0px" width="16" height="16" viewBox="0 0 16 16"><defs><linearGradient id="bdg" x1="0" y1="0" x2="1" y2="0"><stop offset="0" stop-color="#f4f4f4"/><stop offset="1" stop-color="#b9bcc0"/></linearGradient></defs><rect x="0.600" y="0.600" width="14.600" height="14.600" rx="4" fill="#fff" stroke="#3c4858" stroke-width="1.100"/><path d="M3.600 6.400h8.800v7.400a1 1 0 0 1-1 1H4.600a1 1 0 0 1-1-1z" fill="url(#bdg)"/></svg><div class="row" style="left:84.0px;top:966.0px;width:141.4px"></div><svg class="jt" width="74.1" height="13.3" viewBox="0 0 74.1 13.3" fill="#333" style="left:141.2px;top:969.1px" role="img" aria-label="内部フレーム・中"><text x="0" y="10.46" font-size="10.67" textLength="73.1" lengthAdjust="spacingAndGlyphs">内部フレーム・中</text></svg><svg class="i" style="left:87.0px;top:971.0px" width="16" height="10" viewBox="0 0 16 10"><path d="M0.300 5C2.600 1.600 5.200 0.300 8 0.300S13.400 1.600 15.700 5C13.400 8.400 10.800 9.700 8 9.700S2.600 8.400 0.300 5z" fill="#9c9c9c"/><circle cx="8" cy="5" r="3.300" fill="#f1f1f1"/><circle cx="8" cy="5" r="1.900" fill="#9c9c9c"/></svg><svg class="i" style="left:112.2px;top:968.0px" width="16" height="16" viewBox="0 0 16 16"><defs><linearGradient id="bdg" x1="0" y1="0" x2="1" y2="0"><stop offset="0" stop-color="#f4f4f4"/><stop offset="1" stop-color="#b9bcc0"/></linearGradient></defs><rect x="0.600" y="0.600" width="14.600" height="14.600" rx="4" fill="#fff" stroke="#3c4858" stroke-width="1.100"/><path d="M3.600 6.400h8.800v7.400a1 1 0 0 1-1 1H4.600a1 1 0 0 1-1-1z" fill="url(#bdg)"/></svg><div class="row" style="left:84.0px;top:990.0px;width:140.9px"></div><svg class="jt" width="73.6" height="13.3" viewBox="0 0 73.6 13.3" fill="#333" style="left:141.2px;top:993.1px" role="img" aria-label="内部フレーム・左"><text x="0" y="10.46" font-size="10.67" textLength="72.6" lengthAdjust="spacingAndGlyphs">内部フレーム・左</text></svg><svg class="i" style="left:87.0px;top:995.0px" width="16" height="10" viewBox="0 0 16 10"><path d="M0.300 5C2.600 1.600 5.200 0.300 8 0.300S13.400 1.600 15.700 5C13.400 8.400 10.800 9.700 8 9.700S2.600 8.400 0.300 5z" fill="#9c9c9c"/><circle cx="8" cy="5" r="3.300" fill="#f1f1f1"/><circle cx="8" cy="5" r="1.900" fill="#9c9c9c"/></svg><svg class="i" style="left:112.2px;top:992.0px" width="16" height="16" viewBox="0 0 16 16"><defs><linearGradient id="bdg" x1="0" y1="0" x2="1" y2="0"><stop offset="0" stop-color="#f4f4f4"/><stop offset="1" stop-color="#b9bcc0"/></linearGradient></defs><rect x="0.600" y="0.600" width="14.600" height="14.600" rx="4" fill="#fff" stroke="#3c4858" stroke-width="1.100"/><path d="M3.600 6.400h8.800v7.400a1 1 0 0 1-1 1H4.600a1 1 0 0 1-1-1z" fill="url(#bdg)"/></svg><div class="row" style="left:84.0px;top:1014.0px;width:89.9px"></div><div class="t" style="left:142.0px;top:1017.8px;font-size:11px;color:#333">LED</div><svg class="i" style="left:87.0px;top:1019.0px" width="16" height="10" viewBox="0 0 16 10"><path d="M0.300 5C2.600 1.600 5.200 0.300 8 0.300S13.400 1.600 15.700 5C13.400 8.400 10.800 9.700 8 9.700S2.600 8.400 0.300 5z" fill="#9c9c9c"/><circle cx="8" cy="5" r="3.300" fill="#f1f1f1"/><circle cx="8" cy="5" r="1.900" fill="#9c9c9c"/></svg><svg class="i" style="left:112.2px;top:1016.0px" width="16" height="16" viewBox="0 0 16 16"><defs><linearGradient id="bdg" x1="0" y1="0" x2="1" y2="0"><stop offset="0" stop-color="#f4f4f4"/><stop offset="1" stop-color="#b9bcc0"/></linearGradient></defs><rect x="0.600" y="0.600" width="14.600" height="14.600" rx="4" fill="#fff" stroke="#3c4858" stroke-width="1.100"/><path d="M3.600 6.400h8.800v7.400a1 1 0 0 1-1 1H4.600a1 1 0 0 1-1-1z" fill="url(#bdg)"/></svg><div class="row" style="left:66.0px;top:1038.0px;width:109.5px"></div><svg class="jt" width="42.2" height="13.3" viewBox="0 0 42.2 13.3" fill="#333" style="left:123.2px;top:1041.0px" role="img" aria-label="キャンバス"><text x="0" y="10.46" font-size="10.67" textLength="41.2" lengthAdjust="spacingAndGlyphs">キャンバス</text></svg><svg class="i" style="left:46.4px;top:1042.0px" width="12" height="12"><defs><linearGradient id="tg" x1="0" y1="0" x2="1" y2="1"><stop offset="0.3" stop-color="#d8d8d8"/><stop offset="1" stop-color="#444"/></linearGradient></defs><path d="M11 0.8V11.2H0.8z" fill="url(#tg)" stroke="#222" stroke-width="1"/></svg><svg class="i" style="left:69.0px;top:1043.0px" width="16" height="10" viewBox="0 0 16 10"><path d="M0.300 5C2.600 1.600 5.200 0.300 8 0.300S13.400 1.600 15.700 5C13.400 8.400 10.800 9.700 8 9.700S2.600 8.400 0.300 5z" fill="#9c9c9c"/><circle cx="8" cy="5" r="3.300" fill="#f1f1f1"/><circle cx="8" cy="5" r="1.900" fill="#9c9c9c"/></svg><svg class="i" style="left:94.0px;top:1041.8px" width="17" height="13" viewBox="0 0 17 13"><path d="M0.300 0.500h6l1 1.600H16v10.200H0.300z" fill="#9d9d9d"/><path d="M0.300 3h6.200l.6-.9" fill="none" stroke="#c9c9c9" stroke-width=".7"/></svg><div class="row" style="left:84.0px;top:1062.0px;width:102.7px"></div><div class="t" style="left:142.0px;top:1065.8px;font-size:11px;color:#333">s02 (4)</div><svg class="i" style="left:87.0px;top:1066.0px" width="16" height="12" viewBox="0 0 16 12"><path d="M0.600 6C2.800 2.800 5.300 1.500 8 1.500S13.200 2.800 15.400 6C13.200 9.200 10.700 10.500 8 10.500S2.800 9.200 0.600 6z" fill="none" stroke="#aaa" stroke-width="1"/><circle cx="8" cy="6" r="2.600" fill="none" stroke="#aaa" stroke-width="1"/><path d="M2.600 0.800L14 11.600" stroke="#aaa" stroke-width="1.100"/></svg><svg class="i" style="left:112.2px;top:1064.0px" width="16" height="16" viewBox="0 0 16 16"><rect x="0.500" y="0.500" width="14.800" height="14.800" fill="#8fc0ea" stroke="#445" stroke-width="1"/><circle cx="11.600" cy="4.200" r="1.600" fill="#f6e58a"/><path d="M1 12.400l4-5.600l3.600 4.400l2.400-2l3.800 4v1.600H1z" fill="#a9b4bd"/><path d="M1 15V8.600C3.400 8.400 7 10.400 8 15z" fill="#b51f24"/><circle cx="4.200" cy="12.200" r="2" fill="none" stroke="#e04a4a" stroke-width="1"/></svg><div class="row" style="left:84.0px;top:1086.0px;width:86.2px"></div><div class="t" style="left:142.0px;top:1089.8px;font-size:11px;color:#333">s04</div><svg class="i" style="left:87.0px;top:1090.0px" width="16" height="12" viewBox="0 0 16 12"><path d="M0.600 6C2.800 2.800 5.300 1.500 8 1.500S13.200 2.800 15.400 6C13.200 9.200 10.700 10.500 8 10.500S2.800 9.200 0.600 6z" fill="none" stroke="#aaa" stroke-width="1"/><circle cx="8" cy="6" r="2.600" fill="none" stroke="#aaa" stroke-width="1"/><path d="M2.600 0.800L14 11.600" stroke="#aaa" stroke-width="1.100"/></svg><svg class="i" style="left:112.2px;top:1088.0px" width="16" height="16" viewBox="0 0 16 16"><rect x="0.500" y="0.500" width="14.800" height="14.800" fill="#8fc0ea" stroke="#445" stroke-width="1"/><circle cx="11.600" cy="4.200" r="1.600" fill="#f6e58a"/><path d="M1 12.400l4-5.600l3.600 4.400l2.400-2l3.800 4v1.600H1z" fill="#a9b4bd"/><path d="M1 15V8.600C3.400 8.400 7 10.400 8 15z" fill="#b51f24"/><circle cx="4.200" cy="12.200" r="2" fill="none" stroke="#e04a4a" stroke-width="1"/></svg><div class="a" style="left:12.4px;top:1131.3px;width:298.8px;height:24px;background:#f2f2f2;border:1px solid #c6c6c6;box-sizing:border-box"></div><svg class="jt" width="33.7" height="13.3" viewBox="0 0 33.7 13.3" fill="#555" style="left:35.8px;top:1135.6px" role="img" aria-label="コメント"><text x="0" y="10.46" font-size="10.67" textLength="32.7" lengthAdjust="spacingAndGlyphs">コメント</text></svg><svg class="i" style="left:290.5px;top:1138.2px" width="10" height="10"><circle cx="4.7" cy="4.7" r="4.6" fill="#1e1e1e"/><path d="M2.2 4.7h5M4.7 2.2v5" stroke="#fff" stroke-width="1.4"/></svg><div class="a" style="left:306.8px;top:1137.5px;width:1px;height:10.5px;background:#555"></div><div class="a" style="left:308.8px;top:1137.5px;width:1px;height:10.5px;background:#999"></div><div class="a" style="left:849.2px;top:1132px;width:236.5px;height:23.7px;background:#f0f0f0"></div><svg class="i" style="left:0;top:0" width="1100" height="1160" viewBox="0 0 1100 1160"><g fill="none" stroke="#333" stroke-width="1.200"><path d="M859.800 1138.400v13.400M858 1139.800l1.800-3.200l1.800 3.200" /><ellipse cx="859.800" cy="1145.600" rx="7.200" ry="3.200"/><path d="M854.600 1146.600l-1.800 2.400l3 .4" /></g><rect x="858.600" y="1139" width="2.400" height="12.600" fill="#f0f0f0"/><path d="M859.800 1138.400v13.400" stroke="#333" stroke-width="2.600" fill="none"/><path d="M859.800 1139v12.400" stroke="#f0f0f0" stroke-width="1" fill="none"/><path d="M873.0 1141.400h6.200l-3.100 4.400z" fill="#333"/><path d="M885.600 1141.600h14.800v9.800h-14.800z" fill="#e8e8ee" stroke="#333" stroke-width="1.200"/><rect x="888.400" y="1144.600" width="9.200" height="3.600" fill="#9aa" stroke="#334" stroke-width=".9"/><path d="M888 1141.200l3.400-3.400l1.200 1.600l4.200-2.600v4.400" fill="#bbb" stroke="#333" stroke-width="1"/><path d="M915.200 1151.600c-1.600-2.600-3.400-4.400-3.800-5.800c.6-.8 1.800-.4 3 1.200v-6.400c0-1.400 1.800-1.400 1.800 0v-2c0-1.400 2-1.400 2 0v-.6c0-1.400 2-1.400 2 0v1.400c0-1.200 1.900-1.200 1.900 0v2c0-1.200 1.800-1 1.800.4v5.200c0 2-.8 3.200-1.400 4.600z" fill="#fff" stroke="#333" stroke-width="1.100" stroke-linejoin="round"/><path d="M917 1139.400v5M919.200 1138.400v6M921.200 1139.600v5" stroke="#333" stroke-width=".9" fill="none"/><circle cx="942.800" cy="1143.400" r="4.800" fill="#dfe9ea" stroke="#333" stroke-width="1.300"/><path d="M946.200 1147l4 4" stroke="#333" stroke-width="2.400"/><path d="M949 1138.600h4.200M951.100 1136.600v4M949 1142.600h4.200" stroke="#333" stroke-width="1.100"/><rect x="963.200" y="1136.400" width="14.600" height="14.400" fill="none" stroke="#333" stroke-width="1" stroke-dasharray="2.200 1.600"/><circle cx="969.800" cy="1142.600" r="5.600" fill="#dfe9ea" stroke="#333" stroke-width="1.300"/><path d="M973.800 1146.800l4.400 4.400" stroke="#333" stroke-width="2.600"/><path d="M984.3 1141.400h6.200l-3.100 4.400z" fill="#333"/><rect x="996.600" y="1136.800" width="14.800" height="11" rx="1" fill="#dfe5ee" stroke="#333" stroke-width="1.300"/><rect x="998.800" y="1138.800" width="10.400" height="6.800" fill="#7fa4d8" stroke="#345" stroke-width=".7"/><path d="M1001 1151.400h6l-1-2.800h-4z" fill="#bbb" stroke="#555" stroke-width=".6"/><path d="M999.600 1151.800h9" stroke="#999" stroke-width="1"/><path d="M1014.6 1141.400h6.200l-3.100 4.400z" fill="#333"/><rect x="1027.200" y="1136.400" width="15.400" height="15.200" fill="#e9e9ef" stroke="#333" stroke-width="1.200"/><path d="M1031 1136.400v15.200M1034.900 1136.400v15.200M1038.800 1136.400v15.200M1027.200 1140.200h15.400M1027.200 1144h15.400M1027.200 1147.800h15.400" stroke="#556" stroke-width=".9"/><rect x="1027.200" y="1145" width="15.400" height="6.600" fill="#445" opacity=".35"/><path d="M1045.700 1141.400h6.200l-3.100 4.400z" fill="#333"/><rect x="1058.400" y="1137.400" width="14.600" height="12.600" rx="1" fill="#4a6fb0" stroke="#2c4a86" stroke-width=".8"/><g fill="#a9c1e6"><rect x="1060" y="1139" width="5.200" height="4"/><rect x="1066.400" y="1139" width="5.200" height="4"/><rect x="1060" y="1144.400" width="5.200" height="4"/><rect x="1066.400" y="1144.400" width="5.200" height="4"/></g><path d="M1076.0 1141.400h6.200l-3.100 4.400z" fill="#333"/></svg><div class="a" style="left:8px;top:1160.3px;width:1920px;height:8px;background:#050505"></div><div class="a" style="left:55.8px;top:1160.3px;width:343.6px;height:8px;background:#f0f0f0;border-top:1px solid #b5b5b5;box-sizing:border-box"></div><div class="a" style="left:355px;top:1163px;width:10px;height:5px;background:#b9a7c9;border-radius:3px 3px 0 0;opacity:.8"></div><div class="a" style="left:745px;top:1160.3px;width:48px;height:8px;background:#a8521a"></div><div class="a" style="left:793px;top:1160.3px;width:49px;height:8px;background:#3b3b3b"></div><div class="a" style="left:1836px;top:1166px;width:14px;height:2px;background:#888"></div><svg class="i" style="left:1800px;top:145px" width="128" height="125" viewBox="0 0 128 125"><defs><filter id="vcb" x="-30%" y="-30%" width="160%" height="160%"><feGaussianBlur stdDeviation="5"/></filter><linearGradient id="vcf" x1="0" y1="0" x2="0" y2="1"><stop offset="0" stop-color="#f0f0f0"/><stop offset="1" stop-color="#e2e2e2"/></linearGradient><linearGradient id="vcr" x1="0" y1="0" x2="0" y2="1"><stop offset="0" stop-color="#ececec"/><stop offset="1" stop-color="#dcdcdc"/></linearGradient></defs><ellipse cx="68" cy="86" rx="40" ry="19" fill="#000" opacity=".2" filter="url(#vcb)"/><polygon points="30.5,35.9 65.3,25.2 100.1,36.9 62.6,51.4" fill="#f3f3f3"/><polygon points="30.5,35.9 62.6,51.4 62.1,97.9 32.6,77.6" fill="url(#vcf)"/><polygon points="62.6,51.4 100.1,36.9 96.9,79.2 62.1,97.9" fill="url(#vcr)"/><g fill="none" stroke="#adadad" stroke-width=".9" stroke-dasharray="4 2"><polygon points="30.5,35.9 65.3,25.2 100.1,36.9 96.9,79.2 62.1,97.9 32.6,77.6"/><path d="M30.5 35.9L62.6 51.4L100.1 36.9M62.6 51.4L62.1 97.9"/></g><path d="M28.400 28.400L32.200 77" stroke="#5a5af0" stroke-width="1.300" fill="none"/><path d="M32.600 77.600L68.500 103.300" stroke="#ec8a8a" stroke-width="1.500" fill="none"/><text x="24" y="26.400" font-family="Liberation Sans" font-size="12" fill="#6a6af2">Z</text><text x="69" y="111.400" font-family="Liberation Sans" font-size="12" fill="#f07a7a">X</text><text x="0" y="7.9" font-family="'Liberation Sans','Noto Sans CJK JP',sans-serif" font-size="20.7" text-anchor="middle" fill="#9b9ea2" transform="matrix(1 0.478 0.0435 1.087 46.30 65.80)">前</text><text x="0" y="7.9" font-family="'Liberation Sans','Noto Sans CJK JP',sans-serif" font-size="20.7" text-anchor="middle" fill="#9b9ea2" transform="matrix(1 -0.434 -0.0326 1.087 80.50 64.60)">右</text><text x="0" y="6.5" font-family="'Liberation Sans','Noto Sans CJK JP',sans-serif" font-size="17.1" text-anchor="middle" fill="#9b9ea2" transform="matrix(1 0.3365 -1 0.3689 62.00 37.60)">上</text></svg>
</body></html>
